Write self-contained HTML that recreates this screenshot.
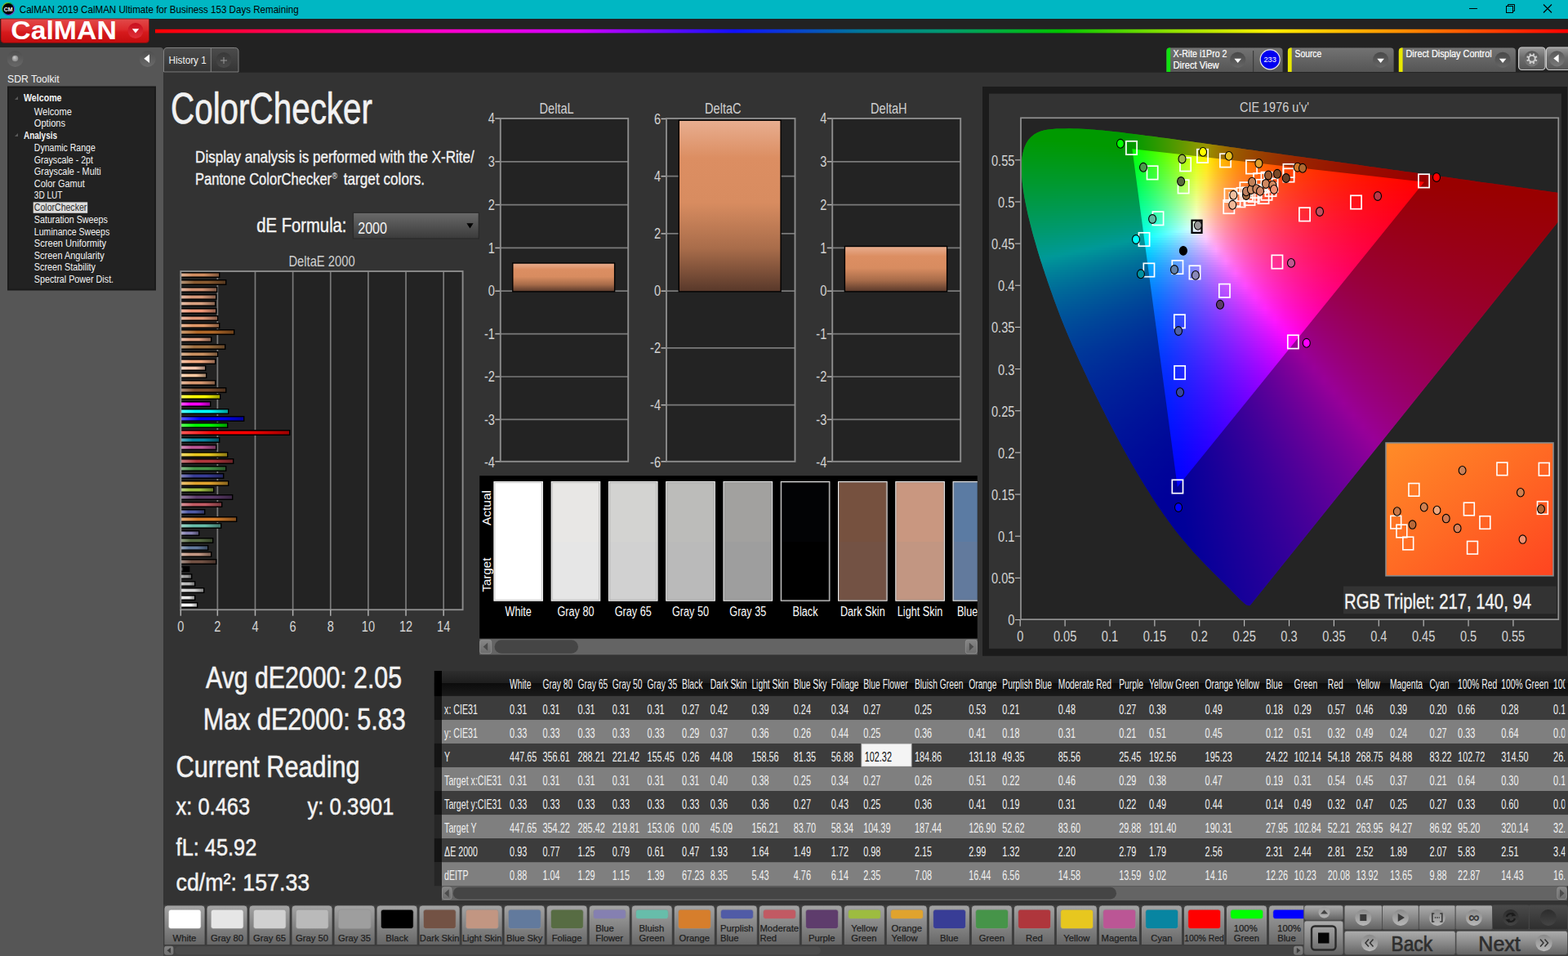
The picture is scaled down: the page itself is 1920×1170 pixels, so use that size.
<!DOCTYPE html>
<html><head><meta charset="utf-8"><title>CalMAN 2019 - ColorChecker</title>
<style>
html,body{margin:0;padding:0;background:#1f1f1f;width:1920px;height:1170px;overflow:hidden}
#cie i{position:absolute;left:0;width:660px;height:3px;display:block}
text{white-space:pre}
</style></head><body>
<svg width="1920" height="1170" viewBox="0 0 1920 1170" style="position:absolute;left:0;top:0;" font-family="Liberation Sans, sans-serif"><defs><linearGradient id="ring" x1="0" y1="0" x2="1" y2="1"><stop offset="0" stop-color="#f0c000"/><stop offset="0.35" stop-color="#00c040"/><stop offset="0.65" stop-color="#3050ff"/><stop offset="1" stop-color="#e020a0"/></linearGradient><linearGradient id="g1" x1="0" y1="0" x2="0" y2="1"><stop offset="0" stop-color="#e24a4a"/><stop offset="0.45" stop-color="#dc2a2c"/><stop offset="0.55" stop-color="#d61a1c"/><stop offset="1" stop-color="#c40c0e"/></linearGradient><linearGradient id="g2" x1="0" y1="0" x2="0" y2="1"><stop offset="0" stop-color="#c80f1e"/><stop offset="1" stop-color="#e03038"/></linearGradient><linearGradient id="g3" x1="0" y1="0" x2="1" y2="0"><stop offset="0" stop-color="#ff0000"/><stop offset="0.2" stop-color="#ff00c8"/><stop offset="0.3" stop-color="#d000ff"/><stop offset="0.41" stop-color="#1010ff"/><stop offset="0.5" stop-color="#007898"/><stop offset="0.56" stop-color="#009a70"/><stop offset="0.64" stop-color="#00c400"/><stop offset="0.72" stop-color="#90e000"/><stop offset="0.79" stop-color="#ffee00"/><stop offset="0.88" stop-color="#ff9000"/><stop offset="1" stop-color="#ff0000"/></linearGradient><linearGradient id="g4" x1="0" y1="0" x2="0" y2="1"><stop offset="0" stop-color="#4e4e4e"/><stop offset="1" stop-color="#686868"/></linearGradient><radialGradient id="g5" cx="0.5" cy="0.5" r="0.5" fx="0.35" fy="0.3"><stop offset="0" stop-color="#d0d0d0"/><stop offset="1" stop-color="#888888"/></radialGradient><linearGradient id="g6" x1="0" y1="0" x2="0" y2="1"><stop offset="0" stop-color="#4e4e4e"/><stop offset="1" stop-color="#6a6a6a"/></linearGradient><linearGradient id="g7" x1="0" y1="0" x2="0" y2="1"><stop offset="0" stop-color="#4c4c4c"/><stop offset="1" stop-color="#343434"/></linearGradient><linearGradient id="g8" x1="0" y1="0" x2="0" y2="1"><stop offset="0" stop-color="#383838"/><stop offset="1" stop-color="#4a4a4a"/></linearGradient><linearGradient id="g9" x1="0" y1="0" x2="0" y2="1"><stop offset="0" stop-color="#737373"/><stop offset="1" stop-color="#555555"/></linearGradient><linearGradient id="g10" x1="0" y1="0" x2="0" y2="1"><stop offset="0" stop-color="#484848"/><stop offset="1" stop-color="#666666"/></linearGradient><linearGradient id="g11" x1="0" y1="0" x2="0" y2="1"><stop offset="0" stop-color="#737373"/><stop offset="1" stop-color="#555555"/></linearGradient><linearGradient id="g12" x1="0" y1="0" x2="0" y2="1"><stop offset="0" stop-color="#484848"/><stop offset="1" stop-color="#666666"/></linearGradient><linearGradient id="g13" x1="0" y1="0" x2="0" y2="1"><stop offset="0" stop-color="#737373"/><stop offset="1" stop-color="#555555"/></linearGradient><linearGradient id="g14" x1="0" y1="0" x2="0" y2="1"><stop offset="0" stop-color="#484848"/><stop offset="1" stop-color="#666666"/></linearGradient><linearGradient id="g15" x1="0" y1="0" x2="0" y2="1"><stop offset="0" stop-color="#9a9a9a"/><stop offset="0.45" stop-color="#6c6c6c"/><stop offset="1" stop-color="#565656"/></linearGradient><linearGradient id="g16" x1="0" y1="0" x2="0" y2="1"><stop offset="0" stop-color="#585858"/><stop offset="1" stop-color="#7a7a7a"/></linearGradient><linearGradient id="g17" x1="0" y1="0" x2="0" y2="1"><stop offset="0" stop-color="#585858"/><stop offset="1" stop-color="#7a7a7a"/></linearGradient><linearGradient id="g18" x1="0" y1="0" x2="0" y2="1"><stop offset="0" stop-color="#6a6a6a"/><stop offset="1" stop-color="#3a3a3a"/></linearGradient><linearGradient id="g19" x1="0" y1="0" x2="1" y2="0"><stop offset="0" stop-color="#fff" stop-opacity="0.35"/><stop offset="0.3" stop-color="#fff" stop-opacity="0.0"/><stop offset="0.6" stop-color="#000" stop-opacity="0.0"/><stop offset="1" stop-color="#000" stop-opacity="0.38"/></linearGradient><linearGradient id="g20" x1="0" y1="0" x2="0" y2="1"><stop offset="0" stop-color="#000" stop-opacity="0.25"/><stop offset="0.25" stop-color="#000" stop-opacity="0"/><stop offset="0.75" stop-color="#000" stop-opacity="0"/><stop offset="1" stop-color="#000" stop-opacity="0.3"/></linearGradient><linearGradient id="g21" x1="0" y1="0" x2="0" y2="1"><stop offset="0" stop-color="#e8ae90"/><stop offset="0.22" stop-color="#dc8e62"/><stop offset="0.48" stop-color="#d88c60"/><stop offset="0.75" stop-color="#a86c4a"/><stop offset="1" stop-color="#58382a"/></linearGradient><linearGradient id="g22" x1="0" y1="0" x2="0" y2="1"><stop offset="0" stop-color="#868686"/><stop offset="1" stop-color="#6c6c6c"/></linearGradient><linearGradient id="g23" x1="0" y1="0" x2="0" y2="1"><stop offset="0" stop-color="#868686"/><stop offset="1" stop-color="#6c6c6c"/></linearGradient><linearGradient id="g24" x1="0" y1="0" x2="0" y2="1"><stop offset="0" stop-color="#2e2e2e"/><stop offset="0.47" stop-color="#1e1e1e"/><stop offset="0.5" stop-color="#0c0c0c"/><stop offset="1" stop-color="#1a1a1a"/></linearGradient><linearGradient id="g25" x1="0" y1="0" x2="0" y2="1"><stop offset="0" stop-color="#868686"/><stop offset="1" stop-color="#6c6c6c"/></linearGradient><linearGradient id="g26" x1="0" y1="0" x2="0" y2="1"><stop offset="0" stop-color="#868686"/><stop offset="1" stop-color="#6c6c6c"/></linearGradient><linearGradient id="g27" x1="0" y1="0" x2="0" y2="1"><stop offset="0" stop-color="#a4a4a4"/><stop offset="0.5" stop-color="#868686"/><stop offset="1" stop-color="#666666"/></linearGradient><linearGradient id="g28" x1="0" y1="0" x2="0" y2="1"><stop offset="0" stop-color="#868686"/><stop offset="1" stop-color="#6e6e6e"/></linearGradient><linearGradient id="g29" x1="0" y1="0" x2="0" y2="1"><stop offset="0" stop-color="#868686"/><stop offset="1" stop-color="#6e6e6e"/></linearGradient><linearGradient id="g30" x1="0" y1="0" x2="0" y2="1"><stop offset="0" stop-color="#adadad"/><stop offset="0.5" stop-color="#8a8a8a"/><stop offset="1" stop-color="#626262"/></linearGradient><linearGradient id="g31" x1="0" y1="0" x2="0" y2="1"><stop offset="0" stop-color="#4a4a4a"/><stop offset="1" stop-color="#2e2e2e"/></linearGradient><linearGradient id="g32" x1="0" y1="0" x2="0" y2="1"><stop offset="0" stop-color="#9c9c9c"/><stop offset="1" stop-color="#b4b4b4"/></linearGradient><linearGradient id="g33" x1="0" y1="0" x2="0" y2="1"><stop offset="0" stop-color="#8a8a8a"/><stop offset="1" stop-color="#b8b8b8"/></linearGradient><linearGradient id="g34" x1="0" y1="0" x2="0" y2="1"><stop offset="0" stop-color="#8a8a8a"/><stop offset="1" stop-color="#b8b8b8"/></linearGradient><linearGradient id="g35" x1="0" y1="0" x2="0" y2="1"><stop offset="0" stop-color="#8a8a8a"/><stop offset="1" stop-color="#b8b8b8"/></linearGradient><linearGradient id="g36" x1="0" y1="0" x2="0" y2="1"><stop offset="0" stop-color="#8a8a8a"/><stop offset="1" stop-color="#b8b8b8"/></linearGradient><linearGradient id="g37" x1="0" y1="0" x2="0" y2="1"><stop offset="0" stop-color="#2c2c2c"/><stop offset="1" stop-color="#444"/></linearGradient><linearGradient id="g38" x1="0" y1="0" x2="0" y2="1"><stop offset="0" stop-color="#2c2c2c"/><stop offset="1" stop-color="#444"/></linearGradient><linearGradient id="g39" x1="0" y1="0" x2="0" y2="1"><stop offset="0" stop-color="#8a8a8a"/><stop offset="1" stop-color="#b8b8b8"/></linearGradient><linearGradient id="g40" x1="0" y1="0" x2="0" y2="1"><stop offset="0" stop-color="#8a8a8a"/><stop offset="1" stop-color="#b8b8b8"/></linearGradient></defs>
<rect x="0.00" y="0.00" width="1920.00" height="1170.00" fill="#222222"/>
<rect x="0.00" y="0.00" width="1920.00" height="23.00" fill="#00b7c3"/>
<rect x="200.00" y="88.70" width="1720.00" height="1020.00" fill="#333333"/>
<path d="M0 58 H196 Q200 58 200 62 V1170 H0 Z" fill="#565656" />
<rect x="200.00" y="1107.30" width="1720.00" height="63.00" fill="#3c3c3c"/>
<circle cx="10.20" cy="10.90" r="7.70" fill="#000" />
<circle cx="10.2" cy="10.9" r="7.5" fill="none" stroke="url(#ring)" stroke-width="1.1"/>
<text x="10.20" y="13.80" font-size="8" fill="#fff" font-weight="bold" textLength="10.80" lengthAdjust="spacingAndGlyphs" text-anchor="middle" >CM</text>
<text x="23.80" y="15.80" font-size="12.2" fill="#000" textLength="341.80" lengthAdjust="spacingAndGlyphs" >CalMAN 2019 CalMAN Ultimate for Business 153 Days Remaining</text>
<line x1="1799.00" y1="10.50" x2="1809.00" y2="10.50" stroke="#000" stroke-width="1" />
<rect x="1844.50" y="7.50" width="8.00" height="8.00" fill="none" stroke="#000" stroke-width="1"/>
<path d="M1846.5 7.5 V5.5 H1854.5 V13.5 H1852.5" fill="none" stroke="#000" stroke-width="1" />
<path d="M1890 5.5 L1900 15.5 M1900 5.5 L1890 15.5" fill="none" stroke="#000" stroke-width="1.1" />
<path d="M1 23 H182.5 V48.5 Q182.5 52.5 178.5 52.5 H5 Q1 52.5 1 48.5 Z" fill="url(#g1)" stroke="#7a1010" stroke-width="0.8" />
<text x="13.30" y="47.80" font-size="31.6" fill="#fff" font-weight="bold" textLength="129.50" lengthAdjust="spacingAndGlyphs" >CalMAN</text>
<circle cx="166.00" cy="37.50" r="9.50" fill="url(#g2)" />
<path d="M161.8 35.3 H170.2 L166 40.6 Z" fill="#fff" />
<rect x="190.00" y="35.80" width="1730.00" height="4.60" fill="url(#g3)"/>
<circle cx="18.60" cy="72.00" r="10.00" fill="url(#g4)" />
<circle cx="18.50" cy="71.50" r="3.80" fill="url(#g5)" />
<circle cx="180.70" cy="72.00" r="10.00" fill="url(#g6)" />
<path d="M176.3 71.8 L183 66.5 V77.1 Z" fill="#fff" />
<text x="9.00" y="101.10" font-size="13.6" fill="#f2f2f2" textLength="63.70" lengthAdjust="spacingAndGlyphs" >SDR Toolkit</text>
<rect x="9.00" y="105.50" width="182.00" height="250.00" fill="#1a1a1a"/>
<rect x="11.00" y="107.50" width="178.00" height="246.00" fill="#222222"/>
<rect x="40.70" y="247.40" width="66.50" height="13.40" fill="#dcdcdc"/>
<text x="29.00" y="124.40" font-size="12" fill="#f4f4f4" font-weight="bold" textLength="46.50" lengthAdjust="spacingAndGlyphs" >Welcome</text>
<text x="41.80" y="140.50" font-size="12" fill="#f4f4f4" textLength="46.00" lengthAdjust="spacingAndGlyphs" >Welcome</text>
<text x="41.80" y="154.50" font-size="12" fill="#f4f4f4" textLength="38.30" lengthAdjust="spacingAndGlyphs" >Options</text>
<text x="29.00" y="169.50" font-size="12" fill="#f4f4f4" font-weight="bold" textLength="41.00" lengthAdjust="spacingAndGlyphs" >Analysis</text>
<text x="41.80" y="185.40" font-size="12" fill="#f4f4f4" textLength="75.00" lengthAdjust="spacingAndGlyphs" >Dynamic Range</text>
<text x="41.80" y="199.60" font-size="12" fill="#f4f4f4" textLength="72.20" lengthAdjust="spacingAndGlyphs" >Grayscale - 2pt</text>
<text x="41.80" y="214.40" font-size="12" fill="#f4f4f4" textLength="81.80" lengthAdjust="spacingAndGlyphs" >Grayscale - Multi</text>
<text x="41.80" y="229.40" font-size="12" fill="#f4f4f4" textLength="62.00" lengthAdjust="spacingAndGlyphs" >Color Gamut</text>
<text x="41.80" y="243.40" font-size="12" fill="#f4f4f4" textLength="34.70" lengthAdjust="spacingAndGlyphs" >3D LUT</text>
<text x="41.80" y="258.40" font-size="12" fill="#2a2a2a" textLength="64.50" lengthAdjust="spacingAndGlyphs" >ColorChecker</text>
<text x="41.80" y="273.40" font-size="12" fill="#f4f4f4" textLength="90.00" lengthAdjust="spacingAndGlyphs" >Saturation Sweeps</text>
<text x="41.80" y="287.70" font-size="12" fill="#f4f4f4" textLength="92.40" lengthAdjust="spacingAndGlyphs" >Luminance Sweeps</text>
<text x="41.80" y="302.40" font-size="12" fill="#f4f4f4" textLength="88.30" lengthAdjust="spacingAndGlyphs" >Screen Uniformity</text>
<text x="41.80" y="317.20" font-size="12" fill="#f4f4f4" textLength="85.90" lengthAdjust="spacingAndGlyphs" >Screen Angularity</text>
<text x="41.80" y="331.40" font-size="12" fill="#f4f4f4" textLength="75.20" lengthAdjust="spacingAndGlyphs" >Screen Stability</text>
<text x="41.80" y="346.40" font-size="12" fill="#f4f4f4" textLength="97.30" lengthAdjust="spacingAndGlyphs" >Spectral Power Dist.</text>
<path d="M22 118.0 V122.0 H18 Z" fill="#5a5a5a" />
<path d="M22 163.0 V167.0 H18 Z" fill="#5a5a5a" />
<path d="M200.5 88 V63 Q200.5 58.5 205 58.5 H287.5 Q292 58.5 292 63 V88 Z" fill="url(#g7)" stroke="#8a8a8a" stroke-width="0.9" />
<line x1="258.30" y1="59.00" x2="258.30" y2="88.00" stroke="#8a8a8a" stroke-width="0.9" />
<text x="206.40" y="78.20" font-size="12.4" fill="#f0f0f0" textLength="46.40" lengthAdjust="spacingAndGlyphs" >History 1</text>
<circle cx="274.00" cy="73.50" r="9.50" fill="url(#g8)" />
<path d="M274 70 V78 M270 74 H278" fill="none" stroke="#9a9a9a" stroke-width="1" />
<path d="M1428.4 88 V62.5 Q1428.4 58.5 1432.4 58.5 H1566.6 Q1570.6 58.5 1570.6 62.5 V88 Z" fill="url(#g9)" />
<path d="M1428.4 88 V62.5 Q1428.4 58.5 1432.4 58.5 H1433.2 V88 Z" fill="#10e010" />
<text x="1436.60" y="70.10" font-size="12" fill="#fff" textLength="65.80" lengthAdjust="spacingAndGlyphs"  stroke="#fff" stroke-width="0.2">X-Rite i1Pro 2</text>
<text x="1436.60" y="84.20" font-size="12" fill="#fff" textLength="56.00" lengthAdjust="spacingAndGlyphs"  stroke="#fff" stroke-width="0.2">Direct View</text>
<circle cx="1515.70" cy="73.30" r="9.60" fill="url(#g10)" />
<path d="M1511.4 71.7 H1520.0 L1515.7 76.89999999999999 Z" fill="#fff" />
<line x1="1534.60" y1="62.00" x2="1534.60" y2="88.00" stroke="#3c3c3c" stroke-width="1.2" />
<circle cx="1555.20" cy="72.80" r="12.00" fill="#0000f0" stroke="#e8e8e8" stroke-width="1.2" />
<text x="1555.20" y="76.30" font-size="9.8" fill="#fff" textLength="15.50" lengthAdjust="spacingAndGlyphs" text-anchor="middle" >233</text>
<path d="M1576.9 88 V62.5 Q1576.9 58.5 1580.9 58.5 H1702.6 Q1706.6 58.5 1706.6 62.5 V88 Z" fill="url(#g11)" />
<path d="M1576.9 88 V62.5 Q1576.9 58.5 1580.9 58.5 H1581.7 V88 Z" fill="#e8e800" />
<text x="1585.50" y="70.10" font-size="12" fill="#fff" textLength="32.80" lengthAdjust="spacingAndGlyphs"  stroke="#fff" stroke-width="0.2">Source</text>
<circle cx="1690.60" cy="73.30" r="9.60" fill="url(#g12)" />
<path d="M1686.3 71.7 H1694.8999999999999 L1690.6 76.89999999999999 Z" fill="#fff" />
<path d="M1712.8 88 V62.5 Q1712.8 58.5 1716.8 58.5 H1851.9 Q1855.9 58.5 1855.9 62.5 V88 Z" fill="url(#g13)" />
<path d="M1712.8 88 V62.5 Q1712.8 58.5 1716.8 58.5 H1717.6 V88 Z" fill="#e8e800" />
<text x="1721.50" y="70.10" font-size="12" fill="#fff" textLength="105.10" lengthAdjust="spacingAndGlyphs"  stroke="#fff" stroke-width="0.2">Direct Display Control</text>
<circle cx="1840.10" cy="73.30" r="9.60" fill="url(#g14)" />
<path d="M1835.8 71.7 H1844.3999999999999 L1840.1 76.89999999999999 Z" fill="#fff" />
<rect x="1859.60" y="58.00" width="32.50" height="27.50" fill="url(#g15)" rx="4" stroke="#cacaca" stroke-width="1.2"/>
<rect x="1893.40" y="58.00" width="32.00" height="27.50" fill="url(#g15)" rx="4" stroke="#cacaca" stroke-width="1.2"/>
<circle cx="1906.50" cy="71.80" r="9.60" fill="url(#g16)" />
<path d="M1902.3 71.6 L1908.6 66.6 V76.6 Z" fill="#fff" />
<circle cx="1875.80" cy="71.80" r="9.60" fill="url(#g17)" />
<path d="M1879.50 73.33 L1881.99 74.36 M1877.33 75.50 L1878.36 77.99 M1874.27 75.50 L1873.24 77.99 M1872.10 73.33 L1869.61 74.36 M1872.10 70.27 L1869.61 69.24 M1874.27 68.10 L1873.24 65.61 M1877.33 68.10 L1878.36 65.61 M1879.50 70.27 L1881.99 69.24 " fill="none" stroke="#cfcfcf" stroke-width="2.1" />
<circle cx="1875.80" cy="71.80" r="3.90" fill="none" stroke="#cfcfcf" stroke-width="1.9" />
<text x="209.00" y="150.50" font-size="54.5" fill="#f2f2f2" textLength="247.00" lengthAdjust="spacingAndGlyphs"  stroke="#f2f2f2" stroke-width="0.7">ColorChecker</text>
<text x="239.10" y="199.00" font-size="20.8" fill="#f2f2f2" textLength="341.70" lengthAdjust="spacingAndGlyphs"  stroke="#f2f2f2" stroke-width="0.35">Display analysis is performed with the X-Rite/</text>
<text x="239.10" y="226.10" font-size="20.8" fill="#f2f2f2" textLength="167.00" lengthAdjust="spacingAndGlyphs"  stroke="#f2f2f2" stroke-width="0.35">Pantone ColorChecker</text>
<text x="406.60" y="218.50" font-size="11.5" fill="#f2f2f2" textLength="6.60" lengthAdjust="spacingAndGlyphs" >®</text>
<text x="420.80" y="226.10" font-size="20.8" fill="#f2f2f2" textLength="99.20" lengthAdjust="spacingAndGlyphs"  stroke="#f2f2f2" stroke-width="0.35">target colors.</text>
<text x="314.30" y="284.40" font-size="24.2" fill="#f2f2f2" textLength="110.20" lengthAdjust="spacingAndGlyphs"  stroke="#f2f2f2" stroke-width="0.45">dE Formula:</text>
<rect x="432.50" y="260.30" width="153.80" height="31.70" fill="url(#g18)" stroke="#2a2a2a" stroke-width="1.2"/>
<text x="438.20" y="285.50" font-size="19.8" fill="#f2f2f2" textLength="35.80" lengthAdjust="spacingAndGlyphs" >2000</text>
<path d="M571.4 273.2 H579.6 L575.5 279.6 Z" fill="#000" />
<text x="353.40" y="325.70" font-size="18" fill="#d0d0d0" textLength="81.20" lengthAdjust="spacingAndGlyphs" >DeltaE 2000</text>
<rect x="221.30" y="332.00" width="345.30" height="414.20" fill="#232323"/>
<line x1="266.34" y1="332.00" x2="266.34" y2="746.20" stroke="#7a7a7a" stroke-width="1.7" />
<line x1="312.48" y1="332.00" x2="312.48" y2="746.20" stroke="#7a7a7a" stroke-width="1.7" />
<line x1="358.62" y1="332.00" x2="358.62" y2="746.20" stroke="#7a7a7a" stroke-width="1.7" />
<line x1="404.76" y1="332.00" x2="404.76" y2="746.20" stroke="#7a7a7a" stroke-width="1.7" />
<line x1="450.90" y1="332.00" x2="450.90" y2="746.20" stroke="#7a7a7a" stroke-width="1.7" />
<line x1="497.04" y1="332.00" x2="497.04" y2="746.20" stroke="#7a7a7a" stroke-width="1.7" />
<line x1="543.18" y1="332.00" x2="543.18" y2="746.20" stroke="#7a7a7a" stroke-width="1.7" />
<rect x="221.00" y="333.00" width="48.40" height="7.00" fill="#000"/>
<rect x="222.00" y="334.50" width="46.00" height="4.00" fill="#d08c60"/>
<rect x="222.00" y="334.50" width="46.00" height="4.00" fill="url(#g19)"/>
<rect x="222.00" y="334.50" width="46.00" height="4.00" fill="url(#g20)"/>
<rect x="221.00" y="342.00" width="56.40" height="7.00" fill="#000"/>
<rect x="222.00" y="343.50" width="54.00" height="4.00" fill="#8a5a30"/>
<rect x="222.00" y="343.50" width="54.00" height="4.00" fill="url(#g19)"/>
<rect x="222.00" y="343.50" width="54.00" height="4.00" fill="url(#g20)"/>
<rect x="221.00" y="351.00" width="45.40" height="7.00" fill="#000"/>
<rect x="222.00" y="352.50" width="43.00" height="4.00" fill="#d09070"/>
<rect x="222.00" y="352.50" width="43.00" height="4.00" fill="url(#g19)"/>
<rect x="222.00" y="352.50" width="43.00" height="4.00" fill="url(#g20)"/>
<rect x="221.00" y="360.00" width="44.40" height="7.00" fill="#000"/>
<rect x="222.00" y="361.50" width="42.00" height="4.00" fill="#d89878"/>
<rect x="222.00" y="361.50" width="42.00" height="4.00" fill="url(#g19)"/>
<rect x="222.00" y="361.50" width="42.00" height="4.00" fill="url(#g20)"/>
<rect x="221.00" y="368.00" width="43.40" height="7.00" fill="#000"/>
<rect x="222.00" y="369.50" width="41.00" height="4.00" fill="#d8a080"/>
<rect x="222.00" y="369.50" width="41.00" height="4.00" fill="url(#g19)"/>
<rect x="222.00" y="369.50" width="41.00" height="4.00" fill="url(#g20)"/>
<rect x="221.00" y="377.00" width="44.40" height="7.00" fill="#000"/>
<rect x="222.00" y="378.50" width="42.00" height="4.00" fill="#f09878"/>
<rect x="222.00" y="378.50" width="42.00" height="4.00" fill="url(#g19)"/>
<rect x="222.00" y="378.50" width="42.00" height="4.00" fill="url(#g20)"/>
<rect x="221.00" y="386.00" width="46.40" height="7.00" fill="#000"/>
<rect x="222.00" y="387.50" width="44.00" height="4.00" fill="#e09878"/>
<rect x="222.00" y="387.50" width="44.00" height="4.00" fill="url(#g19)"/>
<rect x="222.00" y="387.50" width="44.00" height="4.00" fill="url(#g20)"/>
<rect x="221.00" y="395.00" width="48.40" height="7.00" fill="#000"/>
<rect x="222.00" y="396.50" width="46.00" height="4.00" fill="#e09868"/>
<rect x="222.00" y="396.50" width="46.00" height="4.00" fill="url(#g19)"/>
<rect x="222.00" y="396.50" width="46.00" height="4.00" fill="url(#g20)"/>
<rect x="221.00" y="403.00" width="66.40" height="7.00" fill="#000"/>
<rect x="222.00" y="404.50" width="64.00" height="4.00" fill="#b06828"/>
<rect x="222.00" y="404.50" width="64.00" height="4.00" fill="url(#g19)"/>
<rect x="222.00" y="404.50" width="64.00" height="4.00" fill="url(#g20)"/>
<rect x="221.00" y="412.00" width="38.40" height="7.00" fill="#000"/>
<rect x="222.00" y="413.50" width="36.00" height="4.00" fill="#e0a080"/>
<rect x="222.00" y="413.50" width="36.00" height="4.00" fill="url(#g19)"/>
<rect x="222.00" y="413.50" width="36.00" height="4.00" fill="url(#g20)"/>
<rect x="221.00" y="421.00" width="55.40" height="7.00" fill="#000"/>
<rect x="222.00" y="422.50" width="53.00" height="4.00" fill="#a07040"/>
<rect x="222.00" y="422.50" width="53.00" height="4.00" fill="url(#g19)"/>
<rect x="222.00" y="422.50" width="53.00" height="4.00" fill="url(#g20)"/>
<rect x="221.00" y="430.00" width="46.40" height="7.00" fill="#000"/>
<rect x="222.00" y="431.50" width="44.00" height="4.00" fill="#c89060"/>
<rect x="222.00" y="431.50" width="44.00" height="4.00" fill="url(#g19)"/>
<rect x="222.00" y="431.50" width="44.00" height="4.00" fill="url(#g20)"/>
<rect x="221.00" y="439.00" width="43.40" height="7.00" fill="#000"/>
<rect x="222.00" y="440.50" width="41.00" height="4.00" fill="#f0a880"/>
<rect x="222.00" y="440.50" width="41.00" height="4.00" fill="url(#g19)"/>
<rect x="222.00" y="440.50" width="41.00" height="4.00" fill="url(#g20)"/>
<rect x="221.00" y="447.00" width="31.40" height="7.00" fill="#000"/>
<rect x="222.00" y="448.50" width="29.00" height="4.00" fill="#f8c8b0"/>
<rect x="222.00" y="448.50" width="29.00" height="4.00" fill="url(#g19)"/>
<rect x="222.00" y="448.50" width="29.00" height="4.00" fill="url(#g20)"/>
<rect x="221.00" y="456.00" width="32.40" height="7.00" fill="#000"/>
<rect x="222.00" y="457.50" width="30.00" height="4.00" fill="#f8c8a0"/>
<rect x="222.00" y="457.50" width="30.00" height="4.00" fill="url(#g19)"/>
<rect x="222.00" y="457.50" width="30.00" height="4.00" fill="url(#g20)"/>
<rect x="221.00" y="465.00" width="43.40" height="7.00" fill="#000"/>
<rect x="222.00" y="466.50" width="41.00" height="4.00" fill="#d89870"/>
<rect x="222.00" y="466.50" width="41.00" height="4.00" fill="url(#g19)"/>
<rect x="222.00" y="466.50" width="41.00" height="4.00" fill="url(#g20)"/>
<rect x="221.00" y="474.00" width="56.40" height="7.00" fill="#000"/>
<rect x="222.00" y="475.50" width="54.00" height="4.00" fill="#805030"/>
<rect x="222.00" y="475.50" width="54.00" height="4.00" fill="url(#g19)"/>
<rect x="222.00" y="475.50" width="54.00" height="4.00" fill="url(#g20)"/>
<rect x="221.00" y="482.00" width="49.40" height="7.00" fill="#000"/>
<rect x="222.00" y="483.50" width="47.00" height="4.00" fill="#ffff00"/>
<rect x="222.00" y="483.50" width="47.00" height="4.00" fill="url(#g19)"/>
<rect x="222.00" y="483.50" width="47.00" height="4.00" fill="url(#g20)"/>
<rect x="221.00" y="491.00" width="37.40" height="7.00" fill="#000"/>
<rect x="222.00" y="492.50" width="35.00" height="4.00" fill="#ff00ff"/>
<rect x="222.00" y="492.50" width="35.00" height="4.00" fill="url(#g19)"/>
<rect x="222.00" y="492.50" width="35.00" height="4.00" fill="url(#g20)"/>
<rect x="221.00" y="500.00" width="59.40" height="7.00" fill="#000"/>
<rect x="222.00" y="501.50" width="57.00" height="4.00" fill="#00ffff"/>
<rect x="222.00" y="501.50" width="57.00" height="4.00" fill="url(#g19)"/>
<rect x="222.00" y="501.50" width="57.00" height="4.00" fill="url(#g20)"/>
<rect x="221.00" y="509.00" width="78.40" height="7.00" fill="#000"/>
<rect x="222.00" y="510.50" width="76.00" height="4.00" fill="#0000ff"/>
<rect x="222.00" y="510.50" width="76.00" height="4.00" fill="url(#g19)"/>
<rect x="222.00" y="510.50" width="76.00" height="4.00" fill="url(#g20)"/>
<rect x="221.00" y="517.00" width="58.40" height="7.00" fill="#000"/>
<rect x="222.00" y="518.50" width="56.00" height="4.00" fill="#00ff00"/>
<rect x="222.00" y="518.50" width="56.00" height="4.00" fill="url(#g19)"/>
<rect x="222.00" y="518.50" width="56.00" height="4.00" fill="url(#g20)"/>
<rect x="221.00" y="526.00" width="134.40" height="7.00" fill="#000"/>
<rect x="222.00" y="527.50" width="132.00" height="4.00" fill="#ff0000"/>
<rect x="222.00" y="527.50" width="132.00" height="4.00" fill="url(#g19)"/>
<rect x="222.00" y="527.50" width="132.00" height="4.00" fill="url(#g20)"/>
<rect x="221.00" y="535.00" width="48.40" height="7.00" fill="#000"/>
<rect x="222.00" y="536.50" width="46.00" height="4.00" fill="#0885a1"/>
<rect x="222.00" y="536.50" width="46.00" height="4.00" fill="url(#g19)"/>
<rect x="222.00" y="536.50" width="46.00" height="4.00" fill="url(#g20)"/>
<rect x="221.00" y="544.00" width="44.40" height="7.00" fill="#000"/>
<rect x="222.00" y="545.50" width="42.00" height="4.00" fill="#bb5695"/>
<rect x="222.00" y="545.50" width="42.00" height="4.00" fill="url(#g19)"/>
<rect x="222.00" y="545.50" width="42.00" height="4.00" fill="url(#g20)"/>
<rect x="221.00" y="553.00" width="58.40" height="7.00" fill="#000"/>
<rect x="222.00" y="554.50" width="56.00" height="4.00" fill="#e7c71f"/>
<rect x="222.00" y="554.50" width="56.00" height="4.00" fill="url(#g19)"/>
<rect x="222.00" y="554.50" width="56.00" height="4.00" fill="url(#g20)"/>
<rect x="221.00" y="561.00" width="65.40" height="7.00" fill="#000"/>
<rect x="222.00" y="562.50" width="63.00" height="4.00" fill="#af363c"/>
<rect x="222.00" y="562.50" width="63.00" height="4.00" fill="url(#g19)"/>
<rect x="222.00" y="562.50" width="63.00" height="4.00" fill="url(#g20)"/>
<rect x="221.00" y="570.00" width="56.40" height="7.00" fill="#000"/>
<rect x="222.00" y="571.50" width="54.00" height="4.00" fill="#469449"/>
<rect x="222.00" y="571.50" width="54.00" height="4.00" fill="url(#g19)"/>
<rect x="222.00" y="571.50" width="54.00" height="4.00" fill="url(#g20)"/>
<rect x="221.00" y="579.00" width="53.40" height="7.00" fill="#000"/>
<rect x="222.00" y="580.50" width="51.00" height="4.00" fill="#383d96"/>
<rect x="222.00" y="580.50" width="51.00" height="4.00" fill="url(#g19)"/>
<rect x="222.00" y="580.50" width="51.00" height="4.00" fill="url(#g20)"/>
<rect x="221.00" y="588.00" width="59.40" height="7.00" fill="#000"/>
<rect x="222.00" y="589.50" width="57.00" height="4.00" fill="#e0a32e"/>
<rect x="222.00" y="589.50" width="57.00" height="4.00" fill="url(#g19)"/>
<rect x="222.00" y="589.50" width="57.00" height="4.00" fill="url(#g20)"/>
<rect x="221.00" y="596.00" width="41.40" height="7.00" fill="#000"/>
<rect x="222.00" y="597.50" width="39.00" height="4.00" fill="#9dbc40"/>
<rect x="222.00" y="597.50" width="39.00" height="4.00" fill="url(#g19)"/>
<rect x="222.00" y="597.50" width="39.00" height="4.00" fill="url(#g20)"/>
<rect x="221.00" y="605.00" width="64.40" height="7.00" fill="#000"/>
<rect x="222.00" y="606.50" width="62.00" height="4.00" fill="#5e3c6c"/>
<rect x="222.00" y="606.50" width="62.00" height="4.00" fill="url(#g19)"/>
<rect x="222.00" y="606.50" width="62.00" height="4.00" fill="url(#g20)"/>
<rect x="221.00" y="614.00" width="51.40" height="7.00" fill="#000"/>
<rect x="222.00" y="615.50" width="49.00" height="4.00" fill="#c15a63"/>
<rect x="222.00" y="615.50" width="49.00" height="4.00" fill="url(#g19)"/>
<rect x="222.00" y="615.50" width="49.00" height="4.00" fill="url(#g20)"/>
<rect x="221.00" y="623.00" width="30.40" height="7.00" fill="#000"/>
<rect x="222.00" y="624.50" width="28.00" height="4.00" fill="#505ba6"/>
<rect x="222.00" y="624.50" width="28.00" height="4.00" fill="url(#g19)"/>
<rect x="222.00" y="624.50" width="28.00" height="4.00" fill="url(#g20)"/>
<rect x="221.00" y="632.00" width="69.40" height="7.00" fill="#000"/>
<rect x="222.00" y="633.50" width="67.00" height="4.00" fill="#d67e2c"/>
<rect x="222.00" y="633.50" width="67.00" height="4.00" fill="url(#g19)"/>
<rect x="222.00" y="633.50" width="67.00" height="4.00" fill="url(#g20)"/>
<rect x="221.00" y="640.00" width="50.40" height="7.00" fill="#000"/>
<rect x="222.00" y="641.50" width="48.00" height="4.00" fill="#67bdaa"/>
<rect x="222.00" y="641.50" width="48.00" height="4.00" fill="url(#g19)"/>
<rect x="222.00" y="641.50" width="48.00" height="4.00" fill="url(#g20)"/>
<rect x="221.00" y="649.00" width="23.40" height="7.00" fill="#000"/>
<rect x="222.00" y="650.50" width="21.00" height="4.00" fill="#8580b1"/>
<rect x="222.00" y="650.50" width="21.00" height="4.00" fill="url(#g19)"/>
<rect x="222.00" y="650.50" width="21.00" height="4.00" fill="url(#g20)"/>
<rect x="221.00" y="658.00" width="40.40" height="7.00" fill="#000"/>
<rect x="222.00" y="659.50" width="38.00" height="4.00" fill="#576c43"/>
<rect x="222.00" y="659.50" width="38.00" height="4.00" fill="url(#g19)"/>
<rect x="222.00" y="659.50" width="38.00" height="4.00" fill="url(#g20)"/>
<rect x="221.00" y="667.00" width="34.40" height="7.00" fill="#000"/>
<rect x="222.00" y="668.50" width="32.00" height="4.00" fill="#627a9d"/>
<rect x="222.00" y="668.50" width="32.00" height="4.00" fill="url(#g19)"/>
<rect x="222.00" y="668.50" width="32.00" height="4.00" fill="url(#g20)"/>
<rect x="221.00" y="675.00" width="38.40" height="7.00" fill="#000"/>
<rect x="222.00" y="676.50" width="36.00" height="4.00" fill="#c29682"/>
<rect x="222.00" y="676.50" width="36.00" height="4.00" fill="url(#g19)"/>
<rect x="222.00" y="676.50" width="36.00" height="4.00" fill="url(#g20)"/>
<rect x="221.00" y="684.00" width="44.40" height="7.00" fill="#000"/>
<rect x="222.00" y="685.50" width="42.00" height="4.00" fill="#735244"/>
<rect x="222.00" y="685.50" width="42.00" height="4.00" fill="url(#g19)"/>
<rect x="222.00" y="685.50" width="42.00" height="4.00" fill="url(#g20)"/>
<rect x="221.00" y="693.00" width="11.40" height="7.00" fill="#000"/>
<rect x="222.00" y="694.50" width="9.00" height="4.00" fill="#000000"/>
<rect x="222.00" y="694.50" width="9.00" height="4.00" fill="url(#g19)"/>
<rect x="222.00" y="694.50" width="9.00" height="4.00" fill="url(#g20)"/>
<rect x="221.00" y="702.00" width="14.40" height="7.00" fill="#000"/>
<rect x="222.00" y="703.50" width="12.00" height="4.00" fill="#9e9e9e"/>
<rect x="222.00" y="703.50" width="12.00" height="4.00" fill="url(#g19)"/>
<rect x="222.00" y="703.50" width="12.00" height="4.00" fill="url(#g20)"/>
<rect x="221.00" y="711.00" width="18.40" height="7.00" fill="#000"/>
<rect x="222.00" y="712.50" width="16.00" height="4.00" fill="#bababa"/>
<rect x="222.00" y="712.50" width="16.00" height="4.00" fill="url(#g19)"/>
<rect x="222.00" y="712.50" width="16.00" height="4.00" fill="url(#g20)"/>
<rect x="221.00" y="719.00" width="29.40" height="7.00" fill="#000"/>
<rect x="222.00" y="720.50" width="27.00" height="4.00" fill="#d1d1d1"/>
<rect x="222.00" y="720.50" width="27.00" height="4.00" fill="url(#g19)"/>
<rect x="222.00" y="720.50" width="27.00" height="4.00" fill="url(#g20)"/>
<rect x="221.00" y="728.00" width="18.40" height="7.00" fill="#000"/>
<rect x="222.00" y="729.50" width="16.00" height="4.00" fill="#e6e6e6"/>
<rect x="222.00" y="729.50" width="16.00" height="4.00" fill="url(#g19)"/>
<rect x="222.00" y="729.50" width="16.00" height="4.00" fill="url(#g20)"/>
<rect x="221.00" y="737.00" width="21.40" height="7.00" fill="#000"/>
<rect x="222.00" y="738.50" width="19.00" height="4.00" fill="#ffffff"/>
<rect x="222.00" y="738.50" width="19.00" height="4.00" fill="url(#g19)"/>
<rect x="222.00" y="738.50" width="19.00" height="4.00" fill="url(#g20)"/>
<rect x="221.30" y="332.00" width="345.30" height="414.20" fill="none" stroke="#8c8c8c" stroke-width="1.9"/>
<line x1="221.30" y1="746.20" x2="221.30" y2="753.70" stroke="#b0b0b0" stroke-width="1.5" />
<text x="221.30" y="772.80" font-size="17.6" fill="#d4d4d4" textLength="8.12" lengthAdjust="spacingAndGlyphs" text-anchor="middle" >0</text>
<line x1="266.34" y1="746.20" x2="266.34" y2="753.70" stroke="#b0b0b0" stroke-width="1.5" />
<text x="266.34" y="772.80" font-size="17.6" fill="#d4d4d4" textLength="8.12" lengthAdjust="spacingAndGlyphs" text-anchor="middle" >2</text>
<line x1="312.48" y1="746.20" x2="312.48" y2="753.70" stroke="#b0b0b0" stroke-width="1.5" />
<text x="312.48" y="772.80" font-size="17.6" fill="#d4d4d4" textLength="8.12" lengthAdjust="spacingAndGlyphs" text-anchor="middle" >4</text>
<line x1="358.62" y1="746.20" x2="358.62" y2="753.70" stroke="#b0b0b0" stroke-width="1.5" />
<text x="358.62" y="772.80" font-size="17.6" fill="#d4d4d4" textLength="8.12" lengthAdjust="spacingAndGlyphs" text-anchor="middle" >6</text>
<line x1="404.76" y1="746.20" x2="404.76" y2="753.70" stroke="#b0b0b0" stroke-width="1.5" />
<text x="404.76" y="772.80" font-size="17.6" fill="#d4d4d4" textLength="8.12" lengthAdjust="spacingAndGlyphs" text-anchor="middle" >8</text>
<line x1="450.90" y1="746.20" x2="450.90" y2="753.70" stroke="#b0b0b0" stroke-width="1.5" />
<text x="450.90" y="772.80" font-size="17.6" fill="#d4d4d4" textLength="16.25" lengthAdjust="spacingAndGlyphs" text-anchor="middle" >10</text>
<line x1="497.04" y1="746.20" x2="497.04" y2="753.70" stroke="#b0b0b0" stroke-width="1.5" />
<text x="497.04" y="772.80" font-size="17.6" fill="#d4d4d4" textLength="16.25" lengthAdjust="spacingAndGlyphs" text-anchor="middle" >12</text>
<line x1="543.18" y1="746.20" x2="543.18" y2="753.70" stroke="#b0b0b0" stroke-width="1.5" />
<text x="543.18" y="772.80" font-size="17.6" fill="#d4d4d4" textLength="16.25" lengthAdjust="spacingAndGlyphs" text-anchor="middle" >14</text>
<rect x="612.80" y="145.00" width="156.40" height="419.80" fill="#232323"/>
<line x1="606.30" y1="145.00" x2="612.80" y2="145.00" stroke="#b8b8b8" stroke-width="1.5" />
<text x="605.90" y="151.20" font-size="17.6" fill="#d4d4d4" textLength="8.12" lengthAdjust="spacingAndGlyphs" text-anchor="end" >4</text>
<line x1="612.80" y1="197.80" x2="769.20" y2="197.80" stroke="#7a7a7a" stroke-width="1.7" />
<line x1="606.30" y1="197.80" x2="612.80" y2="197.80" stroke="#b8b8b8" stroke-width="1.5" />
<text x="605.90" y="204.00" font-size="17.6" fill="#d4d4d4" textLength="8.12" lengthAdjust="spacingAndGlyphs" text-anchor="end" >3</text>
<line x1="612.80" y1="250.60" x2="769.20" y2="250.60" stroke="#7a7a7a" stroke-width="1.7" />
<line x1="606.30" y1="250.60" x2="612.80" y2="250.60" stroke="#b8b8b8" stroke-width="1.5" />
<text x="605.90" y="256.80" font-size="17.6" fill="#d4d4d4" textLength="8.12" lengthAdjust="spacingAndGlyphs" text-anchor="end" >2</text>
<line x1="612.80" y1="303.40" x2="769.20" y2="303.40" stroke="#7a7a7a" stroke-width="1.7" />
<line x1="606.30" y1="303.40" x2="612.80" y2="303.40" stroke="#b8b8b8" stroke-width="1.5" />
<text x="605.90" y="309.60" font-size="17.6" fill="#d4d4d4" textLength="8.12" lengthAdjust="spacingAndGlyphs" text-anchor="end" >1</text>
<line x1="612.80" y1="356.20" x2="769.20" y2="356.20" stroke="#7a7a7a" stroke-width="1.7" />
<line x1="606.30" y1="356.20" x2="612.80" y2="356.20" stroke="#b8b8b8" stroke-width="1.5" />
<text x="605.90" y="362.40" font-size="17.6" fill="#d4d4d4" textLength="8.12" lengthAdjust="spacingAndGlyphs" text-anchor="end" >0</text>
<line x1="612.80" y1="408.60" x2="769.20" y2="408.60" stroke="#7a7a7a" stroke-width="1.7" />
<line x1="606.30" y1="408.60" x2="612.80" y2="408.60" stroke="#b8b8b8" stroke-width="1.5" />
<text x="605.90" y="414.80" font-size="17.6" fill="#d4d4d4" textLength="12.99" lengthAdjust="spacingAndGlyphs" text-anchor="end" >-1</text>
<line x1="612.80" y1="461.01" x2="769.20" y2="461.01" stroke="#7a7a7a" stroke-width="1.7" />
<line x1="606.30" y1="461.01" x2="612.80" y2="461.01" stroke="#b8b8b8" stroke-width="1.5" />
<text x="605.90" y="467.21" font-size="17.6" fill="#d4d4d4" textLength="12.99" lengthAdjust="spacingAndGlyphs" text-anchor="end" >-2</text>
<line x1="612.80" y1="513.41" x2="769.20" y2="513.41" stroke="#7a7a7a" stroke-width="1.7" />
<line x1="606.30" y1="513.41" x2="612.80" y2="513.41" stroke="#b8b8b8" stroke-width="1.5" />
<text x="605.90" y="519.61" font-size="17.6" fill="#d4d4d4" textLength="12.99" lengthAdjust="spacingAndGlyphs" text-anchor="end" >-3</text>
<line x1="606.30" y1="564.80" x2="612.80" y2="564.80" stroke="#b8b8b8" stroke-width="1.5" />
<text x="605.90" y="572.02" font-size="17.6" fill="#d4d4d4" textLength="12.99" lengthAdjust="spacingAndGlyphs" text-anchor="end" >-4</text>
<rect x="612.80" y="145.00" width="156.40" height="419.80" fill="none" stroke="#8c8c8c" stroke-width="1.9"/>
<rect x="627.80" y="322.00" width="124.80" height="34.90" fill="url(#g21)" stroke="#000" stroke-width="1.4"/>
<text x="681.60" y="139.00" font-size="18" fill="#d0d0d0" textLength="42.15" lengthAdjust="spacingAndGlyphs" text-anchor="middle" >DeltaL</text>
<rect x="816.00" y="145.00" width="157.50" height="419.80" fill="#232323"/>
<line x1="809.50" y1="145.42" x2="816.00" y2="145.42" stroke="#b8b8b8" stroke-width="1.5" />
<text x="809.10" y="151.62" font-size="17.6" fill="#d4d4d4" textLength="8.12" lengthAdjust="spacingAndGlyphs" text-anchor="end" >6</text>
<line x1="816.00" y1="215.68" x2="973.50" y2="215.68" stroke="#7a7a7a" stroke-width="1.7" />
<line x1="809.50" y1="215.68" x2="816.00" y2="215.68" stroke="#b8b8b8" stroke-width="1.5" />
<text x="809.10" y="221.88" font-size="17.6" fill="#d4d4d4" textLength="8.12" lengthAdjust="spacingAndGlyphs" text-anchor="end" >4</text>
<line x1="816.00" y1="285.94" x2="973.50" y2="285.94" stroke="#7a7a7a" stroke-width="1.7" />
<line x1="809.50" y1="285.94" x2="816.00" y2="285.94" stroke="#b8b8b8" stroke-width="1.5" />
<text x="809.10" y="292.14" font-size="17.6" fill="#d4d4d4" textLength="8.12" lengthAdjust="spacingAndGlyphs" text-anchor="end" >2</text>
<line x1="816.00" y1="356.20" x2="973.50" y2="356.20" stroke="#7a7a7a" stroke-width="1.7" />
<line x1="809.50" y1="356.20" x2="816.00" y2="356.20" stroke="#b8b8b8" stroke-width="1.5" />
<text x="809.10" y="362.40" font-size="17.6" fill="#d4d4d4" textLength="8.12" lengthAdjust="spacingAndGlyphs" text-anchor="end" >0</text>
<line x1="816.00" y1="425.93" x2="973.50" y2="425.93" stroke="#7a7a7a" stroke-width="1.7" />
<line x1="809.50" y1="425.93" x2="816.00" y2="425.93" stroke="#b8b8b8" stroke-width="1.5" />
<text x="809.10" y="432.13" font-size="17.6" fill="#d4d4d4" textLength="12.99" lengthAdjust="spacingAndGlyphs" text-anchor="end" >-2</text>
<line x1="816.00" y1="495.67" x2="973.50" y2="495.67" stroke="#7a7a7a" stroke-width="1.7" />
<line x1="809.50" y1="495.67" x2="816.00" y2="495.67" stroke="#b8b8b8" stroke-width="1.5" />
<text x="809.10" y="501.87" font-size="17.6" fill="#d4d4d4" textLength="12.99" lengthAdjust="spacingAndGlyphs" text-anchor="end" >-4</text>
<line x1="809.50" y1="564.80" x2="816.00" y2="564.80" stroke="#b8b8b8" stroke-width="1.5" />
<text x="809.10" y="571.60" font-size="17.6" fill="#d4d4d4" textLength="12.99" lengthAdjust="spacingAndGlyphs" text-anchor="end" >-6</text>
<rect x="816.00" y="145.00" width="157.50" height="419.80" fill="none" stroke="#8c8c8c" stroke-width="1.9"/>
<rect x="831.30" y="147.20" width="124.80" height="209.70" fill="url(#g21)" stroke="#000" stroke-width="1.4"/>
<text x="885.35" y="139.00" font-size="18" fill="#d0d0d0" textLength="44.57" lengthAdjust="spacingAndGlyphs" text-anchor="middle" >DeltaC</text>
<rect x="1019.20" y="145.00" width="157.00" height="419.80" fill="#232323"/>
<line x1="1012.70" y1="145.00" x2="1019.20" y2="145.00" stroke="#b8b8b8" stroke-width="1.5" />
<text x="1012.30" y="151.20" font-size="17.6" fill="#d4d4d4" textLength="8.12" lengthAdjust="spacingAndGlyphs" text-anchor="end" >4</text>
<line x1="1019.20" y1="197.80" x2="1176.20" y2="197.80" stroke="#7a7a7a" stroke-width="1.7" />
<line x1="1012.70" y1="197.80" x2="1019.20" y2="197.80" stroke="#b8b8b8" stroke-width="1.5" />
<text x="1012.30" y="204.00" font-size="17.6" fill="#d4d4d4" textLength="8.12" lengthAdjust="spacingAndGlyphs" text-anchor="end" >3</text>
<line x1="1019.20" y1="250.60" x2="1176.20" y2="250.60" stroke="#7a7a7a" stroke-width="1.7" />
<line x1="1012.70" y1="250.60" x2="1019.20" y2="250.60" stroke="#b8b8b8" stroke-width="1.5" />
<text x="1012.30" y="256.80" font-size="17.6" fill="#d4d4d4" textLength="8.12" lengthAdjust="spacingAndGlyphs" text-anchor="end" >2</text>
<line x1="1019.20" y1="303.40" x2="1176.20" y2="303.40" stroke="#7a7a7a" stroke-width="1.7" />
<line x1="1012.70" y1="303.40" x2="1019.20" y2="303.40" stroke="#b8b8b8" stroke-width="1.5" />
<text x="1012.30" y="309.60" font-size="17.6" fill="#d4d4d4" textLength="8.12" lengthAdjust="spacingAndGlyphs" text-anchor="end" >1</text>
<line x1="1019.20" y1="356.20" x2="1176.20" y2="356.20" stroke="#7a7a7a" stroke-width="1.7" />
<line x1="1012.70" y1="356.20" x2="1019.20" y2="356.20" stroke="#b8b8b8" stroke-width="1.5" />
<text x="1012.30" y="362.40" font-size="17.6" fill="#d4d4d4" textLength="8.12" lengthAdjust="spacingAndGlyphs" text-anchor="end" >0</text>
<line x1="1019.20" y1="408.60" x2="1176.20" y2="408.60" stroke="#7a7a7a" stroke-width="1.7" />
<line x1="1012.70" y1="408.60" x2="1019.20" y2="408.60" stroke="#b8b8b8" stroke-width="1.5" />
<text x="1012.30" y="414.80" font-size="17.6" fill="#d4d4d4" textLength="12.99" lengthAdjust="spacingAndGlyphs" text-anchor="end" >-1</text>
<line x1="1019.20" y1="461.01" x2="1176.20" y2="461.01" stroke="#7a7a7a" stroke-width="1.7" />
<line x1="1012.70" y1="461.01" x2="1019.20" y2="461.01" stroke="#b8b8b8" stroke-width="1.5" />
<text x="1012.30" y="467.21" font-size="17.6" fill="#d4d4d4" textLength="12.99" lengthAdjust="spacingAndGlyphs" text-anchor="end" >-2</text>
<line x1="1019.20" y1="513.41" x2="1176.20" y2="513.41" stroke="#7a7a7a" stroke-width="1.7" />
<line x1="1012.70" y1="513.41" x2="1019.20" y2="513.41" stroke="#b8b8b8" stroke-width="1.5" />
<text x="1012.30" y="519.61" font-size="17.6" fill="#d4d4d4" textLength="12.99" lengthAdjust="spacingAndGlyphs" text-anchor="end" >-3</text>
<line x1="1012.70" y1="564.80" x2="1019.20" y2="564.80" stroke="#b8b8b8" stroke-width="1.5" />
<text x="1012.30" y="572.02" font-size="17.6" fill="#d4d4d4" textLength="12.99" lengthAdjust="spacingAndGlyphs" text-anchor="end" >-4</text>
<rect x="1019.20" y="145.00" width="157.00" height="419.80" fill="none" stroke="#8c8c8c" stroke-width="1.9"/>
<rect x="1034.40" y="301.50" width="125.20" height="55.40" fill="url(#g21)" stroke="#000" stroke-width="1.4"/>
<text x="1088.30" y="139.00" font-size="18" fill="#d0d0d0" textLength="44.57" lengthAdjust="spacingAndGlyphs" text-anchor="middle" >DeltaH</text>
<rect x="587.20" y="582.20" width="609.60" height="199.50" fill="#000"/>
<clipPath id="swc"><rect x="587.2" y="582.2" width="609.6" height="199.5"/></clipPath><g clip-path="url(#swc)">
<rect x="604.90" y="589.60" width="59.60" height="73.40" fill="#ffffff"/>
<rect x="604.90" y="663.00" width="59.60" height="72.20" fill="#ffffff"/>
<rect x="605.90" y="590.60" width="57.60" height="143.60" fill="none" stroke="#808080" stroke-width="1" stroke-opacity="0.45"/>
<rect x="604.90" y="589.60" width="59.60" height="145.60" fill="none" stroke="#f6f6f6" stroke-width="1"/>
<text x="634.70" y="754.30" font-size="15.8" fill="#fff" textLength="32.31" lengthAdjust="spacingAndGlyphs" text-anchor="middle" >White</text>
<rect x="675.17" y="589.60" width="59.60" height="73.40" fill="#e8e7e5"/>
<rect x="675.17" y="663.00" width="59.60" height="72.20" fill="#e6e6e6"/>
<rect x="676.17" y="590.60" width="57.60" height="143.60" fill="none" stroke="#808080" stroke-width="1" stroke-opacity="0.45"/>
<rect x="675.17" y="589.60" width="59.60" height="145.60" fill="none" stroke="#f6f6f6" stroke-width="1"/>
<text x="704.97" y="754.30" font-size="15.8" fill="#fff" textLength="44.96" lengthAdjust="spacingAndGlyphs" text-anchor="middle" >Gray 80</text>
<rect x="745.44" y="589.60" width="59.60" height="73.40" fill="#d3d3d1"/>
<rect x="745.44" y="663.00" width="59.60" height="72.20" fill="#d1d1d1"/>
<rect x="746.44" y="590.60" width="57.60" height="143.60" fill="none" stroke="#808080" stroke-width="1" stroke-opacity="0.45"/>
<rect x="745.44" y="589.60" width="59.60" height="145.60" fill="none" stroke="#f6f6f6" stroke-width="1"/>
<text x="775.24" y="754.30" font-size="15.8" fill="#fff" textLength="44.96" lengthAdjust="spacingAndGlyphs" text-anchor="middle" >Gray 65</text>
<rect x="815.71" y="589.60" width="59.60" height="73.40" fill="#bcbcba"/>
<rect x="815.71" y="663.00" width="59.60" height="72.20" fill="#bababa"/>
<rect x="816.71" y="590.60" width="57.60" height="143.60" fill="none" stroke="#808080" stroke-width="1" stroke-opacity="0.45"/>
<rect x="815.71" y="589.60" width="59.60" height="145.60" fill="none" stroke="#f6f6f6" stroke-width="1"/>
<text x="845.51" y="754.30" font-size="15.8" fill="#fff" textLength="44.96" lengthAdjust="spacingAndGlyphs" text-anchor="middle" >Gray 50</text>
<rect x="885.98" y="589.60" width="59.60" height="73.40" fill="#a2a19f"/>
<rect x="885.98" y="663.00" width="59.60" height="72.20" fill="#9e9e9e"/>
<rect x="886.98" y="590.60" width="57.60" height="143.60" fill="none" stroke="#808080" stroke-width="1" stroke-opacity="0.45"/>
<rect x="885.98" y="589.60" width="59.60" height="145.60" fill="none" stroke="#f6f6f6" stroke-width="1"/>
<text x="915.78" y="754.30" font-size="15.8" fill="#fff" textLength="44.96" lengthAdjust="spacingAndGlyphs" text-anchor="middle" >Gray 35</text>
<rect x="956.25" y="589.60" width="59.60" height="73.40" fill="#020305"/>
<rect x="956.25" y="663.00" width="59.60" height="72.20" fill="#000000"/>
<rect x="957.25" y="590.60" width="57.60" height="143.60" fill="none" stroke="#808080" stroke-width="1" stroke-opacity="0.45"/>
<rect x="956.25" y="589.60" width="59.60" height="145.60" fill="none" stroke="#f6f6f6" stroke-width="1"/>
<text x="986.05" y="754.30" font-size="15.8" fill="#fff" textLength="30.91" lengthAdjust="spacingAndGlyphs" text-anchor="middle" >Black</text>
<rect x="1026.52" y="589.60" width="59.60" height="73.40" fill="#76513f"/>
<rect x="1026.52" y="663.00" width="59.60" height="72.20" fill="#735244"/>
<rect x="1027.52" y="590.60" width="57.60" height="143.60" fill="none" stroke="#808080" stroke-width="1" stroke-opacity="0.45"/>
<rect x="1026.52" y="589.60" width="59.60" height="145.60" fill="none" stroke="#f6f6f6" stroke-width="1"/>
<text x="1056.32" y="754.30" font-size="15.8" fill="#fff" textLength="54.79" lengthAdjust="spacingAndGlyphs" text-anchor="middle" >Dark Skin</text>
<rect x="1096.79" y="589.60" width="59.60" height="73.40" fill="#c99780"/>
<rect x="1096.79" y="663.00" width="59.60" height="72.20" fill="#c29682"/>
<rect x="1097.79" y="590.60" width="57.60" height="143.60" fill="none" stroke="#808080" stroke-width="1" stroke-opacity="0.45"/>
<rect x="1096.79" y="589.60" width="59.60" height="145.60" fill="none" stroke="#f6f6f6" stroke-width="1"/>
<text x="1126.59" y="754.30" font-size="15.8" fill="#fff" textLength="55.51" lengthAdjust="spacingAndGlyphs" text-anchor="middle" >Light Skin</text>
<rect x="1167.06" y="589.60" width="59.60" height="73.40" fill="#5b7ba3"/>
<rect x="1167.06" y="663.00" width="59.60" height="72.20" fill="#627a9d"/>
<rect x="1168.06" y="590.60" width="57.60" height="143.60" fill="none" stroke="#808080" stroke-width="1" stroke-opacity="0.45"/>
<rect x="1167.06" y="589.60" width="59.60" height="145.60" fill="none" stroke="#f6f6f6" stroke-width="1"/>
<text x="1196.86" y="754.30" font-size="15.8" fill="#fff" textLength="49.88" lengthAdjust="spacingAndGlyphs" text-anchor="middle" >Blue Sky</text>
</g>
<text x="601.20" y="643.00" font-size="14" fill="#fff" textLength="43.00" lengthAdjust="spacingAndGlyphs" transform="rotate(-90 601.20 643.00)" >Actual</text>
<text x="601.20" y="724.50" font-size="14" fill="#fff" textLength="42.00" lengthAdjust="spacingAndGlyphs" transform="rotate(-90 601.20 724.50)" >Target</text>
<rect x="587.20" y="781.70" width="609.60" height="19.60" fill="#646464"/>
<rect x="605.60" y="783.20" width="102.40" height="16.60" fill="#454545" rx="8.299999999999955"/>
<rect x="587.70" y="783.20" width="14.00" height="16.60" fill="url(#g22)" rx="2.5" stroke="#949494" stroke-width="0.8"/>
<path d="M591.7 791.5 L597.2 786.5 V796.5 Z" fill="#4c4c4c" />
<rect x="1182.30" y="783.20" width="14.00" height="16.60" fill="url(#g23)" rx="2.5" stroke="#949494" stroke-width="0.8"/>
<path d="M1192.3 791.5 L1186.8 786.5 V796.5 Z" fill="#4c4c4c" />
<text x="252.00" y="842.00" font-size="37" fill="#f2f2f2" textLength="240.00" lengthAdjust="spacingAndGlyphs"  stroke="#f2f2f2" stroke-width="0.6">Avg dE2000: 2.05</text>
<text x="248.70" y="892.60" font-size="37" fill="#f2f2f2" textLength="248.00" lengthAdjust="spacingAndGlyphs"  stroke="#f2f2f2" stroke-width="0.6">Max dE2000: 5.83</text>
<text x="215.60" y="951.40" font-size="37" fill="#f2f2f2" textLength="225.00" lengthAdjust="spacingAndGlyphs"  stroke="#f2f2f2" stroke-width="0.6">Current Reading</text>
<text x="215.60" y="996.50" font-size="30" fill="#f2f2f2" textLength="90.50" lengthAdjust="spacingAndGlyphs"  stroke="#f2f2f2" stroke-width="0.5">x: 0.463</text>
<text x="376.40" y="996.50" font-size="30" fill="#f2f2f2" textLength="106.00" lengthAdjust="spacingAndGlyphs"  stroke="#f2f2f2" stroke-width="0.5">y: 0.3901</text>
<text x="215.60" y="1047.10" font-size="30" fill="#f2f2f2" textLength="98.70" lengthAdjust="spacingAndGlyphs"  stroke="#f2f2f2" stroke-width="0.5">fL: 45.92</text>
<text x="215.60" y="1089.50" font-size="30" fill="#f2f2f2" textLength="163.60" lengthAdjust="spacingAndGlyphs"  stroke="#f2f2f2" stroke-width="0.5">cd/m²: 157.33</text>
<rect x="531.80" y="821.00" width="1388.20" height="30.90" fill="url(#g24)"/>
<rect x="541.00" y="851.90" width="1379.00" height="29.04" fill="#3c3c3c"/>
<rect x="531.80" y="851.90" width="9.20" height="29.04" fill="#141414"/>
<rect x="541.00" y="880.94" width="1379.00" height="29.04" fill="#7f7f7f"/>
<rect x="531.80" y="880.94" width="9.20" height="29.04" fill="#262626"/>
<rect x="541.00" y="909.98" width="1379.00" height="29.04" fill="#3c3c3c"/>
<rect x="531.80" y="909.98" width="9.20" height="29.04" fill="#141414"/>
<rect x="541.00" y="939.02" width="1379.00" height="29.04" fill="#7f7f7f"/>
<rect x="531.80" y="939.02" width="9.20" height="29.04" fill="#262626"/>
<rect x="541.00" y="968.06" width="1379.00" height="29.04" fill="#3c3c3c"/>
<rect x="531.80" y="968.06" width="9.20" height="29.04" fill="#141414"/>
<rect x="541.00" y="997.10" width="1379.00" height="29.04" fill="#7f7f7f"/>
<rect x="531.80" y="997.10" width="9.20" height="29.04" fill="#262626"/>
<rect x="541.00" y="1026.14" width="1379.00" height="29.04" fill="#3c3c3c"/>
<rect x="531.80" y="1026.14" width="9.20" height="29.04" fill="#141414"/>
<rect x="541.00" y="1055.18" width="1379.00" height="29.04" fill="#7f7f7f"/>
<rect x="531.80" y="1055.18" width="9.20" height="29.04" fill="#262626"/>
<rect x="531.80" y="821.00" width="9.20" height="30.90" fill="#000"/>
<rect x="1055.00" y="910.40" width="61.00" height="27.60" fill="#f4f4f4" stroke="#c8c8c8" stroke-width="1"/>
<clipPath id="tbc"><rect x="531" y="820" width="1385.5" height="265"/></clipPath><g clip-path="url(#tbc)">
<text x="624.10" y="843.20" font-size="15.8" fill="#f4f4f4" textLength="26.33" lengthAdjust="spacingAndGlyphs" >White</text>
<text x="664.50" y="843.20" font-size="15.8" fill="#f4f4f4" textLength="36.64" lengthAdjust="spacingAndGlyphs" >Gray 80</text>
<text x="707.50" y="843.20" font-size="15.8" fill="#f4f4f4" textLength="36.64" lengthAdjust="spacingAndGlyphs" >Gray 65</text>
<text x="749.80" y="843.20" font-size="15.8" fill="#f4f4f4" textLength="36.64" lengthAdjust="spacingAndGlyphs" >Gray 50</text>
<text x="792.50" y="843.20" font-size="15.8" fill="#f4f4f4" textLength="36.64" lengthAdjust="spacingAndGlyphs" >Gray 35</text>
<text x="835.10" y="843.20" font-size="15.8" fill="#f4f4f4" textLength="25.19" lengthAdjust="spacingAndGlyphs" >Black</text>
<text x="869.80" y="843.20" font-size="15.8" fill="#f4f4f4" textLength="44.65" lengthAdjust="spacingAndGlyphs" >Dark Skin</text>
<text x="920.40" y="843.20" font-size="15.8" fill="#f4f4f4" textLength="45.24" lengthAdjust="spacingAndGlyphs" >Light Skin</text>
<text x="971.80" y="843.20" font-size="15.8" fill="#f4f4f4" textLength="40.65" lengthAdjust="spacingAndGlyphs" >Blue Sky</text>
<text x="1017.80" y="843.20" font-size="15.8" fill="#f4f4f4" textLength="33.79" lengthAdjust="spacingAndGlyphs" >Foliage</text>
<text x="1057.20" y="843.20" font-size="15.8" fill="#f4f4f4" textLength="54.39" lengthAdjust="spacingAndGlyphs" >Blue Flower</text>
<text x="1119.90" y="843.20" font-size="15.8" fill="#f4f4f4" textLength="59.55" lengthAdjust="spacingAndGlyphs" >Bluish Green</text>
<text x="1186.20" y="843.20" font-size="15.8" fill="#f4f4f4" textLength="34.36" lengthAdjust="spacingAndGlyphs" >Orange</text>
<text x="1227.30" y="843.20" font-size="15.8" fill="#f4f4f4" textLength="60.70" lengthAdjust="spacingAndGlyphs" >Purplish Blue</text>
<text x="1295.80" y="843.20" font-size="15.8" fill="#f4f4f4" textLength="65.28" lengthAdjust="spacingAndGlyphs" >Moderate Red</text>
<text x="1370.20" y="843.20" font-size="15.8" fill="#f4f4f4" textLength="29.78" lengthAdjust="spacingAndGlyphs" >Purple</text>
<text x="1407.00" y="843.20" font-size="15.8" fill="#f4f4f4" textLength="60.90" lengthAdjust="spacingAndGlyphs" >Yellow Green</text>
<text x="1475.60" y="843.20" font-size="15.8" fill="#f4f4f4" textLength="66.44" lengthAdjust="spacingAndGlyphs" >Orange Yellow</text>
<text x="1549.90" y="843.20" font-size="15.8" fill="#f4f4f4" textLength="20.62" lengthAdjust="spacingAndGlyphs" >Blue</text>
<text x="1584.60" y="843.20" font-size="15.8" fill="#f4f4f4" textLength="28.63" lengthAdjust="spacingAndGlyphs" >Green</text>
<text x="1625.80" y="843.20" font-size="15.8" fill="#f4f4f4" textLength="18.90" lengthAdjust="spacingAndGlyphs" >Red</text>
<text x="1660.40" y="843.20" font-size="15.8" fill="#f4f4f4" textLength="29.40" lengthAdjust="spacingAndGlyphs" >Yellow</text>
<text x="1702.00" y="843.20" font-size="15.8" fill="#f4f4f4" textLength="40.09" lengthAdjust="spacingAndGlyphs" >Magenta</text>
<text x="1750.40" y="843.20" font-size="15.8" fill="#f4f4f4" textLength="24.05" lengthAdjust="spacingAndGlyphs" >Cyan</text>
<text x="1785.10" y="843.20" font-size="15.8" fill="#f4f4f4" textLength="48.11" lengthAdjust="spacingAndGlyphs" >100% Red</text>
<text x="1838.30" y="843.20" font-size="15.8" fill="#f4f4f4" textLength="57.84" lengthAdjust="spacingAndGlyphs" >100% Green</text>
<text x="1902.10" y="843.20" font-size="15.8" fill="#f4f4f4" textLength="49.83" lengthAdjust="spacingAndGlyphs" >100% Blue</text>
<text x="544.10" y="874.20" font-size="16.6" fill="#f0f0f0" textLength="40.74" lengthAdjust="spacingAndGlyphs" >x: CIE31</text>
<text x="624.10" y="874.20" font-size="16.6" fill="#f0f0f0" textLength="21.16" lengthAdjust="spacingAndGlyphs" >0.31</text>
<text x="664.50" y="874.20" font-size="16.6" fill="#f0f0f0" textLength="21.16" lengthAdjust="spacingAndGlyphs" >0.31</text>
<text x="707.50" y="874.20" font-size="16.6" fill="#f0f0f0" textLength="21.16" lengthAdjust="spacingAndGlyphs" >0.31</text>
<text x="749.80" y="874.20" font-size="16.6" fill="#f0f0f0" textLength="21.16" lengthAdjust="spacingAndGlyphs" >0.31</text>
<text x="792.50" y="874.20" font-size="16.6" fill="#f0f0f0" textLength="21.16" lengthAdjust="spacingAndGlyphs" >0.31</text>
<text x="835.10" y="874.20" font-size="16.6" fill="#f0f0f0" textLength="21.16" lengthAdjust="spacingAndGlyphs" >0.27</text>
<text x="869.80" y="874.20" font-size="16.6" fill="#f0f0f0" textLength="21.16" lengthAdjust="spacingAndGlyphs" >0.42</text>
<text x="920.40" y="874.20" font-size="16.6" fill="#f0f0f0" textLength="21.16" lengthAdjust="spacingAndGlyphs" >0.39</text>
<text x="971.80" y="874.20" font-size="16.6" fill="#f0f0f0" textLength="21.16" lengthAdjust="spacingAndGlyphs" >0.24</text>
<text x="1017.80" y="874.20" font-size="16.6" fill="#f0f0f0" textLength="21.16" lengthAdjust="spacingAndGlyphs" >0.34</text>
<text x="1057.20" y="874.20" font-size="16.6" fill="#f0f0f0" textLength="21.16" lengthAdjust="spacingAndGlyphs" >0.27</text>
<text x="1119.90" y="874.20" font-size="16.6" fill="#f0f0f0" textLength="21.16" lengthAdjust="spacingAndGlyphs" >0.25</text>
<text x="1186.20" y="874.20" font-size="16.6" fill="#f0f0f0" textLength="21.16" lengthAdjust="spacingAndGlyphs" >0.53</text>
<text x="1227.30" y="874.20" font-size="16.6" fill="#f0f0f0" textLength="21.16" lengthAdjust="spacingAndGlyphs" >0.21</text>
<text x="1295.80" y="874.20" font-size="16.6" fill="#f0f0f0" textLength="21.16" lengthAdjust="spacingAndGlyphs" >0.48</text>
<text x="1370.20" y="874.20" font-size="16.6" fill="#f0f0f0" textLength="21.16" lengthAdjust="spacingAndGlyphs" >0.27</text>
<text x="1407.00" y="874.20" font-size="16.6" fill="#f0f0f0" textLength="21.16" lengthAdjust="spacingAndGlyphs" >0.38</text>
<text x="1475.60" y="874.20" font-size="16.6" fill="#f0f0f0" textLength="21.16" lengthAdjust="spacingAndGlyphs" >0.49</text>
<text x="1549.90" y="874.20" font-size="16.6" fill="#f0f0f0" textLength="21.16" lengthAdjust="spacingAndGlyphs" >0.18</text>
<text x="1584.60" y="874.20" font-size="16.6" fill="#f0f0f0" textLength="21.16" lengthAdjust="spacingAndGlyphs" >0.29</text>
<text x="1625.80" y="874.20" font-size="16.6" fill="#f0f0f0" textLength="21.16" lengthAdjust="spacingAndGlyphs" >0.57</text>
<text x="1660.40" y="874.20" font-size="16.6" fill="#f0f0f0" textLength="21.16" lengthAdjust="spacingAndGlyphs" >0.46</text>
<text x="1702.00" y="874.20" font-size="16.6" fill="#f0f0f0" textLength="21.16" lengthAdjust="spacingAndGlyphs" >0.39</text>
<text x="1750.40" y="874.20" font-size="16.6" fill="#f0f0f0" textLength="21.16" lengthAdjust="spacingAndGlyphs" >0.20</text>
<text x="1785.10" y="874.20" font-size="16.6" fill="#f0f0f0" textLength="21.16" lengthAdjust="spacingAndGlyphs" >0.66</text>
<text x="1838.30" y="874.20" font-size="16.6" fill="#f0f0f0" textLength="21.16" lengthAdjust="spacingAndGlyphs" >0.28</text>
<text x="1902.10" y="874.20" font-size="16.6" fill="#f0f0f0" textLength="21.16" lengthAdjust="spacingAndGlyphs" >0.14</text>
<text x="544.10" y="903.22" font-size="16.6" fill="#f0f0f0" textLength="40.74" lengthAdjust="spacingAndGlyphs" >y: CIE31</text>
<text x="624.10" y="903.22" font-size="16.6" fill="#f0f0f0" textLength="21.16" lengthAdjust="spacingAndGlyphs" >0.33</text>
<text x="664.50" y="903.22" font-size="16.6" fill="#f0f0f0" textLength="21.16" lengthAdjust="spacingAndGlyphs" >0.33</text>
<text x="707.50" y="903.22" font-size="16.6" fill="#f0f0f0" textLength="21.16" lengthAdjust="spacingAndGlyphs" >0.33</text>
<text x="749.80" y="903.22" font-size="16.6" fill="#f0f0f0" textLength="21.16" lengthAdjust="spacingAndGlyphs" >0.33</text>
<text x="792.50" y="903.22" font-size="16.6" fill="#f0f0f0" textLength="21.16" lengthAdjust="spacingAndGlyphs" >0.33</text>
<text x="835.10" y="903.22" font-size="16.6" fill="#f0f0f0" textLength="21.16" lengthAdjust="spacingAndGlyphs" >0.29</text>
<text x="869.80" y="903.22" font-size="16.6" fill="#f0f0f0" textLength="21.16" lengthAdjust="spacingAndGlyphs" >0.37</text>
<text x="920.40" y="903.22" font-size="16.6" fill="#f0f0f0" textLength="21.16" lengthAdjust="spacingAndGlyphs" >0.36</text>
<text x="971.80" y="903.22" font-size="16.6" fill="#f0f0f0" textLength="21.16" lengthAdjust="spacingAndGlyphs" >0.26</text>
<text x="1017.80" y="903.22" font-size="16.6" fill="#f0f0f0" textLength="21.16" lengthAdjust="spacingAndGlyphs" >0.44</text>
<text x="1057.20" y="903.22" font-size="16.6" fill="#f0f0f0" textLength="21.16" lengthAdjust="spacingAndGlyphs" >0.25</text>
<text x="1119.90" y="903.22" font-size="16.6" fill="#f0f0f0" textLength="21.16" lengthAdjust="spacingAndGlyphs" >0.36</text>
<text x="1186.20" y="903.22" font-size="16.6" fill="#f0f0f0" textLength="21.16" lengthAdjust="spacingAndGlyphs" >0.41</text>
<text x="1227.30" y="903.22" font-size="16.6" fill="#f0f0f0" textLength="21.16" lengthAdjust="spacingAndGlyphs" >0.18</text>
<text x="1295.80" y="903.22" font-size="16.6" fill="#f0f0f0" textLength="21.16" lengthAdjust="spacingAndGlyphs" >0.31</text>
<text x="1370.20" y="903.22" font-size="16.6" fill="#f0f0f0" textLength="21.16" lengthAdjust="spacingAndGlyphs" >0.21</text>
<text x="1407.00" y="903.22" font-size="16.6" fill="#f0f0f0" textLength="21.16" lengthAdjust="spacingAndGlyphs" >0.51</text>
<text x="1475.60" y="903.22" font-size="16.6" fill="#f0f0f0" textLength="21.16" lengthAdjust="spacingAndGlyphs" >0.45</text>
<text x="1549.90" y="903.22" font-size="16.6" fill="#f0f0f0" textLength="21.16" lengthAdjust="spacingAndGlyphs" >0.12</text>
<text x="1584.60" y="903.22" font-size="16.6" fill="#f0f0f0" textLength="21.16" lengthAdjust="spacingAndGlyphs" >0.51</text>
<text x="1625.80" y="903.22" font-size="16.6" fill="#f0f0f0" textLength="21.16" lengthAdjust="spacingAndGlyphs" >0.32</text>
<text x="1660.40" y="903.22" font-size="16.6" fill="#f0f0f0" textLength="21.16" lengthAdjust="spacingAndGlyphs" >0.49</text>
<text x="1702.00" y="903.22" font-size="16.6" fill="#f0f0f0" textLength="21.16" lengthAdjust="spacingAndGlyphs" >0.24</text>
<text x="1750.40" y="903.22" font-size="16.6" fill="#f0f0f0" textLength="21.16" lengthAdjust="spacingAndGlyphs" >0.27</text>
<text x="1785.10" y="903.22" font-size="16.6" fill="#f0f0f0" textLength="21.16" lengthAdjust="spacingAndGlyphs" >0.33</text>
<text x="1838.30" y="903.22" font-size="16.6" fill="#f0f0f0" textLength="21.16" lengthAdjust="spacingAndGlyphs" >0.64</text>
<text x="1902.10" y="903.22" font-size="16.6" fill="#f0f0f0" textLength="21.16" lengthAdjust="spacingAndGlyphs" >0.05</text>
<text x="544.10" y="932.24" font-size="16.6" fill="#f0f0f0" textLength="7.09" lengthAdjust="spacingAndGlyphs" >Y</text>
<text x="624.10" y="932.24" font-size="16.6" fill="#f0f0f0" textLength="33.26" lengthAdjust="spacingAndGlyphs" >447.65</text>
<text x="664.50" y="932.24" font-size="16.6" fill="#f0f0f0" textLength="33.26" lengthAdjust="spacingAndGlyphs" >356.61</text>
<text x="707.50" y="932.24" font-size="16.6" fill="#f0f0f0" textLength="33.26" lengthAdjust="spacingAndGlyphs" >288.21</text>
<text x="749.80" y="932.24" font-size="16.6" fill="#f0f0f0" textLength="33.26" lengthAdjust="spacingAndGlyphs" >221.42</text>
<text x="792.50" y="932.24" font-size="16.6" fill="#f0f0f0" textLength="33.26" lengthAdjust="spacingAndGlyphs" >155.45</text>
<text x="835.10" y="932.24" font-size="16.6" fill="#f0f0f0" textLength="21.16" lengthAdjust="spacingAndGlyphs" >0.26</text>
<text x="869.80" y="932.24" font-size="16.6" fill="#f0f0f0" textLength="27.21" lengthAdjust="spacingAndGlyphs" >44.08</text>
<text x="920.40" y="932.24" font-size="16.6" fill="#f0f0f0" textLength="33.26" lengthAdjust="spacingAndGlyphs" >158.56</text>
<text x="971.80" y="932.24" font-size="16.6" fill="#f0f0f0" textLength="27.21" lengthAdjust="spacingAndGlyphs" >81.35</text>
<text x="1017.80" y="932.24" font-size="16.6" fill="#f0f0f0" textLength="27.21" lengthAdjust="spacingAndGlyphs" >56.88</text>
<text x="1058.70" y="932.24" font-size="16.6" fill="#111" textLength="33.26" lengthAdjust="spacingAndGlyphs" >102.32</text>
<text x="1119.90" y="932.24" font-size="16.6" fill="#f0f0f0" textLength="33.26" lengthAdjust="spacingAndGlyphs" >184.86</text>
<text x="1186.20" y="932.24" font-size="16.6" fill="#f0f0f0" textLength="33.26" lengthAdjust="spacingAndGlyphs" >131.18</text>
<text x="1227.30" y="932.24" font-size="16.6" fill="#f0f0f0" textLength="27.21" lengthAdjust="spacingAndGlyphs" >49.35</text>
<text x="1295.80" y="932.24" font-size="16.6" fill="#f0f0f0" textLength="27.21" lengthAdjust="spacingAndGlyphs" >85.56</text>
<text x="1370.20" y="932.24" font-size="16.6" fill="#f0f0f0" textLength="27.21" lengthAdjust="spacingAndGlyphs" >25.45</text>
<text x="1407.00" y="932.24" font-size="16.6" fill="#f0f0f0" textLength="33.26" lengthAdjust="spacingAndGlyphs" >192.56</text>
<text x="1475.60" y="932.24" font-size="16.6" fill="#f0f0f0" textLength="33.26" lengthAdjust="spacingAndGlyphs" >195.23</text>
<text x="1549.90" y="932.24" font-size="16.6" fill="#f0f0f0" textLength="27.21" lengthAdjust="spacingAndGlyphs" >24.22</text>
<text x="1584.60" y="932.24" font-size="16.6" fill="#f0f0f0" textLength="33.26" lengthAdjust="spacingAndGlyphs" >102.14</text>
<text x="1625.80" y="932.24" font-size="16.6" fill="#f0f0f0" textLength="27.21" lengthAdjust="spacingAndGlyphs" >54.18</text>
<text x="1660.40" y="932.24" font-size="16.6" fill="#f0f0f0" textLength="33.26" lengthAdjust="spacingAndGlyphs" >268.75</text>
<text x="1702.00" y="932.24" font-size="16.6" fill="#f0f0f0" textLength="27.21" lengthAdjust="spacingAndGlyphs" >84.88</text>
<text x="1750.40" y="932.24" font-size="16.6" fill="#f0f0f0" textLength="27.21" lengthAdjust="spacingAndGlyphs" >83.22</text>
<text x="1785.10" y="932.24" font-size="16.6" fill="#f0f0f0" textLength="33.26" lengthAdjust="spacingAndGlyphs" >102.72</text>
<text x="1838.30" y="932.24" font-size="16.6" fill="#f0f0f0" textLength="33.26" lengthAdjust="spacingAndGlyphs" >314.50</text>
<text x="1902.10" y="932.24" font-size="16.6" fill="#f0f0f0" textLength="27.21" lengthAdjust="spacingAndGlyphs" >26.41</text>
<text x="544.10" y="961.26" font-size="16.6" fill="#f0f0f0" textLength="70.27" lengthAdjust="spacingAndGlyphs" >Target x:CIE31</text>
<text x="624.10" y="961.26" font-size="16.6" fill="#f0f0f0" textLength="21.16" lengthAdjust="spacingAndGlyphs" >0.31</text>
<text x="664.50" y="961.26" font-size="16.6" fill="#f0f0f0" textLength="21.16" lengthAdjust="spacingAndGlyphs" >0.31</text>
<text x="707.50" y="961.26" font-size="16.6" fill="#f0f0f0" textLength="21.16" lengthAdjust="spacingAndGlyphs" >0.31</text>
<text x="749.80" y="961.26" font-size="16.6" fill="#f0f0f0" textLength="21.16" lengthAdjust="spacingAndGlyphs" >0.31</text>
<text x="792.50" y="961.26" font-size="16.6" fill="#f0f0f0" textLength="21.16" lengthAdjust="spacingAndGlyphs" >0.31</text>
<text x="835.10" y="961.26" font-size="16.6" fill="#f0f0f0" textLength="21.16" lengthAdjust="spacingAndGlyphs" >0.31</text>
<text x="869.80" y="961.26" font-size="16.6" fill="#f0f0f0" textLength="21.16" lengthAdjust="spacingAndGlyphs" >0.40</text>
<text x="920.40" y="961.26" font-size="16.6" fill="#f0f0f0" textLength="21.16" lengthAdjust="spacingAndGlyphs" >0.38</text>
<text x="971.80" y="961.26" font-size="16.6" fill="#f0f0f0" textLength="21.16" lengthAdjust="spacingAndGlyphs" >0.25</text>
<text x="1017.80" y="961.26" font-size="16.6" fill="#f0f0f0" textLength="21.16" lengthAdjust="spacingAndGlyphs" >0.34</text>
<text x="1057.20" y="961.26" font-size="16.6" fill="#f0f0f0" textLength="21.16" lengthAdjust="spacingAndGlyphs" >0.27</text>
<text x="1119.90" y="961.26" font-size="16.6" fill="#f0f0f0" textLength="21.16" lengthAdjust="spacingAndGlyphs" >0.26</text>
<text x="1186.20" y="961.26" font-size="16.6" fill="#f0f0f0" textLength="21.16" lengthAdjust="spacingAndGlyphs" >0.51</text>
<text x="1227.30" y="961.26" font-size="16.6" fill="#f0f0f0" textLength="21.16" lengthAdjust="spacingAndGlyphs" >0.22</text>
<text x="1295.80" y="961.26" font-size="16.6" fill="#f0f0f0" textLength="21.16" lengthAdjust="spacingAndGlyphs" >0.46</text>
<text x="1370.20" y="961.26" font-size="16.6" fill="#f0f0f0" textLength="21.16" lengthAdjust="spacingAndGlyphs" >0.29</text>
<text x="1407.00" y="961.26" font-size="16.6" fill="#f0f0f0" textLength="21.16" lengthAdjust="spacingAndGlyphs" >0.38</text>
<text x="1475.60" y="961.26" font-size="16.6" fill="#f0f0f0" textLength="21.16" lengthAdjust="spacingAndGlyphs" >0.47</text>
<text x="1549.90" y="961.26" font-size="16.6" fill="#f0f0f0" textLength="21.16" lengthAdjust="spacingAndGlyphs" >0.19</text>
<text x="1584.60" y="961.26" font-size="16.6" fill="#f0f0f0" textLength="21.16" lengthAdjust="spacingAndGlyphs" >0.31</text>
<text x="1625.80" y="961.26" font-size="16.6" fill="#f0f0f0" textLength="21.16" lengthAdjust="spacingAndGlyphs" >0.54</text>
<text x="1660.40" y="961.26" font-size="16.6" fill="#f0f0f0" textLength="21.16" lengthAdjust="spacingAndGlyphs" >0.45</text>
<text x="1702.00" y="961.26" font-size="16.6" fill="#f0f0f0" textLength="21.16" lengthAdjust="spacingAndGlyphs" >0.37</text>
<text x="1750.40" y="961.26" font-size="16.6" fill="#f0f0f0" textLength="21.16" lengthAdjust="spacingAndGlyphs" >0.21</text>
<text x="1785.10" y="961.26" font-size="16.6" fill="#f0f0f0" textLength="21.16" lengthAdjust="spacingAndGlyphs" >0.64</text>
<text x="1838.30" y="961.26" font-size="16.6" fill="#f0f0f0" textLength="21.16" lengthAdjust="spacingAndGlyphs" >0.30</text>
<text x="1902.10" y="961.26" font-size="16.6" fill="#f0f0f0" textLength="21.16" lengthAdjust="spacingAndGlyphs" >0.15</text>
<text x="544.10" y="990.28" font-size="16.6" fill="#f0f0f0" textLength="70.27" lengthAdjust="spacingAndGlyphs" >Target y:CIE31</text>
<text x="624.10" y="990.28" font-size="16.6" fill="#f0f0f0" textLength="21.16" lengthAdjust="spacingAndGlyphs" >0.33</text>
<text x="664.50" y="990.28" font-size="16.6" fill="#f0f0f0" textLength="21.16" lengthAdjust="spacingAndGlyphs" >0.33</text>
<text x="707.50" y="990.28" font-size="16.6" fill="#f0f0f0" textLength="21.16" lengthAdjust="spacingAndGlyphs" >0.33</text>
<text x="749.80" y="990.28" font-size="16.6" fill="#f0f0f0" textLength="21.16" lengthAdjust="spacingAndGlyphs" >0.33</text>
<text x="792.50" y="990.28" font-size="16.6" fill="#f0f0f0" textLength="21.16" lengthAdjust="spacingAndGlyphs" >0.33</text>
<text x="835.10" y="990.28" font-size="16.6" fill="#f0f0f0" textLength="21.16" lengthAdjust="spacingAndGlyphs" >0.33</text>
<text x="869.80" y="990.28" font-size="16.6" fill="#f0f0f0" textLength="21.16" lengthAdjust="spacingAndGlyphs" >0.36</text>
<text x="920.40" y="990.28" font-size="16.6" fill="#f0f0f0" textLength="21.16" lengthAdjust="spacingAndGlyphs" >0.36</text>
<text x="971.80" y="990.28" font-size="16.6" fill="#f0f0f0" textLength="21.16" lengthAdjust="spacingAndGlyphs" >0.27</text>
<text x="1017.80" y="990.28" font-size="16.6" fill="#f0f0f0" textLength="21.16" lengthAdjust="spacingAndGlyphs" >0.43</text>
<text x="1057.20" y="990.28" font-size="16.6" fill="#f0f0f0" textLength="21.16" lengthAdjust="spacingAndGlyphs" >0.25</text>
<text x="1119.90" y="990.28" font-size="16.6" fill="#f0f0f0" textLength="21.16" lengthAdjust="spacingAndGlyphs" >0.36</text>
<text x="1186.20" y="990.28" font-size="16.6" fill="#f0f0f0" textLength="21.16" lengthAdjust="spacingAndGlyphs" >0.41</text>
<text x="1227.30" y="990.28" font-size="16.6" fill="#f0f0f0" textLength="21.16" lengthAdjust="spacingAndGlyphs" >0.19</text>
<text x="1295.80" y="990.28" font-size="16.6" fill="#f0f0f0" textLength="21.16" lengthAdjust="spacingAndGlyphs" >0.31</text>
<text x="1370.20" y="990.28" font-size="16.6" fill="#f0f0f0" textLength="21.16" lengthAdjust="spacingAndGlyphs" >0.22</text>
<text x="1407.00" y="990.28" font-size="16.6" fill="#f0f0f0" textLength="21.16" lengthAdjust="spacingAndGlyphs" >0.49</text>
<text x="1475.60" y="990.28" font-size="16.6" fill="#f0f0f0" textLength="21.16" lengthAdjust="spacingAndGlyphs" >0.44</text>
<text x="1549.90" y="990.28" font-size="16.6" fill="#f0f0f0" textLength="21.16" lengthAdjust="spacingAndGlyphs" >0.14</text>
<text x="1584.60" y="990.28" font-size="16.6" fill="#f0f0f0" textLength="21.16" lengthAdjust="spacingAndGlyphs" >0.49</text>
<text x="1625.80" y="990.28" font-size="16.6" fill="#f0f0f0" textLength="21.16" lengthAdjust="spacingAndGlyphs" >0.32</text>
<text x="1660.40" y="990.28" font-size="16.6" fill="#f0f0f0" textLength="21.16" lengthAdjust="spacingAndGlyphs" >0.47</text>
<text x="1702.00" y="990.28" font-size="16.6" fill="#f0f0f0" textLength="21.16" lengthAdjust="spacingAndGlyphs" >0.25</text>
<text x="1750.40" y="990.28" font-size="16.6" fill="#f0f0f0" textLength="21.16" lengthAdjust="spacingAndGlyphs" >0.27</text>
<text x="1785.10" y="990.28" font-size="16.6" fill="#f0f0f0" textLength="21.16" lengthAdjust="spacingAndGlyphs" >0.33</text>
<text x="1838.30" y="990.28" font-size="16.6" fill="#f0f0f0" textLength="21.16" lengthAdjust="spacingAndGlyphs" >0.60</text>
<text x="1902.10" y="990.28" font-size="16.6" fill="#f0f0f0" textLength="21.16" lengthAdjust="spacingAndGlyphs" >0.06</text>
<text x="544.10" y="1019.30" font-size="16.6" fill="#f0f0f0" textLength="39.37" lengthAdjust="spacingAndGlyphs" >Target Y</text>
<text x="624.10" y="1019.30" font-size="16.6" fill="#f0f0f0" textLength="33.26" lengthAdjust="spacingAndGlyphs" >447.65</text>
<text x="664.50" y="1019.30" font-size="16.6" fill="#f0f0f0" textLength="33.26" lengthAdjust="spacingAndGlyphs" >354.22</text>
<text x="707.50" y="1019.30" font-size="16.6" fill="#f0f0f0" textLength="33.26" lengthAdjust="spacingAndGlyphs" >285.42</text>
<text x="749.80" y="1019.30" font-size="16.6" fill="#f0f0f0" textLength="33.26" lengthAdjust="spacingAndGlyphs" >219.81</text>
<text x="792.50" y="1019.30" font-size="16.6" fill="#f0f0f0" textLength="33.26" lengthAdjust="spacingAndGlyphs" >153.06</text>
<text x="835.10" y="1019.30" font-size="16.6" fill="#f0f0f0" textLength="21.16" lengthAdjust="spacingAndGlyphs" >0.00</text>
<text x="869.80" y="1019.30" font-size="16.6" fill="#f0f0f0" textLength="27.21" lengthAdjust="spacingAndGlyphs" >45.09</text>
<text x="920.40" y="1019.30" font-size="16.6" fill="#f0f0f0" textLength="33.26" lengthAdjust="spacingAndGlyphs" >156.21</text>
<text x="971.80" y="1019.30" font-size="16.6" fill="#f0f0f0" textLength="27.21" lengthAdjust="spacingAndGlyphs" >83.70</text>
<text x="1017.80" y="1019.30" font-size="16.6" fill="#f0f0f0" textLength="27.21" lengthAdjust="spacingAndGlyphs" >58.34</text>
<text x="1057.20" y="1019.30" font-size="16.6" fill="#f0f0f0" textLength="33.26" lengthAdjust="spacingAndGlyphs" >104.39</text>
<text x="1119.90" y="1019.30" font-size="16.6" fill="#f0f0f0" textLength="33.26" lengthAdjust="spacingAndGlyphs" >187.44</text>
<text x="1186.20" y="1019.30" font-size="16.6" fill="#f0f0f0" textLength="33.26" lengthAdjust="spacingAndGlyphs" >126.90</text>
<text x="1227.30" y="1019.30" font-size="16.6" fill="#f0f0f0" textLength="27.21" lengthAdjust="spacingAndGlyphs" >52.62</text>
<text x="1295.80" y="1019.30" font-size="16.6" fill="#f0f0f0" textLength="27.21" lengthAdjust="spacingAndGlyphs" >83.60</text>
<text x="1370.20" y="1019.30" font-size="16.6" fill="#f0f0f0" textLength="27.21" lengthAdjust="spacingAndGlyphs" >29.88</text>
<text x="1407.00" y="1019.30" font-size="16.6" fill="#f0f0f0" textLength="33.26" lengthAdjust="spacingAndGlyphs" >191.40</text>
<text x="1475.60" y="1019.30" font-size="16.6" fill="#f0f0f0" textLength="33.26" lengthAdjust="spacingAndGlyphs" >190.31</text>
<text x="1549.90" y="1019.30" font-size="16.6" fill="#f0f0f0" textLength="27.21" lengthAdjust="spacingAndGlyphs" >27.95</text>
<text x="1584.60" y="1019.30" font-size="16.6" fill="#f0f0f0" textLength="33.26" lengthAdjust="spacingAndGlyphs" >102.84</text>
<text x="1625.80" y="1019.30" font-size="16.6" fill="#f0f0f0" textLength="27.21" lengthAdjust="spacingAndGlyphs" >52.21</text>
<text x="1660.40" y="1019.30" font-size="16.6" fill="#f0f0f0" textLength="33.26" lengthAdjust="spacingAndGlyphs" >263.95</text>
<text x="1702.00" y="1019.30" font-size="16.6" fill="#f0f0f0" textLength="27.21" lengthAdjust="spacingAndGlyphs" >84.27</text>
<text x="1750.40" y="1019.30" font-size="16.6" fill="#f0f0f0" textLength="27.21" lengthAdjust="spacingAndGlyphs" >86.92</text>
<text x="1785.10" y="1019.30" font-size="16.6" fill="#f0f0f0" textLength="27.21" lengthAdjust="spacingAndGlyphs" >95.20</text>
<text x="1838.30" y="1019.30" font-size="16.6" fill="#f0f0f0" textLength="33.26" lengthAdjust="spacingAndGlyphs" >320.14</text>
<text x="1902.10" y="1019.30" font-size="16.6" fill="#f0f0f0" textLength="27.21" lengthAdjust="spacingAndGlyphs" >32.32</text>
<text x="544.10" y="1048.32" font-size="16.6" fill="#f0f0f0" textLength="40.77" lengthAdjust="spacingAndGlyphs" >ΔE 2000</text>
<text x="624.10" y="1048.32" font-size="16.6" fill="#f0f0f0" textLength="21.16" lengthAdjust="spacingAndGlyphs" >0.93</text>
<text x="664.50" y="1048.32" font-size="16.6" fill="#f0f0f0" textLength="21.16" lengthAdjust="spacingAndGlyphs" >0.77</text>
<text x="707.50" y="1048.32" font-size="16.6" fill="#f0f0f0" textLength="21.16" lengthAdjust="spacingAndGlyphs" >1.25</text>
<text x="749.80" y="1048.32" font-size="16.6" fill="#f0f0f0" textLength="21.16" lengthAdjust="spacingAndGlyphs" >0.79</text>
<text x="792.50" y="1048.32" font-size="16.6" fill="#f0f0f0" textLength="21.16" lengthAdjust="spacingAndGlyphs" >0.61</text>
<text x="835.10" y="1048.32" font-size="16.6" fill="#f0f0f0" textLength="21.16" lengthAdjust="spacingAndGlyphs" >0.47</text>
<text x="869.80" y="1048.32" font-size="16.6" fill="#f0f0f0" textLength="21.16" lengthAdjust="spacingAndGlyphs" >1.93</text>
<text x="920.40" y="1048.32" font-size="16.6" fill="#f0f0f0" textLength="21.16" lengthAdjust="spacingAndGlyphs" >1.64</text>
<text x="971.80" y="1048.32" font-size="16.6" fill="#f0f0f0" textLength="21.16" lengthAdjust="spacingAndGlyphs" >1.49</text>
<text x="1017.80" y="1048.32" font-size="16.6" fill="#f0f0f0" textLength="21.16" lengthAdjust="spacingAndGlyphs" >1.72</text>
<text x="1057.20" y="1048.32" font-size="16.6" fill="#f0f0f0" textLength="21.16" lengthAdjust="spacingAndGlyphs" >0.98</text>
<text x="1119.90" y="1048.32" font-size="16.6" fill="#f0f0f0" textLength="21.16" lengthAdjust="spacingAndGlyphs" >2.15</text>
<text x="1186.20" y="1048.32" font-size="16.6" fill="#f0f0f0" textLength="21.16" lengthAdjust="spacingAndGlyphs" >2.99</text>
<text x="1227.30" y="1048.32" font-size="16.6" fill="#f0f0f0" textLength="21.16" lengthAdjust="spacingAndGlyphs" >1.32</text>
<text x="1295.80" y="1048.32" font-size="16.6" fill="#f0f0f0" textLength="21.16" lengthAdjust="spacingAndGlyphs" >2.20</text>
<text x="1370.20" y="1048.32" font-size="16.6" fill="#f0f0f0" textLength="21.16" lengthAdjust="spacingAndGlyphs" >2.79</text>
<text x="1407.00" y="1048.32" font-size="16.6" fill="#f0f0f0" textLength="21.16" lengthAdjust="spacingAndGlyphs" >1.79</text>
<text x="1475.60" y="1048.32" font-size="16.6" fill="#f0f0f0" textLength="21.16" lengthAdjust="spacingAndGlyphs" >2.56</text>
<text x="1549.90" y="1048.32" font-size="16.6" fill="#f0f0f0" textLength="21.16" lengthAdjust="spacingAndGlyphs" >2.31</text>
<text x="1584.60" y="1048.32" font-size="16.6" fill="#f0f0f0" textLength="21.16" lengthAdjust="spacingAndGlyphs" >2.44</text>
<text x="1625.80" y="1048.32" font-size="16.6" fill="#f0f0f0" textLength="21.16" lengthAdjust="spacingAndGlyphs" >2.81</text>
<text x="1660.40" y="1048.32" font-size="16.6" fill="#f0f0f0" textLength="21.16" lengthAdjust="spacingAndGlyphs" >2.52</text>
<text x="1702.00" y="1048.32" font-size="16.6" fill="#f0f0f0" textLength="21.16" lengthAdjust="spacingAndGlyphs" >1.89</text>
<text x="1750.40" y="1048.32" font-size="16.6" fill="#f0f0f0" textLength="21.16" lengthAdjust="spacingAndGlyphs" >2.07</text>
<text x="1785.10" y="1048.32" font-size="16.6" fill="#f0f0f0" textLength="21.16" lengthAdjust="spacingAndGlyphs" >5.83</text>
<text x="1838.30" y="1048.32" font-size="16.6" fill="#f0f0f0" textLength="21.16" lengthAdjust="spacingAndGlyphs" >2.51</text>
<text x="1902.10" y="1048.32" font-size="16.6" fill="#f0f0f0" textLength="21.16" lengthAdjust="spacingAndGlyphs" >3.40</text>
<text x="544.10" y="1077.34" font-size="16.6" fill="#f0f0f0" textLength="29.52" lengthAdjust="spacingAndGlyphs" >dEITP</text>
<text x="624.10" y="1077.34" font-size="16.6" fill="#f0f0f0" textLength="21.16" lengthAdjust="spacingAndGlyphs" >0.88</text>
<text x="664.50" y="1077.34" font-size="16.6" fill="#f0f0f0" textLength="21.16" lengthAdjust="spacingAndGlyphs" >1.04</text>
<text x="707.50" y="1077.34" font-size="16.6" fill="#f0f0f0" textLength="21.16" lengthAdjust="spacingAndGlyphs" >1.29</text>
<text x="749.80" y="1077.34" font-size="16.6" fill="#f0f0f0" textLength="21.16" lengthAdjust="spacingAndGlyphs" >1.15</text>
<text x="792.50" y="1077.34" font-size="16.6" fill="#f0f0f0" textLength="21.16" lengthAdjust="spacingAndGlyphs" >1.39</text>
<text x="835.10" y="1077.34" font-size="16.6" fill="#f0f0f0" textLength="27.21" lengthAdjust="spacingAndGlyphs" >67.23</text>
<text x="869.80" y="1077.34" font-size="16.6" fill="#f0f0f0" textLength="21.16" lengthAdjust="spacingAndGlyphs" >8.35</text>
<text x="920.40" y="1077.34" font-size="16.6" fill="#f0f0f0" textLength="21.16" lengthAdjust="spacingAndGlyphs" >5.43</text>
<text x="971.80" y="1077.34" font-size="16.6" fill="#f0f0f0" textLength="21.16" lengthAdjust="spacingAndGlyphs" >4.76</text>
<text x="1017.80" y="1077.34" font-size="16.6" fill="#f0f0f0" textLength="21.16" lengthAdjust="spacingAndGlyphs" >6.14</text>
<text x="1057.20" y="1077.34" font-size="16.6" fill="#f0f0f0" textLength="21.16" lengthAdjust="spacingAndGlyphs" >2.35</text>
<text x="1119.90" y="1077.34" font-size="16.6" fill="#f0f0f0" textLength="21.16" lengthAdjust="spacingAndGlyphs" >7.08</text>
<text x="1186.20" y="1077.34" font-size="16.6" fill="#f0f0f0" textLength="27.21" lengthAdjust="spacingAndGlyphs" >16.44</text>
<text x="1227.30" y="1077.34" font-size="16.6" fill="#f0f0f0" textLength="21.16" lengthAdjust="spacingAndGlyphs" >6.56</text>
<text x="1295.80" y="1077.34" font-size="16.6" fill="#f0f0f0" textLength="27.21" lengthAdjust="spacingAndGlyphs" >14.58</text>
<text x="1370.20" y="1077.34" font-size="16.6" fill="#f0f0f0" textLength="27.21" lengthAdjust="spacingAndGlyphs" >13.59</text>
<text x="1407.00" y="1077.34" font-size="16.6" fill="#f0f0f0" textLength="21.16" lengthAdjust="spacingAndGlyphs" >9.02</text>
<text x="1475.60" y="1077.34" font-size="16.6" fill="#f0f0f0" textLength="27.21" lengthAdjust="spacingAndGlyphs" >14.16</text>
<text x="1549.90" y="1077.34" font-size="16.6" fill="#f0f0f0" textLength="27.21" lengthAdjust="spacingAndGlyphs" >12.26</text>
<text x="1584.60" y="1077.34" font-size="16.6" fill="#f0f0f0" textLength="27.21" lengthAdjust="spacingAndGlyphs" >10.23</text>
<text x="1625.80" y="1077.34" font-size="16.6" fill="#f0f0f0" textLength="27.21" lengthAdjust="spacingAndGlyphs" >20.08</text>
<text x="1660.40" y="1077.34" font-size="16.6" fill="#f0f0f0" textLength="27.21" lengthAdjust="spacingAndGlyphs" >13.92</text>
<text x="1702.00" y="1077.34" font-size="16.6" fill="#f0f0f0" textLength="27.21" lengthAdjust="spacingAndGlyphs" >13.65</text>
<text x="1750.40" y="1077.34" font-size="16.6" fill="#f0f0f0" textLength="21.16" lengthAdjust="spacingAndGlyphs" >9.88</text>
<text x="1785.10" y="1077.34" font-size="16.6" fill="#f0f0f0" textLength="27.21" lengthAdjust="spacingAndGlyphs" >22.87</text>
<text x="1838.30" y="1077.34" font-size="16.6" fill="#f0f0f0" textLength="27.21" lengthAdjust="spacingAndGlyphs" >14.43</text>
<text x="1902.10" y="1077.34" font-size="16.6" fill="#f0f0f0" textLength="27.21" lengthAdjust="spacingAndGlyphs" >16.52</text>
</g>
<rect x="541.00" y="1084.30" width="1377.80" height="17.70" fill="#646464"/>
<rect x="554.80" y="1085.80" width="812.20" height="14.70" fill="#454545" rx="7.350000000000023"/>
<rect x="541.50" y="1085.80" width="11.50" height="14.70" fill="url(#g25)" rx="2.5" stroke="#949494" stroke-width="0.8"/>
<path d="M544.25 1093.15 L549.75 1088.15 V1098.15 Z" fill="#4c4c4c" />
<rect x="1906.80" y="1085.80" width="11.50" height="14.70" fill="url(#g26)" rx="2.5" stroke="#949494" stroke-width="0.8"/>
<path d="M1915.55 1093.15 L1910.05 1088.15 V1098.15 Z" fill="#4c4c4c" />
<clipPath id="btc"><rect x="200" y="1106" width="1396.3" height="64"/></clipPath><g clip-path="url(#btc)">
<path d="M201.00 1156.5 V1112 Q201.00 1108 205.00 1108 H247.00 Q251.00 1108 251.00 1112 V1156.5 Z" fill="url(#g27)" stroke="#3a3a3a" stroke-width="0.8" />
<rect x="206.30" y="1113.20" width="39.80" height="23.40" fill="#ffffff" rx="3" stroke="#909090" stroke-width="0.6"/>
<text x="226.00" y="1151.80" font-size="11.6" fill="#1e1e1e" textLength="28.76" lengthAdjust="spacingAndGlyphs" text-anchor="middle"  stroke="#1e1e1e" stroke-width="0.25">White</text>
<path d="M253.02 1156.5 V1112 Q253.02 1108 257.02 1108 H299.02 Q303.02 1108 303.02 1112 V1156.5 Z" fill="url(#g27)" stroke="#3a3a3a" stroke-width="0.8" />
<rect x="258.32" y="1113.20" width="39.80" height="23.40" fill="#e6e6e6" rx="3" stroke="#909090" stroke-width="0.6"/>
<text x="278.02" y="1151.80" font-size="11.6" fill="#1e1e1e" textLength="40.03" lengthAdjust="spacingAndGlyphs" text-anchor="middle"  stroke="#1e1e1e" stroke-width="0.25">Gray 80</text>
<path d="M305.04 1156.5 V1112 Q305.04 1108 309.04 1108 H351.04 Q355.04 1108 355.04 1112 V1156.5 Z" fill="url(#g27)" stroke="#3a3a3a" stroke-width="0.8" />
<rect x="310.34" y="1113.20" width="39.80" height="23.40" fill="#d1d1d1" rx="3" stroke="#909090" stroke-width="0.6"/>
<text x="330.04" y="1151.80" font-size="11.6" fill="#1e1e1e" textLength="40.03" lengthAdjust="spacingAndGlyphs" text-anchor="middle"  stroke="#1e1e1e" stroke-width="0.25">Gray 65</text>
<path d="M357.06 1156.5 V1112 Q357.06 1108 361.06 1108 H403.06 Q407.06 1108 407.06 1112 V1156.5 Z" fill="url(#g27)" stroke="#3a3a3a" stroke-width="0.8" />
<rect x="362.36" y="1113.20" width="39.80" height="23.40" fill="#bababa" rx="3" stroke="#909090" stroke-width="0.6"/>
<text x="382.06" y="1151.80" font-size="11.6" fill="#1e1e1e" textLength="40.03" lengthAdjust="spacingAndGlyphs" text-anchor="middle"  stroke="#1e1e1e" stroke-width="0.25">Gray 50</text>
<path d="M409.08 1156.5 V1112 Q409.08 1108 413.08 1108 H455.08 Q459.08 1108 459.08 1112 V1156.5 Z" fill="url(#g27)" stroke="#3a3a3a" stroke-width="0.8" />
<rect x="414.38" y="1113.20" width="39.80" height="23.40" fill="#9e9e9e" rx="3" stroke="#909090" stroke-width="0.6"/>
<text x="434.08" y="1151.80" font-size="11.6" fill="#1e1e1e" textLength="40.03" lengthAdjust="spacingAndGlyphs" text-anchor="middle"  stroke="#1e1e1e" stroke-width="0.25">Gray 35</text>
<path d="M461.10 1156.5 V1112 Q461.10 1108 465.10 1108 H507.10 Q511.10 1108 511.10 1112 V1156.5 Z" fill="url(#g27)" stroke="#3a3a3a" stroke-width="0.8" />
<rect x="466.40" y="1113.20" width="39.80" height="23.40" fill="#000000" rx="3" stroke="#909090" stroke-width="0.6"/>
<text x="486.10" y="1151.80" font-size="11.6" fill="#1e1e1e" textLength="27.52" lengthAdjust="spacingAndGlyphs" text-anchor="middle"  stroke="#1e1e1e" stroke-width="0.25">Black</text>
<path d="M513.12 1156.5 V1112 Q513.12 1108 517.12 1108 H559.12 Q563.12 1108 563.12 1112 V1156.5 Z" fill="url(#g27)" stroke="#3a3a3a" stroke-width="0.8" />
<rect x="518.42" y="1113.20" width="39.80" height="23.40" fill="#735244" rx="3" stroke="#909090" stroke-width="0.6"/>
<text x="538.12" y="1151.80" font-size="11.6" fill="#1e1e1e" textLength="48.50" lengthAdjust="spacingAndGlyphs" text-anchor="middle"  stroke="#1e1e1e" stroke-width="0.25">Dark Skin</text>
<path d="M565.14 1156.5 V1112 Q565.14 1108 569.14 1108 H611.14 Q615.14 1108 615.14 1112 V1156.5 Z" fill="url(#g27)" stroke="#3a3a3a" stroke-width="0.8" />
<rect x="570.44" y="1113.20" width="39.80" height="23.40" fill="#c29682" rx="3" stroke="#909090" stroke-width="0.6"/>
<text x="590.14" y="1151.80" font-size="11.6" fill="#1e1e1e" textLength="48.50" lengthAdjust="spacingAndGlyphs" text-anchor="middle"  stroke="#1e1e1e" stroke-width="0.25">Light Skin</text>
<path d="M617.16 1156.5 V1112 Q617.16 1108 621.16 1108 H663.16 Q667.16 1108 667.16 1112 V1156.5 Z" fill="url(#g27)" stroke="#3a3a3a" stroke-width="0.8" />
<rect x="622.46" y="1113.20" width="39.80" height="23.40" fill="#627a9d" rx="3" stroke="#909090" stroke-width="0.6"/>
<text x="642.16" y="1151.80" font-size="11.6" fill="#1e1e1e" textLength="44.40" lengthAdjust="spacingAndGlyphs" text-anchor="middle"  stroke="#1e1e1e" stroke-width="0.25">Blue Sky</text>
<path d="M669.18 1156.5 V1112 Q669.18 1108 673.18 1108 H715.18 Q719.18 1108 719.18 1112 V1156.5 Z" fill="url(#g27)" stroke="#3a3a3a" stroke-width="0.8" />
<rect x="674.48" y="1113.20" width="39.80" height="23.40" fill="#576c43" rx="3" stroke="#909090" stroke-width="0.6"/>
<text x="694.18" y="1151.80" font-size="11.6" fill="#1e1e1e" textLength="36.91" lengthAdjust="spacingAndGlyphs" text-anchor="middle"  stroke="#1e1e1e" stroke-width="0.25">Foliage</text>
<path d="M721.20 1156.5 V1112 Q721.20 1108 725.20 1108 H767.20 Q771.20 1108 771.20 1112 V1156.5 Z" fill="url(#g27)" stroke="#3a3a3a" stroke-width="0.8" />
<rect x="726.50" y="1113.20" width="39.80" height="11.40" fill="#8580b1" rx="3" stroke="#909090" stroke-width="0.6"/>
<text x="729.32" y="1139.60" font-size="11.6" fill="#1e1e1e" textLength="22.52" lengthAdjust="spacingAndGlyphs"  stroke="#1e1e1e" stroke-width="0.25">Blue</text>
<text x="729.32" y="1151.80" font-size="11.6" fill="#1e1e1e" textLength="33.76" lengthAdjust="spacingAndGlyphs"  stroke="#1e1e1e" stroke-width="0.25">Flower</text>
<path d="M773.22 1156.5 V1112 Q773.22 1108 777.22 1108 H819.22 Q823.22 1108 823.22 1112 V1156.5 Z" fill="url(#g27)" stroke="#3a3a3a" stroke-width="0.8" />
<rect x="778.52" y="1113.20" width="39.80" height="11.40" fill="#67bdaa" rx="3" stroke="#909090" stroke-width="0.6"/>
<text x="782.58" y="1139.60" font-size="11.6" fill="#1e1e1e" textLength="30.65" lengthAdjust="spacingAndGlyphs"  stroke="#1e1e1e" stroke-width="0.25">Bluish</text>
<text x="782.58" y="1151.80" font-size="11.6" fill="#1e1e1e" textLength="31.27" lengthAdjust="spacingAndGlyphs"  stroke="#1e1e1e" stroke-width="0.25">Green</text>
<path d="M825.24 1156.5 V1112 Q825.24 1108 829.24 1108 H871.24 Q875.24 1108 875.24 1112 V1156.5 Z" fill="url(#g27)" stroke="#3a3a3a" stroke-width="0.8" />
<rect x="830.54" y="1113.20" width="39.80" height="23.40" fill="#d67e2c" rx="3" stroke="#909090" stroke-width="0.6"/>
<text x="850.24" y="1151.80" font-size="11.6" fill="#1e1e1e" textLength="37.53" lengthAdjust="spacingAndGlyphs" text-anchor="middle"  stroke="#1e1e1e" stroke-width="0.25">Orange</text>
<path d="M877.26 1156.5 V1112 Q877.26 1108 881.26 1108 H923.26 Q927.26 1108 927.26 1112 V1156.5 Z" fill="url(#g27)" stroke="#3a3a3a" stroke-width="0.8" />
<rect x="882.56" y="1113.20" width="39.80" height="11.40" fill="#505ba6" rx="3" stroke="#909090" stroke-width="0.6"/>
<text x="881.93" y="1139.60" font-size="11.6" fill="#1e1e1e" textLength="40.65" lengthAdjust="spacingAndGlyphs"  stroke="#1e1e1e" stroke-width="0.25">Purplish</text>
<text x="881.93" y="1151.80" font-size="11.6" fill="#1e1e1e" textLength="22.52" lengthAdjust="spacingAndGlyphs"  stroke="#1e1e1e" stroke-width="0.25">Blue</text>
<path d="M929.28 1156.5 V1112 Q929.28 1108 933.28 1108 H975.28 Q979.28 1108 979.28 1112 V1156.5 Z" fill="url(#g27)" stroke="#3a3a3a" stroke-width="0.8" />
<rect x="934.58" y="1113.20" width="39.80" height="11.40" fill="#c15a63" rx="3" stroke="#909090" stroke-width="0.6"/>
<text x="930.51" y="1139.60" font-size="11.6" fill="#1e1e1e" textLength="47.54" lengthAdjust="spacingAndGlyphs"  stroke="#1e1e1e" stroke-width="0.25">Moderate</text>
<text x="930.51" y="1151.80" font-size="11.6" fill="#1e1e1e" textLength="20.64" lengthAdjust="spacingAndGlyphs"  stroke="#1e1e1e" stroke-width="0.25">Red</text>
<path d="M981.30 1156.5 V1112 Q981.30 1108 985.30 1108 H1027.30 Q1031.30 1108 1031.30 1112 V1156.5 Z" fill="url(#g27)" stroke="#3a3a3a" stroke-width="0.8" />
<rect x="986.60" y="1113.20" width="39.80" height="23.40" fill="#5e3c6c" rx="3" stroke="#909090" stroke-width="0.6"/>
<text x="1006.30" y="1151.80" font-size="11.6" fill="#1e1e1e" textLength="32.53" lengthAdjust="spacingAndGlyphs" text-anchor="middle"  stroke="#1e1e1e" stroke-width="0.25">Purple</text>
<path d="M1033.32 1156.5 V1112 Q1033.32 1108 1037.32 1108 H1079.32 Q1083.32 1108 1083.32 1112 V1156.5 Z" fill="url(#g27)" stroke="#3a3a3a" stroke-width="0.8" />
<rect x="1038.62" y="1113.20" width="39.80" height="11.40" fill="#9dbc40" rx="3" stroke="#909090" stroke-width="0.6"/>
<text x="1042.26" y="1139.60" font-size="11.6" fill="#1e1e1e" textLength="32.11" lengthAdjust="spacingAndGlyphs"  stroke="#1e1e1e" stroke-width="0.25">Yellow</text>
<text x="1042.26" y="1151.80" font-size="11.6" fill="#1e1e1e" textLength="31.27" lengthAdjust="spacingAndGlyphs"  stroke="#1e1e1e" stroke-width="0.25">Green</text>
<path d="M1085.34 1156.5 V1112 Q1085.34 1108 1089.34 1108 H1131.34 Q1135.34 1108 1135.34 1112 V1156.5 Z" fill="url(#g27)" stroke="#3a3a3a" stroke-width="0.8" />
<rect x="1090.64" y="1113.20" width="39.80" height="11.40" fill="#e0a32e" rx="3" stroke="#909090" stroke-width="0.6"/>
<text x="1091.57" y="1139.60" font-size="11.6" fill="#1e1e1e" textLength="37.53" lengthAdjust="spacingAndGlyphs"  stroke="#1e1e1e" stroke-width="0.25">Orange</text>
<text x="1091.57" y="1151.80" font-size="11.6" fill="#1e1e1e" textLength="32.11" lengthAdjust="spacingAndGlyphs"  stroke="#1e1e1e" stroke-width="0.25">Yellow</text>
<path d="M1137.36 1156.5 V1112 Q1137.36 1108 1141.36 1108 H1183.36 Q1187.36 1108 1187.36 1112 V1156.5 Z" fill="url(#g27)" stroke="#3a3a3a" stroke-width="0.8" />
<rect x="1142.66" y="1113.20" width="39.80" height="23.40" fill="#383d96" rx="3" stroke="#909090" stroke-width="0.6"/>
<text x="1162.36" y="1151.80" font-size="11.6" fill="#1e1e1e" textLength="22.52" lengthAdjust="spacingAndGlyphs" text-anchor="middle"  stroke="#1e1e1e" stroke-width="0.25">Blue</text>
<path d="M1189.38 1156.5 V1112 Q1189.38 1108 1193.38 1108 H1235.38 Q1239.38 1108 1239.38 1112 V1156.5 Z" fill="url(#g27)" stroke="#3a3a3a" stroke-width="0.8" />
<rect x="1194.68" y="1113.20" width="39.80" height="23.40" fill="#469449" rx="3" stroke="#909090" stroke-width="0.6"/>
<text x="1214.38" y="1151.80" font-size="11.6" fill="#1e1e1e" textLength="31.27" lengthAdjust="spacingAndGlyphs" text-anchor="middle"  stroke="#1e1e1e" stroke-width="0.25">Green</text>
<path d="M1241.40 1156.5 V1112 Q1241.40 1108 1245.40 1108 H1287.40 Q1291.40 1108 1291.40 1112 V1156.5 Z" fill="url(#g27)" stroke="#3a3a3a" stroke-width="0.8" />
<rect x="1246.70" y="1113.20" width="39.80" height="23.40" fill="#af363c" rx="3" stroke="#909090" stroke-width="0.6"/>
<text x="1266.40" y="1151.80" font-size="11.6" fill="#1e1e1e" textLength="20.64" lengthAdjust="spacingAndGlyphs" text-anchor="middle"  stroke="#1e1e1e" stroke-width="0.25">Red</text>
<path d="M1293.42 1156.5 V1112 Q1293.42 1108 1297.42 1108 H1339.42 Q1343.42 1108 1343.42 1112 V1156.5 Z" fill="url(#g27)" stroke="#3a3a3a" stroke-width="0.8" />
<rect x="1298.72" y="1113.20" width="39.80" height="23.40" fill="#e7c71f" rx="3" stroke="#909090" stroke-width="0.6"/>
<text x="1318.42" y="1151.80" font-size="11.6" fill="#1e1e1e" textLength="32.11" lengthAdjust="spacingAndGlyphs" text-anchor="middle"  stroke="#1e1e1e" stroke-width="0.25">Yellow</text>
<path d="M1345.44 1156.5 V1112 Q1345.44 1108 1349.44 1108 H1391.44 Q1395.44 1108 1395.44 1112 V1156.5 Z" fill="url(#g27)" stroke="#3a3a3a" stroke-width="0.8" />
<rect x="1350.74" y="1113.20" width="39.80" height="23.40" fill="#bb5695" rx="3" stroke="#909090" stroke-width="0.6"/>
<text x="1370.44" y="1151.80" font-size="11.6" fill="#1e1e1e" textLength="43.79" lengthAdjust="spacingAndGlyphs" text-anchor="middle"  stroke="#1e1e1e" stroke-width="0.25">Magenta</text>
<path d="M1397.46 1156.5 V1112 Q1397.46 1108 1401.46 1108 H1443.46 Q1447.46 1108 1447.46 1112 V1156.5 Z" fill="url(#g27)" stroke="#3a3a3a" stroke-width="0.8" />
<rect x="1402.76" y="1113.20" width="39.80" height="23.40" fill="#0885a1" rx="3" stroke="#909090" stroke-width="0.6"/>
<text x="1422.46" y="1151.80" font-size="11.6" fill="#1e1e1e" textLength="26.27" lengthAdjust="spacingAndGlyphs" text-anchor="middle"  stroke="#1e1e1e" stroke-width="0.25">Cyan</text>
<path d="M1449.48 1156.5 V1112 Q1449.48 1108 1453.48 1108 H1495.48 Q1499.48 1108 1499.48 1112 V1156.5 Z" fill="url(#g27)" stroke="#3a3a3a" stroke-width="0.8" />
<rect x="1454.78" y="1113.20" width="39.80" height="23.40" fill="#ff0000" rx="3" stroke="#909090" stroke-width="0.6"/>
<text x="1474.48" y="1151.80" font-size="11.6" fill="#1e1e1e" textLength="48.50" lengthAdjust="spacingAndGlyphs" text-anchor="middle"  stroke="#1e1e1e" stroke-width="0.25">100% Red</text>
<path d="M1501.50 1156.5 V1112 Q1501.50 1108 1505.50 1108 H1547.50 Q1551.50 1108 1551.50 1112 V1156.5 Z" fill="url(#g27)" stroke="#3a3a3a" stroke-width="0.8" />
<rect x="1506.80" y="1113.20" width="39.80" height="11.40" fill="#00ff00" rx="3" stroke="#909090" stroke-width="0.6"/>
<text x="1510.86" y="1139.60" font-size="11.6" fill="#1e1e1e" textLength="28.78" lengthAdjust="spacingAndGlyphs"  stroke="#1e1e1e" stroke-width="0.25">100%</text>
<text x="1510.86" y="1151.80" font-size="11.6" fill="#1e1e1e" textLength="31.27" lengthAdjust="spacingAndGlyphs"  stroke="#1e1e1e" stroke-width="0.25">Green</text>
<path d="M1553.52 1156.5 V1112 Q1553.52 1108 1557.52 1108 H1599.52 Q1603.52 1108 1603.52 1112 V1156.5 Z" fill="url(#g27)" stroke="#3a3a3a" stroke-width="0.8" />
<rect x="1558.82" y="1113.20" width="39.80" height="11.40" fill="#0000ff" rx="3" stroke="#909090" stroke-width="0.6"/>
<text x="1564.13" y="1139.60" font-size="11.6" fill="#1e1e1e" textLength="28.78" lengthAdjust="spacingAndGlyphs"  stroke="#1e1e1e" stroke-width="0.25">100%</text>
<text x="1564.13" y="1151.80" font-size="11.6" fill="#1e1e1e" textLength="22.52" lengthAdjust="spacingAndGlyphs"  stroke="#1e1e1e" stroke-width="0.25">Blue</text>
</g>
<rect x="200.00" y="1157.20" width="1396.50" height="12.80" fill="#434343"/>
<rect x="214.00" y="1158.20" width="791.00" height="10.00" fill="#4b4b4b" rx="5"/>
<rect x="201.50" y="1158.20" width="10.50" height="10.00" fill="url(#g28)" rx="2" stroke="#8a8a8a" stroke-width="0.6"/>
<path d="M204.5 1163.2 L209 1159.7 V1166.7 Z" fill="#3a3a3a" />
<rect x="1584.50" y="1158.20" width="10.50" height="10.00" fill="url(#g29)" rx="2" stroke="#8a8a8a" stroke-width="0.6"/>
<path d="M1592.3 1163.2 L1587.8 1159.7 V1166.7 Z" fill="#3a3a3a" />
<rect x="1596.80" y="1108.00" width="48.00" height="18.00" fill="url(#g30)" rx="3" stroke="#555" stroke-width="0.8"/>
<circle cx="1621.50" cy="1116.50" r="7.00" fill="url(#g32)" />
<path d="M1617 1118.6 L1621.5 1113.4 L1626 1118.6 Z" fill="#444" />
<rect x="1596.80" y="1127.00" width="48.00" height="41.50" fill="url(#g30)" rx="3" stroke="#555" stroke-width="0.8"/>
<rect x="1606.00" y="1133.50" width="29.50" height="29.00" fill="none" rx="4" stroke="#2a2a2a" stroke-width="2.4"/>
<rect x="1614.00" y="1141.50" width="13.50" height="13.00" fill="#050505"/>
<rect x="1646.10" y="1108.00" width="46.40" height="29.80" fill="url(#g30)" rx="2" stroke="#4a4a4a" stroke-width="0.8"/>
<circle cx="1669.30" cy="1123.00" r="10.00" fill="url(#g33)" />
<rect x="1665.30" y="1119.00" width="8.00" height="8.00" fill="#3a3a3a"/>
<rect x="1692.50" y="1108.00" width="44.90" height="29.80" fill="url(#g30)" rx="2" stroke="#4a4a4a" stroke-width="0.8"/>
<circle cx="1714.95" cy="1123.00" r="10.00" fill="url(#g34)" />
<path d="M1711.75 1118 L1719.95 1123 L1711.75 1128 Z" fill="#3a3a3a" />
<rect x="1737.40" y="1108.00" width="44.80" height="29.80" fill="url(#g30)" rx="2" stroke="#4a4a4a" stroke-width="0.8"/>
<circle cx="1759.80" cy="1123.00" r="10.00" fill="url(#g35)" />
<path d="M1756.3000000000002 1118 H1753.8000000000002 V1128 H1756.3000000000002 M1763.3000000000002 1118 H1765.8000000000002 V1128 H1763.3000000000002" fill="none" stroke="#3a3a3a" stroke-width="1.6" />
<path d="M1756.8000000000002 1123 H1762.8000000000002" fill="none" stroke="#3a3a3a" stroke-width="1.6" stroke-dasharray="1.5 1"/>
<rect x="1782.20" y="1108.00" width="45.30" height="29.80" fill="url(#g30)" rx="2" stroke="#4a4a4a" stroke-width="0.8"/>
<circle cx="1804.85" cy="1123.00" r="10.00" fill="url(#g36)" />
<text x="1804.85" y="1128.50" font-size="19" fill="#3a3a3a" font-weight="bold" text-anchor="middle" >∞</text>
<rect x="1827.50" y="1108.00" width="44.80" height="29.80" fill="url(#g31)" rx="2" stroke="#4a4a4a" stroke-width="0.8"/>
<circle cx="1849.90" cy="1123.00" r="10.00" fill="url(#g37)" />
<path d="M1844.9 1122 A5.2 5.2 0 0 1 1853.9 1120 M1854.9 1124 A5.2 5.2 0 0 1 1845.9 1126" fill="none" stroke="#1c1c1c" stroke-width="2.2" />
<path d="M1851.9 1116.5 L1856.4 1120.5 L1850.9 1121.5 Z M1847.9 1129.5 L1843.4 1125.5 L1848.9 1124.5 Z" fill="#1c1c1c" />
<rect x="1872.30" y="1108.00" width="47.20" height="29.80" fill="url(#g31)" rx="2" stroke="#4a4a4a" stroke-width="0.8"/>
<circle cx="1895.90" cy="1123.00" r="10.00" fill="url(#g38)" />
<rect x="1646.10" y="1139.30" width="136.20" height="29.30" fill="url(#g30)" rx="3" stroke="#4a4a4a" stroke-width="0.8"/>
<rect x="1783.00" y="1139.30" width="136.50" height="29.30" fill="url(#g30)" rx="3" stroke="#4a4a4a" stroke-width="0.8"/>
<circle cx="1677.00" cy="1154.00" r="10.20" fill="url(#g39)" />
<circle cx="1890.50" cy="1154.00" r="10.20" fill="url(#g40)" />
<path d="M1676 1149.5 L1672 1154 L1676 1158.5 M1681.5 1149.5 L1677.5 1154 L1681.5 1158.5" fill="none" stroke="#333" stroke-width="1.5" />
<path d="M1886 1149.5 L1890 1154 L1886 1158.5 M1891.5 1149.5 L1895.5 1154 L1891.5 1158.5" fill="none" stroke="#333" stroke-width="1.5" />
<text x="1703.50" y="1163.60" font-size="26" fill="#2e2e2e" textLength="50.50" lengthAdjust="spacingAndGlyphs"  stroke="#2e2e2e" stroke-width="0.7">Back</text>
<text x="1810.30" y="1163.60" font-size="26" fill="#2e2e2e" textLength="51.50" lengthAdjust="spacingAndGlyphs"  stroke="#2e2e2e" stroke-width="0.7">Next</text>
<rect x="1203.00" y="106.00" width="716.20" height="696.70" fill="#1b1b1b"/>
<rect x="1211.00" y="114.60" width="700.90" height="679.20" fill="#333333"/>
<rect x="1250.00" y="144.30" width="658.30" height="613.80" fill="#242424"/>
<text x="1560.50" y="137.20" font-size="17.2" fill="#d0d0d0" textLength="85.03" lengthAdjust="spacingAndGlyphs" text-anchor="middle" >CIE 1976 u'v'</text>
<line x1="1249.20" y1="758.10" x2="1249.20" y2="766.40" stroke="#c4c4c4" stroke-width="1.1" />
<text x="1249.20" y="784.80" font-size="17.6" fill="#d4d4d4" textLength="8.12" lengthAdjust="spacingAndGlyphs" text-anchor="middle" >0</text>
<line x1="1304.09" y1="758.10" x2="1304.09" y2="766.40" stroke="#c4c4c4" stroke-width="1.1" />
<text x="1304.09" y="784.80" font-size="17.6" fill="#d4d4d4" textLength="28.43" lengthAdjust="spacingAndGlyphs" text-anchor="middle" >0.05</text>
<line x1="1358.97" y1="758.10" x2="1358.97" y2="766.40" stroke="#c4c4c4" stroke-width="1.1" />
<text x="1358.97" y="784.80" font-size="17.6" fill="#d4d4d4" textLength="20.31" lengthAdjust="spacingAndGlyphs" text-anchor="middle" >0.1</text>
<line x1="1413.86" y1="758.10" x2="1413.86" y2="766.40" stroke="#c4c4c4" stroke-width="1.1" />
<text x="1413.86" y="784.80" font-size="17.6" fill="#d4d4d4" textLength="28.43" lengthAdjust="spacingAndGlyphs" text-anchor="middle" >0.15</text>
<line x1="1468.74" y1="758.10" x2="1468.74" y2="766.40" stroke="#c4c4c4" stroke-width="1.1" />
<text x="1468.74" y="784.80" font-size="17.6" fill="#d4d4d4" textLength="20.31" lengthAdjust="spacingAndGlyphs" text-anchor="middle" >0.2</text>
<line x1="1523.62" y1="758.10" x2="1523.62" y2="766.40" stroke="#c4c4c4" stroke-width="1.1" />
<text x="1523.62" y="784.80" font-size="17.6" fill="#d4d4d4" textLength="28.43" lengthAdjust="spacingAndGlyphs" text-anchor="middle" >0.25</text>
<line x1="1578.51" y1="758.10" x2="1578.51" y2="766.40" stroke="#c4c4c4" stroke-width="1.1" />
<text x="1578.51" y="784.80" font-size="17.6" fill="#d4d4d4" textLength="20.31" lengthAdjust="spacingAndGlyphs" text-anchor="middle" >0.3</text>
<line x1="1633.39" y1="758.10" x2="1633.39" y2="766.40" stroke="#c4c4c4" stroke-width="1.1" />
<text x="1633.39" y="784.80" font-size="17.6" fill="#d4d4d4" textLength="28.43" lengthAdjust="spacingAndGlyphs" text-anchor="middle" >0.35</text>
<line x1="1688.28" y1="758.10" x2="1688.28" y2="766.40" stroke="#c4c4c4" stroke-width="1.1" />
<text x="1688.28" y="784.80" font-size="17.6" fill="#d4d4d4" textLength="20.31" lengthAdjust="spacingAndGlyphs" text-anchor="middle" >0.4</text>
<line x1="1743.16" y1="758.10" x2="1743.16" y2="766.40" stroke="#c4c4c4" stroke-width="1.1" />
<text x="1743.16" y="784.80" font-size="17.6" fill="#d4d4d4" textLength="28.43" lengthAdjust="spacingAndGlyphs" text-anchor="middle" >0.45</text>
<line x1="1798.05" y1="758.10" x2="1798.05" y2="766.40" stroke="#c4c4c4" stroke-width="1.1" />
<text x="1798.05" y="784.80" font-size="17.6" fill="#d4d4d4" textLength="20.31" lengthAdjust="spacingAndGlyphs" text-anchor="middle" >0.5</text>
<line x1="1852.93" y1="758.10" x2="1852.93" y2="766.40" stroke="#c4c4c4" stroke-width="1.1" />
<text x="1852.93" y="784.80" font-size="17.6" fill="#d4d4d4" textLength="28.43" lengthAdjust="spacingAndGlyphs" text-anchor="middle" >0.55</text>
<line x1="1243.00" y1="758.50" x2="1250.00" y2="758.50" stroke="#c4c4c4" stroke-width="1.1" />
<text x="1242.40" y="765.40" font-size="17.6" fill="#d4d4d4" textLength="8.12" lengthAdjust="spacingAndGlyphs" text-anchor="end" >0</text>
<line x1="1243.00" y1="707.35" x2="1250.00" y2="707.35" stroke="#c4c4c4" stroke-width="1.1" />
<text x="1242.40" y="714.25" font-size="17.6" fill="#d4d4d4" textLength="28.43" lengthAdjust="spacingAndGlyphs" text-anchor="end" >0.05</text>
<line x1="1243.00" y1="656.20" x2="1250.00" y2="656.20" stroke="#c4c4c4" stroke-width="1.1" />
<text x="1242.40" y="663.10" font-size="17.6" fill="#d4d4d4" textLength="20.31" lengthAdjust="spacingAndGlyphs" text-anchor="end" >0.1</text>
<line x1="1243.00" y1="605.05" x2="1250.00" y2="605.05" stroke="#c4c4c4" stroke-width="1.1" />
<text x="1242.40" y="611.95" font-size="17.6" fill="#d4d4d4" textLength="28.43" lengthAdjust="spacingAndGlyphs" text-anchor="end" >0.15</text>
<line x1="1243.00" y1="553.90" x2="1250.00" y2="553.90" stroke="#c4c4c4" stroke-width="1.1" />
<text x="1242.40" y="560.80" font-size="17.6" fill="#d4d4d4" textLength="20.31" lengthAdjust="spacingAndGlyphs" text-anchor="end" >0.2</text>
<line x1="1243.00" y1="502.75" x2="1250.00" y2="502.75" stroke="#c4c4c4" stroke-width="1.1" />
<text x="1242.40" y="509.65" font-size="17.6" fill="#d4d4d4" textLength="28.43" lengthAdjust="spacingAndGlyphs" text-anchor="end" >0.25</text>
<line x1="1243.00" y1="451.60" x2="1250.00" y2="451.60" stroke="#c4c4c4" stroke-width="1.1" />
<text x="1242.40" y="458.50" font-size="17.6" fill="#d4d4d4" textLength="20.31" lengthAdjust="spacingAndGlyphs" text-anchor="end" >0.3</text>
<line x1="1243.00" y1="400.45" x2="1250.00" y2="400.45" stroke="#c4c4c4" stroke-width="1.1" />
<text x="1242.40" y="407.35" font-size="17.6" fill="#d4d4d4" textLength="28.43" lengthAdjust="spacingAndGlyphs" text-anchor="end" >0.35</text>
<line x1="1243.00" y1="349.30" x2="1250.00" y2="349.30" stroke="#c4c4c4" stroke-width="1.1" />
<text x="1242.40" y="356.20" font-size="17.6" fill="#d4d4d4" textLength="20.31" lengthAdjust="spacingAndGlyphs" text-anchor="end" >0.4</text>
<line x1="1243.00" y1="298.15" x2="1250.00" y2="298.15" stroke="#c4c4c4" stroke-width="1.1" />
<text x="1242.40" y="305.05" font-size="17.6" fill="#d4d4d4" textLength="28.43" lengthAdjust="spacingAndGlyphs" text-anchor="end" >0.45</text>
<line x1="1243.00" y1="247.00" x2="1250.00" y2="247.00" stroke="#c4c4c4" stroke-width="1.1" />
<text x="1242.40" y="253.90" font-size="17.6" fill="#d4d4d4" textLength="20.31" lengthAdjust="spacingAndGlyphs" text-anchor="end" >0.5</text>
<line x1="1243.00" y1="195.85" x2="1250.00" y2="195.85" stroke="#c4c4c4" stroke-width="1.1" />
<text x="1242.40" y="202.75" font-size="17.6" fill="#d4d4d4" textLength="28.43" lengthAdjust="spacingAndGlyphs" text-anchor="end" >0.55</text></svg>
<div id="cie"><div style="position:absolute;left:1249px;top:150px;width:659px;height:594px;overflow:hidden;clip-path:polygon(282.1px 590.6px,280.9px 591.3px,277.0px 590.3px,274.3px 588.1px,270.4px 584.5px,267.8px 581.9px,265.0px 579.0px,261.6px 575.7px,257.8px 571.8px,254.8px 568.8px,251.3px 565.3px,247.7px 561.7px,244.0px 558.0px,240.5px 554.5px,237.4px 551.4px,233.5px 547.5px,230.2px 544.2px,227.0px 541.0px,223.4px 537.2px,220.8px 534.5px,218.1px 531.6px,215.2px 528.6px,212.3px 525.4px,209.4px 522.0px,206.3px 518.5px,203.6px 515.3px,200.8px 512.1px,198.0px 508.8px,195.1px 505.3px,192.1px 501.6px,189.0px 497.5px,185.7px 493.1px,183.5px 490.0px,181.2px 486.9px,178.8px 483.6px,176.4px 480.2px,174.0px 476.7px,171.5px 473.1px,168.9px 469.4px,166.3px 465.5px,163.7px 461.5px,161.0px 457.4px,158.4px 453.1px,156.4px 450.0px,154.3px 446.7px,152.3px 443.4px,150.2px 440.0px,148.1px 436.5px,145.9px 433.0px,143.8px 429.4px,141.6px 425.8px,139.4px 422.0px,137.2px 418.3px,135.0px 414.4px,132.8px 410.5px,130.6px 406.6px,128.3px 402.6px,126.1px 398.5px,124.2px 395.1px,122.3px 391.6px,120.4px 388.0px,118.5px 384.4px,116.5px 380.8px,114.6px 377.1px,112.6px 373.3px,110.7px 369.5px,108.7px 365.7px,106.7px 361.9px,104.7px 358.0px,102.8px 354.1px,100.8px 350.2px,98.8px 346.3px,96.9px 342.3px,95.0px 338.4px,93.0px 334.5px,91.1px 330.5px,89.3px 326.8px,87.5px 323.0px,85.6px 319.2px,83.8px 315.4px,82.0px 311.5px,80.1px 307.6px,78.3px 303.7px,76.5px 299.8px,74.6px 295.9px,72.8px 292.0px,71.0px 288.1px,69.2px 284.1px,67.5px 280.2px,65.7px 276.3px,64.0px 272.4px,62.3px 268.5px,60.7px 264.7px,59.0px 260.8px,57.4px 257.0px,55.8px 253.0px,54.1px 249.0px,52.5px 245.0px,50.9px 240.9px,49.3px 236.9px,47.8px 232.9px,46.3px 228.9px,44.8px 224.9px,43.3px 220.9px,41.8px 216.9px,40.4px 213.0px,39.0px 209.0px,37.6px 205.2px,36.2px 201.3px,34.9px 197.5px,33.6px 193.8px,32.4px 190.1px,31.1px 186.5px,29.7px 182.1px,28.2px 177.8px,26.9px 173.6px,25.5px 169.4px,24.2px 165.2px,22.9px 161.1px,21.7px 157.1px,20.5px 153.1px,19.4px 149.1px,18.3px 145.2px,17.2px 141.4px,16.1px 137.7px,15.1px 134.0px,14.2px 130.5px,13.3px 127.0px,12.1px 122.3px,11.0px 117.8px,9.9px 113.4px,9.0px 109.2px,8.1px 105.1px,7.3px 101.1px,6.5px 97.2px,5.8px 93.4px,5.1px 89.7px,4.6px 86.2px,4.0px 82.7px,3.3px 77.5px,2.7px 72.7px,2.3px 68.1px,2.0px 63.8px,1.8px 59.6px,1.7px 55.7px,1.8px 51.9px,2.0px 47.0px,2.5px 42.4px,3.3px 38.2px,4.2px 34.4px,5.3px 30.8px,7.6px 25.5px,10.4px 21.1px,13.7px 17.4px,17.3px 14.4px,21.3px 12.2px,25.6px 10.5px,30.1px 9.3px,34.8px 8.5px,39.7px 8.0px,44.8px 7.6px,49.9px 7.4px,55.1px 7.4px,60.3px 7.3px,65.5px 7.4px,70.8px 7.6px,76.2px 7.8px,81.6px 8.1px,87.2px 8.5px,91.4px 8.8px,95.8px 9.2px,100.2px 9.6px,104.8px 10.1px,109.4px 10.5px,114.1px 11.0px,119.0px 11.6px,123.9px 12.1px,129.0px 12.7px,134.2px 13.4px,139.5px 14.0px,144.9px 14.7px,149.4px 15.3px,154.0px 15.9px,158.6px 16.5px,163.4px 17.1px,168.3px 17.7px,173.2px 18.4px,178.3px 19.1px,183.4px 19.8px,188.7px 20.5px,194.0px 21.2px,198.6px 21.9px,203.2px 22.5px,208.0px 23.1px,212.8px 23.8px,217.6px 24.5px,222.6px 25.1px,226.9px 25.7px,231.3px 26.3px,235.7px 27.0px,240.2px 27.6px,244.7px 28.2px,249.3px 28.8px,254.0px 29.5px,258.7px 30.2px,263.4px 30.8px,268.3px 31.5px,273.2px 32.2px,278.1px 32.9px,283.1px 33.6px,288.2px 34.3px,292.6px 34.9px,297.2px 35.5px,301.7px 36.2px,306.3px 36.8px,311.0px 37.4px,315.6px 38.1px,320.3px 38.8px,325.1px 39.4px,329.8px 40.1px,334.7px 40.7px,339.5px 41.4px,344.4px 42.1px,349.3px 42.8px,354.2px 43.5px,359.2px 44.1px,364.1px 44.8px,368.5px 45.4px,373.0px 46.1px,377.5px 46.7px,381.9px 47.3px,386.4px 48.0px,390.9px 48.6px,395.4px 49.2px,399.8px 49.8px,404.2px 50.4px,409.1px 51.1px,414.0px 51.8px,418.9px 52.5px,423.8px 53.2px,428.6px 53.9px,433.5px 54.5px,438.3px 55.2px,443.1px 55.9px,447.9px 56.5px,452.7px 57.2px,457.5px 57.9px,462.3px 58.5px,467.0px 59.2px,471.7px 59.9px,476.4px 60.5px,480.9px 61.1px,486.0px 61.8px,491.1px 62.5px,496.1px 63.2px,501.0px 63.9px,505.8px 64.6px,510.6px 65.2px,515.2px 65.9px,520.5px 66.6px,525.8px 67.3px,530.9px 68.0px,535.9px 68.7px,540.8px 69.4px,545.5px 70.1px,550.7px 70.8px,555.5px 71.5px,560.2px 72.2px,565.3px 72.9px,571.3px 73.7px,575.2px 74.2px,579.4px 74.8px,583.9px 75.5px,588.6px 76.1px,593.4px 76.8px,598.1px 77.4px,602.7px 78.1px,607.0px 78.7px,611.1px 79.2px,616.7px 80.0px,621.9px 80.8px,626.9px 81.4px,631.6px 82.1px,636.0px 82.7px,640.2px 83.3px,645.6px 84.0px,650.0px 84.7px,654.4px 85.3px,659.4px 85.9px,664.4px 86.6px,670.2px 87.5px,676.0px 88.3px,681.0px 89.0px,684.5px 89.5px)">
<i style="top:0px;background:linear-gradient(90deg,#00ff00,#00ff00,#00ff00,#00ff00,#00ff00,#00ff00,#00ff00,#00ff00,#00ff00,#00ff00,#00ff00,#00ff00,#17ff00,#33ff00,#50ff00,#6fff00,#90ff00,#b3ff00,#d9ff00,#fffc00,#ffd800,#ffba00,#ffa200,#ff8f00,#ff7e00,#ff7000,#ff6300,#ff5800,#ff4f00,#ff4600,#ff3f00,#ff3800,#ff3100,#ff2c00,#ff2700,#ff2200,#ff1e00,#ff1a00,#ff1600,#ff1300,#ff0f00,#ff0c00,#ff0a00,#ff0700,#ff0500,#ff0200,#ff0000,#ff0000,#ff0000,#ff0000,#ff0000,#ff0000,#ff0000,#ff0000,#ff0000,#ff0000)"></i>
<i style="top:3px;background:linear-gradient(90deg,#00ff00,#00ff00,#00ff00,#00ff00,#00ff00,#00ff00,#00ff00,#00ff00,#00ff00,#00ff00,#00ff00,#00ff00,#16ff00,#32ff00,#4fff00,#6fff00,#90ff00,#b3ff00,#daff00,#fffb00,#ffd700,#ffb900,#ffa200,#ff8e00,#ff7d00,#ff6f00,#ff6200,#ff5700,#ff4e00,#ff4500,#ff3e00,#ff3700,#ff3100,#ff2b00,#ff2600,#ff2100,#ff1d00,#ff1900,#ff1600,#ff1200,#ff0f00,#ff0c00,#ff0900,#ff0700,#ff0400,#ff0200,#ff0000,#ff0000,#ff0000,#ff0000,#ff0000,#ff0000,#ff0000,#ff0000,#ff0000,#ff0000)"></i>
<i style="top:6px;background:linear-gradient(90deg,#00ff00,#00ff00,#00ff00,#00ff00,#00ff00,#00ff00,#00ff00,#00ff00,#00ff00,#00ff00,#00ff00,#00ff00,#16ff00,#31ff00,#4fff00,#6eff00,#90ff00,#b4ff00,#daff00,#fffb00,#ffd600,#ffb900,#ffa100,#ff8d00,#ff7c00,#ff6e00,#ff6200,#ff5700,#ff4d00,#ff4500,#ff3d00,#ff3600,#ff3000,#ff2b00,#ff2600,#ff2100,#ff1d00,#ff1900,#ff1500,#ff1200,#ff0e00,#ff0b00,#ff0900,#ff0600,#ff0400,#ff0100,#ff0000,#ff0000,#ff0000,#ff0000,#ff0000,#ff0000,#ff0000,#ff0000,#ff0000,#ff0000)"></i>
<i style="top:9px;background:linear-gradient(90deg,#00ff00,#00ff00,#00ff00,#00ff00,#00ff00,#00ff00,#00ff00,#00ff00,#00ff00,#00ff00,#00ff00,#00ff00,#15ff00,#31ff00,#4eff00,#6eff00,#90ff00,#b4ff00,#dbff00,#fffa00,#ffd500,#ffb800,#ffa000,#ff8c00,#ff7b00,#ff6d00,#ff6100,#ff5600,#ff4c00,#ff4400,#ff3c00,#ff3600,#ff3000,#ff2a00,#ff2500,#ff2000,#ff1c00,#ff1800,#ff1400,#ff1100,#ff0e00,#ff0b00,#ff0800,#ff0600,#ff0300,#ff0100,#ff0000,#ff0000,#ff0000,#ff0000,#ff0000,#ff0000,#ff0000,#ff0000,#ff0000,#ff0000)"></i>
<i style="top:12px;background:linear-gradient(90deg,#00ff00,#00ff00,#00ff00,#00ff00,#00ff00,#00ff00,#00ff00,#00ff00,#00ff00,#00ff00,#00ff00,#00ff00,#14ff00,#30ff00,#4eff00,#6eff00,#90ff00,#b4ff00,#dbff00,#fff900,#ffd400,#ffb700,#ff9f00,#ff8b00,#ff7b00,#ff6c00,#ff6000,#ff5500,#ff4c00,#ff4300,#ff3c00,#ff3500,#ff2f00,#ff2900,#ff2400,#ff2000,#ff1b00,#ff1800,#ff1400,#ff1100,#ff0d00,#ff0b00,#ff0800,#ff0500,#ff0300,#ff0100,#ff0000,#ff0000,#ff0000,#ff0000,#ff0000,#ff0000,#ff0000,#ff0000,#ff0000,#ff0000)"></i>
<i style="top:15px;background:linear-gradient(90deg,#00ff00,#00ff00,#00ff00,#00ff00,#00ff00,#00ff00,#00ff00,#00ff00,#00ff00,#00ff00,#00ff00,#00ff00,#13ff00,#30ff00,#4eff00,#6eff00,#90ff00,#b4ff00,#dcff00,#fff800,#ffd300,#ffb600,#ff9e00,#ff8a00,#ff7a00,#ff6b00,#ff5f00,#ff5400,#ff4b00,#ff4300,#ff3b00,#ff3400,#ff2e00,#ff2900,#ff2400,#ff1f00,#ff1b00,#ff1700,#ff1300,#ff1000,#ff0d00,#ff0a00,#ff0700,#ff0500,#ff0200,#ff0000,#ff0000,#ff0000,#ff0000,#ff0000,#ff0000,#ff0000,#ff0000,#ff0000,#ff0000,#ff0000)"></i>
<i style="top:18px;background:linear-gradient(90deg,#00ff04,#00ff02,#00ff00,#00ff00,#00ff00,#00ff00,#00ff00,#00ff00,#00ff00,#00ff00,#00ff00,#00ff00,#13ff00,#2fff00,#4dff00,#6dff00,#90ff00,#b5ff00,#dcff00,#fff700,#ffd200,#ffb500,#ff9d00,#ff8900,#ff7900,#ff6b00,#ff5e00,#ff5400,#ff4a00,#ff4200,#ff3a00,#ff3400,#ff2e00,#ff2800,#ff2300,#ff1f00,#ff1a00,#ff1600,#ff1300,#ff1000,#ff0c00,#ff0a00,#ff0700,#ff0400,#ff0200,#ff0000,#ff0000,#ff0000,#ff0000,#ff0000,#ff0000,#ff0000,#ff0000,#ff0000,#ff0000,#ff0000)"></i>
<i style="top:21px;background:linear-gradient(90deg,#00ff07,#00ff06,#00ff04,#00ff02,#00ff01,#00ff00,#00ff00,#00ff00,#00ff00,#00ff00,#00ff00,#00ff00,#12ff00,#2eff00,#4dff00,#6dff00,#90ff00,#b5ff00,#ddff00,#fff600,#ffd100,#ffb400,#ff9c00,#ff8900,#ff7800,#ff6a00,#ff5e00,#ff5300,#ff4900,#ff4100,#ff3a00,#ff3300,#ff2d00,#ff2800,#ff2300,#ff1e00,#ff1a00,#ff1600,#ff1200,#ff0f00,#ff0c00,#ff0900,#ff0600,#ff0400,#ff0100,#ff0000,#ff0000,#ff0000,#ff0000,#ff0000,#ff0000,#ff0000,#ff0000,#ff0000,#ff0000,#ff0000)"></i>
<i style="top:24px;background:linear-gradient(90deg,#00ff0b,#00ff0a,#00ff08,#00ff07,#00ff05,#00ff03,#00ff01,#00ff00,#00ff00,#00ff00,#00ff00,#00ff00,#11ff00,#2eff00,#4cff00,#6dff00,#90ff00,#b5ff00,#ddff00,#fff500,#ffd000,#ffb300,#ff9b00,#ff8800,#ff7700,#ff6900,#ff5d00,#ff5200,#ff4900,#ff4000,#ff3900,#ff3200,#ff2c00,#ff2700,#ff2200,#ff1d00,#ff1900,#ff1500,#ff1200,#ff0e00,#ff0b00,#ff0900,#ff0600,#ff0300,#ff0100,#ff0000,#ff0000,#ff0000,#ff0000,#ff0000,#ff0000,#ff0000,#ff0000,#ff0000,#ff0000,#ff0000)"></i>
<i style="top:27px;background:linear-gradient(90deg,#00ff0f,#00ff0e,#00ff0c,#00ff0b,#00ff09,#00ff07,#00ff06,#00ff04,#00ff02,#00ff00,#00ff00,#00ff00,#10ff00,#2dff00,#4cff00,#6dff00,#90ff00,#b5ff00,#deff00,#fff500,#ffd000,#ffb200,#ff9a00,#ff8700,#ff7600,#ff6800,#ff5c00,#ff5100,#ff4800,#ff4000,#ff3800,#ff3200,#ff2c00,#ff2600,#ff2100,#ff1d00,#ff1900,#ff1500,#ff1100,#ff0e00,#ff0b00,#ff0800,#ff0500,#ff0300,#ff0100,#ff0000,#ff0000,#ff0000,#ff0000,#ff0000,#ff0000,#ff0000,#ff0000,#ff0000,#ff0000,#ff0000)"></i>
<i style="top:30px;background:linear-gradient(90deg,#00ff13,#00ff12,#00ff10,#00ff0f,#00ff0d,#00ff0c,#00ff0a,#00ff08,#00ff06,#00ff04,#00ff02,#00ff00,#0fff00,#2cff00,#4bff00,#6cff00,#90ff00,#b6ff00,#dfff00,#fff400,#ffcf00,#ffb100,#ff9a00,#ff8600,#ff7500,#ff6700,#ff5b00,#ff5100,#ff4700,#ff3f00,#ff3800,#ff3100,#ff2b00,#ff2600,#ff2100,#ff1c00,#ff1800,#ff1400,#ff1100,#ff0d00,#ff0a00,#ff0800,#ff0500,#ff0200,#ff0000,#ff0000,#ff0000,#ff0000,#ff0000,#ff0000,#ff0000,#ff0000,#ff0000,#ff0000,#ff0000,#ff0000)"></i>
<i style="top:33px;background:linear-gradient(90deg,#00ff17,#00ff16,#00ff15,#00ff13,#00ff12,#00ff10,#00ff0f,#00ff0d,#00ff0b,#00ff09,#00ff07,#00ff05,#0fff03,#2cff00,#4bff00,#6cff00,#90ff00,#b6ff00,#dfff00,#fff300,#ffce00,#ffb000,#ff9900,#ff8500,#ff7400,#ff6600,#ff5a00,#ff5000,#ff4600,#ff3e00,#ff3700,#ff3000,#ff2a00,#ff2500,#ff2000,#ff1c00,#ff1700,#ff1400,#ff1000,#ff0d00,#ff0a00,#ff0700,#ff0400,#ff0200,#ff0000,#ff0000,#ff0000,#ff0000,#ff0000,#ff0000,#ff0000,#ff0000,#ff0000,#ff0000,#ff0000,#ff0000)"></i>
<i style="top:36px;background:linear-gradient(90deg,#00ff1b,#00ff1a,#00ff19,#00ff17,#00ff16,#00ff15,#00ff13,#00ff12,#00ff10,#00ff0e,#00ff0c,#00ff0a,#0eff08,#2bff06,#4aff04,#6cff01,#90ff00,#b6ff00,#e0ff00,#fff200,#ffcd00,#ffaf00,#ff9800,#ff8400,#ff7400,#ff6600,#ff5900,#ff4f00,#ff4600,#ff3e00,#ff3600,#ff3000,#ff2a00,#ff2400,#ff1f00,#ff1b00,#ff1700,#ff1300,#ff1000,#ff0c00,#ff0900,#ff0700,#ff0400,#ff0100,#ff0000,#ff0000,#ff0000,#ff0000,#ff0000,#ff0000,#ff0000,#ff0000,#ff0000,#ff0000,#ff0000,#ff0000)"></i>
<i style="top:39px;background:linear-gradient(90deg,#00ff1f,#00ff1e,#00ff1d,#00ff1c,#00ff1b,#00ff19,#00ff18,#00ff16,#00ff15,#00ff13,#00ff11,#00ff10,#0dff0e,#2aff0c,#4aff09,#6bff07,#90ff04,#b7ff02,#e0ff00,#fff100,#ffcc00,#ffae00,#ff9700,#ff8300,#ff7300,#ff6500,#ff5900,#ff4e00,#ff4500,#ff3d00,#ff3600,#ff2f00,#ff2900,#ff2400,#ff1f00,#ff1a00,#ff1600,#ff1300,#ff0f00,#ff0c00,#ff0900,#ff0600,#ff0300,#ff0100,#ff0000,#ff0000,#ff0000,#ff0000,#ff0000,#ff0000,#ff0000,#ff0000,#ff0000,#ff0000,#ff0000,#ff0000)"></i>
<i style="top:42px;background:linear-gradient(90deg,#00ff23,#00ff22,#00ff21,#00ff20,#00ff1f,#00ff1e,#00ff1d,#00ff1b,#00ff1a,#00ff18,#00ff17,#00ff15,#0cff13,#2aff11,#49ff0f,#6bff0d,#90ff0b,#b7ff08,#e1ff05,#fff002,#ffcb00,#ffad00,#ff9600,#ff8200,#ff7200,#ff6400,#ff5800,#ff4d00,#ff4400,#ff3c00,#ff3500,#ff2e00,#ff2800,#ff2300,#ff1e00,#ff1a00,#ff1600,#ff1200,#ff0f00,#ff0b00,#ff0800,#ff0600,#ff0300,#ff0100,#ff0000,#ff0000,#ff0000,#ff0000,#ff0000,#ff0000,#ff0000,#ff0000,#ff0000,#ff0000,#ff0000,#ff0000)"></i>
<i style="top:45px;background:linear-gradient(90deg,#00ff27,#00ff26,#00ff26,#00ff25,#00ff23,#00ff22,#00ff21,#00ff20,#00ff1f,#00ff1d,#00ff1c,#00ff1a,#0bff19,#29ff17,#49ff15,#6bff13,#90ff11,#b7ff0f,#e2ff0c,#ffef09,#ffca05,#ffad02,#ff9500,#ff8100,#ff7100,#ff6300,#ff5700,#ff4d00,#ff4300,#ff3b00,#ff3400,#ff2e00,#ff2800,#ff2200,#ff1e00,#ff1900,#ff1500,#ff1100,#ff0e00,#ff0b00,#ff0800,#ff0500,#ff0200,#ff0000,#ff0000,#ff0000,#ff0000,#ff0000,#ff0000,#ff0000,#ff0000,#ff0000,#ff0000,#ff0000,#ff0000,#ff0000)"></i>
<i style="top:48px;background:linear-gradient(90deg,#00ff2c,#00ff2b,#00ff2a,#00ff29,#00ff28,#00ff27,#00ff26,#00ff25,#00ff24,#00ff23,#00ff21,#00ff20,#0aff1e,#28ff1d,#48ff1b,#6bff19,#90ff18,#b7ff15,#e2ff13,#ffee10,#ffc90b,#ffac08,#ff9405,#ff8002,#ff7000,#ff6200,#ff5600,#ff4c00,#ff4300,#ff3b00,#ff3300,#ff2d00,#ff2700,#ff2200,#ff1d00,#ff1900,#ff1500,#ff1100,#ff0d00,#ff0a00,#ff0700,#ff0500,#ff0200,#ff0000,#ff0000,#ff0000,#ff0000,#ff0000,#ff0000,#ff0000,#ff0000,#ff0000,#ff0000,#ff0000,#ff0000,#ff0000)"></i>
<i style="top:51px;background:linear-gradient(90deg,#00ff30,#00ff2f,#00ff2e,#00ff2d,#00ff2d,#00ff2c,#00ff2b,#00ff2a,#00ff29,#00ff28,#00ff27,#00ff26,#09ff24,#27ff23,#48ff21,#6aff20,#90ff1e,#b8ff1c,#e3ff1a,#ffed16,#ffc811,#ffab0d,#ff9309,#ff7f07,#ff6f04,#ff6102,#ff5501,#ff4b00,#ff4200,#ff3a00,#ff3300,#ff2c00,#ff2600,#ff2100,#ff1c00,#ff1800,#ff1400,#ff1000,#ff0d00,#ff0a00,#ff0700,#ff0400,#ff0100,#ff0000,#ff0000,#ff0000,#ff0000,#ff0000,#ff0000,#ff0000,#ff0000,#ff0000,#ff0000,#ff0000,#ff0000,#ff0000)"></i>
<i style="top:54px;background:linear-gradient(90deg,#00ff34,#00ff33,#00ff33,#00ff32,#00ff31,#00ff31,#00ff30,#00ff2f,#00ff2e,#00ff2d,#00ff2c,#00ff2b,#08ff2a,#27ff29,#47ff28,#6aff26,#90ff25,#b8ff23,#e4ff21,#ffec1d,#ffc717,#ffaa12,#ff920e,#ff7f0b,#ff6e08,#ff6006,#ff5504,#ff4a02,#ff4101,#ff3900,#ff3200,#ff2c00,#ff2600,#ff2100,#ff1c00,#ff1700,#ff1300,#ff1000,#ff0c00,#ff0900,#ff0600,#ff0400,#ff0100,#ff0000,#ff0000,#ff0000,#ff0000,#ff0000,#ff0000,#ff0000,#ff0000,#ff0000,#ff0000,#ff0000,#ff0000,#ff0000)"></i>
<i style="top:57px;background:linear-gradient(90deg,#00ff38,#00ff38,#00ff37,#00ff37,#00ff36,#00ff35,#00ff35,#00ff34,#00ff33,#00ff33,#00ff32,#00ff31,#07ff30,#26ff2f,#47ff2e,#6aff2d,#90ff2c,#b8ff2a,#e4ff29,#ffeb24,#ffc61d,#ffa918,#ff9113,#ff7e0f,#ff6d0c,#ff600a,#ff5408,#ff4906,#ff4004,#ff3802,#ff3101,#ff2b00,#ff2500,#ff2000,#ff1b00,#ff1700,#ff1300,#ff0f00,#ff0c00,#ff0900,#ff0600,#ff0300,#ff0100,#ff0000,#ff0000,#ff0000,#ff0000,#ff0000,#ff0000,#ff0000,#ff0000,#ff0000,#ff0000,#ff0000,#ff0000,#ff0000)"></i>
<i style="top:60px;background:linear-gradient(90deg,#00ff3d,#00ff3c,#00ff3c,#00ff3b,#00ff3b,#00ff3a,#00ff3a,#00ff39,#00ff39,#00ff38,#00ff37,#00ff37,#07ff36,#25ff35,#46ff34,#69ff33,#8fff32,#b9ff31,#e5ff30,#ffea2b,#ffc523,#ffa81d,#ff9018,#ff7d14,#ff6c10,#ff5f0d,#ff530b,#ff4909,#ff4007,#ff3805,#ff3004,#ff2a02,#ff2401,#ff1f00,#ff1b00,#ff1600,#ff1200,#ff0f00,#ff0b00,#ff0800,#ff0500,#ff0300,#ff0000,#ff0000,#ff0000,#ff0000,#ff0000,#ff0000,#ff0000,#ff0000,#ff0000,#ff0000,#ff0000,#ff0000,#ff0000,#ff0000)"></i>
<i style="top:63px;background:linear-gradient(90deg,#00ff41,#00ff41,#00ff40,#00ff40,#00ff40,#00ff3f,#00ff3f,#00ff3e,#00ff3e,#00ff3e,#00ff3d,#00ff3d,#06ff3c,#24ff3b,#46ff3b,#69ff3a,#8fff39,#b9ff39,#e6ff38,#ffe932,#ffc429,#ffa722,#ff8f1d,#ff7c18,#ff6b14,#ff5e11,#ff520e,#ff480c,#ff3f0a,#ff3708,#ff3006,#ff2905,#ff2404,#ff1f02,#ff1a01,#ff1600,#ff1200,#ff0e00,#ff0b00,#ff0800,#ff0500,#ff0200,#ff0000,#ff0000,#ff0000,#ff0000,#ff0000,#ff0000,#ff0000,#ff0000,#ff0000,#ff0000,#ff0000,#ff0000,#ff0000,#ff0000)"></i>
<i style="top:66px;background:linear-gradient(90deg,#00ff45,#00ff45,#00ff45,#00ff45,#00ff44,#00ff44,#00ff44,#00ff44,#00ff43,#00ff43,#00ff43,#00ff42,#05ff42,#24ff42,#45ff41,#69ff41,#8fff40,#b9ff40,#e6ff3f,#ffe839,#ffc32f,#ffa628,#ff8e22,#ff7b1d,#ff6b19,#ff5d15,#ff5112,#ff470f,#ff3e0d,#ff360b,#ff2f09,#ff2907,#ff2306,#ff1e05,#ff1903,#ff1502,#ff1101,#ff0d00,#ff0a00,#ff0700,#ff0400,#ff0200,#ff0000,#ff0000,#ff0000,#ff0000,#ff0000,#ff0000,#ff0000,#ff0000,#ff0000,#ff0000,#ff0000,#ff0000,#ff0000,#ff0000)"></i>
<i style="top:69px;background:linear-gradient(90deg,#00ff4a,#00ff4a,#00ff4a,#00ff49,#00ff49,#00ff49,#00ff49,#00ff49,#00ff49,#00ff49,#00ff49,#00ff49,#04ff48,#23ff48,#44ff48,#69ff48,#8fff48,#baff47,#e7ff47,#ffe740,#ffc236,#ffa52d,#ff8d27,#ff7a21,#ff6a1d,#ff5c19,#ff5015,#ff4613,#ff3d10,#ff350e,#ff2e0c,#ff280a,#ff2208,#ff1d07,#ff1906,#ff1404,#ff1003,#ff0d02,#ff0a01,#ff0701,#ff0400,#ff0100,#ff0000,#ff0000,#ff0000,#ff0000,#ff0000,#ff0000,#ff0000,#ff0000,#ff0000,#ff0000,#ff0000,#ff0000,#ff0000,#ff0000)"></i>
<i style="top:72px;background:linear-gradient(90deg,#00ff4e,#00ff4e,#00ff4e,#00ff4e,#00ff4e,#00ff4e,#00ff4e,#00ff4e,#00ff4e,#00ff4f,#00ff4f,#00ff4f,#03ff4f,#22ff4f,#44ff4f,#68ff4f,#8fff4f,#baff4f,#e8ff4f,#ffe648,#ffc13c,#ffa433,#ff8c2c,#ff7926,#ff6921,#ff5b1d,#ff4f19,#ff4516,#ff3c13,#ff3511,#ff2e0f,#ff270d,#ff220b,#ff1d09,#ff1808,#ff1407,#ff1005,#ff0c04,#ff0903,#ff0602,#ff0301,#ff0101,#ff0000,#ff0000,#ff0000,#ff0000,#ff0000,#ff0000,#ff0000,#ff0000,#ff0000,#ff0000,#ff0000,#ff0000,#ff0000,#ff0000)"></i>
<i style="top:75px;background:linear-gradient(90deg,#00ff53,#00ff53,#00ff53,#00ff53,#00ff53,#00ff54,#00ff54,#00ff54,#00ff54,#00ff54,#00ff55,#00ff55,#02ff55,#21ff55,#43ff56,#68ff56,#8fff56,#baff57,#e9ff57,#ffe54f,#ffc042,#ffa239,#ff8b31,#ff782a,#ff6825,#ff5a20,#ff4e1d,#ff4419,#ff3c16,#ff3414,#ff2d11,#ff270f,#ff210d,#ff1c0c,#ff170a,#ff1309,#ff0f07,#ff0c06,#ff0805,#ff0504,#ff0303,#ff0002,#ff0002,#ff0001,#ff0000,#ff0000,#ff0000,#ff0000,#ff0000,#ff0000,#ff0000,#ff0000,#ff0000,#ff0000,#ff0000,#ff0000)"></i>
<i style="top:78px;background:linear-gradient(90deg,#00ff57,#00ff58,#00ff58,#00ff58,#00ff58,#00ff59,#00ff59,#00ff59,#00ff5a,#00ff5a,#00ff5b,#00ff5b,#01ff5c,#20ff5c,#43ff5d,#68ff5d,#8fff5e,#bbff5f,#e9ff5f,#ffe456,#ffbf49,#ffa13e,#ff8a36,#ff772f,#ff6729,#ff5924,#ff4e20,#ff441c,#ff3b19,#ff3317,#ff2c14,#ff2612,#ff2010,#ff1b0e,#ff170c,#ff130b,#ff0f09,#ff0b08,#ff0807,#ff0506,#ff0205,#ff0004,#ff0003,#ff0002,#ff0002,#ff0001,#ff0000,#ff0000,#ff0000,#ff0000,#ff0000,#ff0000,#ff0000,#ff0000,#ff0000,#ff0000)"></i>
<i style="top:81px;background:linear-gradient(90deg,#00ff5c,#00ff5c,#00ff5d,#00ff5d,#00ff5e,#00ff5e,#00ff5e,#00ff5f,#00ff60,#00ff60,#00ff61,#00ff61,#00ff62,#20ff63,#42ff64,#67ff65,#8fff66,#bbff67,#eaff68,#ffe35e,#ffbe4f,#ffa044,#ff893b,#ff7633,#ff662d,#ff5828,#ff4d24,#ff4320,#ff3a1c,#ff3219,#ff2b17,#ff2514,#ff2012,#ff1b10,#ff160f,#ff120d,#ff0e0c,#ff0b0a,#ff0709,#ff0408,#ff0207,#ff0006,#ff0005,#ff0004,#ff0003,#ff0002,#ff0002,#ff0001,#ff0000,#ff0000,#ff0000,#ff0000,#ff0000,#ff0000,#ff0000,#ff0000)"></i>
<i style="top:84px;background:linear-gradient(90deg,#00ff61,#00ff61,#00ff62,#00ff62,#00ff63,#00ff63,#00ff64,#00ff65,#00ff65,#00ff66,#00ff67,#00ff68,#00ff69,#1fff6a,#41ff6b,#67ff6c,#8fff6d,#bbff6f,#ebff70,#ffe265,#ffbd56,#ff9f4a,#ff8840,#ff7538,#ff6532,#ff572c,#ff4c27,#ff4223,#ff3920,#ff311c,#ff2b1a,#ff2417,#ff1f15,#ff1a13,#ff1511,#ff110f,#ff0d0e,#ff0a0c,#ff070b,#ff040a,#ff0108,#ff0007,#ff0006,#ff0006,#ff0005,#ff0004,#ff0003,#ff0002,#ff0002,#ff0001,#ff0000,#ff0000,#ff0000,#ff0000,#ff0000,#ff0000)"></i>
<i style="top:87px;background:linear-gradient(90deg,#00ff65,#00ff66,#00ff67,#00ff67,#00ff68,#00ff69,#00ff6a,#00ff6a,#00ff6b,#00ff6c,#00ff6d,#00ff6e,#00ff70,#1eff71,#41ff72,#67ff74,#8fff75,#bcff77,#ecff79,#ffe16d,#ffbb5c,#ff9e4f,#ff8745,#ff743d,#ff6436,#ff5630,#ff4b2b,#ff4127,#ff3823,#ff311f,#ff2a1c,#ff241a,#ff1e17,#ff1915,#ff1513,#ff1111,#ff0d10,#ff090e,#ff060d,#ff030b,#ff000a,#ff0009,#ff0008,#ff0007,#ff0006,#ff0005,#ff0005,#ff0004,#ff0003,#ff0002,#ff0002,#ff0001,#ff0000,#ff0000,#ff0000,#ff0000)"></i>
<i style="top:90px;background:linear-gradient(90deg,#00ff6a,#00ff6b,#00ff6c,#00ff6c,#00ff6d,#00ff6e,#00ff6f,#00ff70,#00ff71,#00ff72,#00ff74,#00ff75,#00ff77,#1dff78,#40ff7a,#66ff7b,#8fff7d,#bcff80,#edff82,#ffe074,#ffba63,#ff9d55,#ff864a,#ff7341,#ff633a,#ff5634,#ff4a2f,#ff402a,#ff3726,#ff3022,#ff291f,#ff231c,#ff1e1a,#ff1917,#ff1415,#ff1013,#ff0c12,#ff0910,#ff060f,#ff030d,#ff000c,#ff000b,#ff000a,#ff0009,#ff0008,#ff0007,#ff0006,#ff0005,#ff0004,#ff0004,#ff0003,#ff0002,#ff0002,#ff0001,#ff0001,#ff0000)"></i>
<i style="top:93px;background:linear-gradient(90deg,#00ff6f,#00ff70,#00ff71,#00ff72,#00ff73,#00ff74,#00ff75,#00ff76,#00ff77,#00ff79,#00ff7a,#00ff7c,#00ff7d,#1cff7f,#40ff81,#66ff83,#8fff86,#bcff88,#eeff8b,#ffdf7c,#ffb969,#ff9c5b,#ff8550,#ff7246,#ff623e,#ff5538,#ff4932,#ff3f2d,#ff3729,#ff2f25,#ff2822,#ff221f,#ff1d1c,#ff181a,#ff1318,#ff0f16,#ff0c14,#ff0812,#ff0511,#ff020f,#ff000e,#ff000d,#ff000b,#ff000a,#ff0009,#ff0008,#ff0007,#ff0007,#ff0006,#ff0005,#ff0004,#ff0004,#ff0003,#ff0002,#ff0002,#ff0001)"></i>
<i style="top:96px;background:linear-gradient(90deg,#00ff74,#00ff75,#00ff76,#00ff77,#00ff78,#00ff79,#00ff7b,#00ff7c,#00ff7e,#00ff7f,#00ff81,#00ff83,#00ff85,#1bff87,#3fff89,#65ff8b,#8fff8e,#bdff91,#eeff94,#ffde84,#ffb870,#ff9b61,#ff8455,#ff714b,#ff6143,#ff543c,#ff4836,#ff3e31,#ff362c,#ff2e28,#ff2825,#ff2222,#ff1c1f,#ff171c,#ff131a,#ff0f18,#ff0b16,#ff0814,#ff0512,#ff0211,#ff0010,#ff000e,#ff000d,#ff000c,#ff000b,#ff000a,#ff0009,#ff0008,#ff0007,#ff0006,#ff0006,#ff0005,#ff0004,#ff0004,#ff0003,#ff0002)"></i>
<i style="top:99px;background:linear-gradient(90deg,#00ff79,#00ff7a,#00ff7b,#00ff7c,#00ff7e,#00ff7f,#00ff80,#00ff82,#00ff84,#00ff86,#00ff87,#00ff8a,#00ff8c,#1aff8e,#3eff91,#65ff93,#8fff96,#bdff9a,#efff9d,#ffdd8c,#ffb777,#ff9a67,#ff835a,#ff7050,#ff6047,#ff5340,#ff473a,#ff3e34,#ff352f,#ff2d2b,#ff2728,#ff2124,#ff1b21,#ff171f,#ff121c,#ff0e1a,#ff0a18,#ff0716,#ff0414,#ff0113,#ff0011,#ff0010,#ff000f,#ff000d,#ff000c,#ff000b,#ff000a,#ff0009,#ff0009,#ff0008,#ff0007,#ff0006,#ff0005,#ff0005,#ff0004,#ff0003)"></i>
<i style="top:102px;background:linear-gradient(90deg,#00ff7e,#00ff7f,#00ff80,#00ff82,#00ff83,#00ff85,#00ff86,#00ff88,#00ff8a,#00ff8c,#00ff8e,#00ff91,#00ff93,#19ff96,#3eff99,#65ff9c,#8fff9f,#bdffa3,#f0ffa7,#ffdc94,#ffb67e,#ff996d,#ff825f,#ff6f54,#ff5f4b,#ff5244,#ff463d,#ff3d38,#ff3433,#ff2d2e,#ff262a,#ff2027,#ff1b24,#ff1621,#ff121f,#ff0e1c,#ff0a1a,#ff0618,#ff0316,#ff0015,#ff0013,#ff0012,#ff0010,#ff000f,#ff000e,#ff000d,#ff000c,#ff000b,#ff000a,#ff0009,#ff0008,#ff0007,#ff0007,#ff0006,#ff0005,#ff0005)"></i>
<i style="top:105px;background:linear-gradient(90deg,#00ff83,#00ff84,#00ff85,#00ff87,#00ff89,#00ff8a,#00ff8c,#00ff8e,#00ff90,#00ff93,#00ff95,#00ff98,#00ff9a,#19ff9d,#3dffa1,#64ffa4,#8fffa8,#beffac,#f1ffb1,#ffdb9c,#ffb585,#ff9873,#ff8065,#ff6e59,#ff5e50,#ff5148,#ff4641,#ff3c3b,#ff3336,#ff2c31,#ff252d,#ff1f2a,#ff1a26,#ff1523,#ff1121,#ff0d1e,#ff091c,#ff061a,#ff0318,#ff0017,#ff0015,#ff0013,#ff0012,#ff0011,#ff000f,#ff000e,#ff000d,#ff000c,#ff000b,#ff000a,#ff0009,#ff0009,#ff0008,#ff0007,#ff0006,#ff0006)"></i>
<i style="top:108px;background:linear-gradient(90deg,#00ff88,#00ff89,#00ff8b,#00ff8d,#00ff8e,#00ff90,#00ff92,#00ff95,#00ff97,#00ff99,#00ff9c,#00ff9f,#00ffa2,#18ffa5,#3cffa9,#64ffad,#8fffb1,#beffb5,#f2ffba,#ffdaa4,#ffb48c,#ff9679,#ff7f6a,#ff6d5e,#ff5d54,#ff504c,#ff4545,#ff3b3e,#ff3339,#ff2b34,#ff2430,#ff1f2c,#ff1929,#ff1526,#ff1023,#ff0c21,#ff091e,#ff051c,#ff021a,#ff0018,#ff0017,#ff0015,#ff0014,#ff0012,#ff0011,#ff0010,#ff000f,#ff000e,#ff000d,#ff000c,#ff000b,#ff000a,#ff0009,#ff0008,#ff0008,#ff0007)"></i>
<i style="top:111px;background:linear-gradient(90deg,#00ff8d,#00ff8e,#00ff90,#00ff92,#00ff94,#00ff96,#00ff99,#00ff9b,#00ff9d,#00ffa0,#00ffa3,#00ffa6,#00ffaa,#17ffad,#3bffb1,#64ffb5,#8fffba,#bfffbf,#f3ffc5,#ffd8ac,#ffb293,#ff957f,#ff7e70,#ff6c63,#ff5c59,#ff4f50,#ff4448,#ff3a42,#ff323c,#ff2a37,#ff2433,#ff1e2f,#ff192c,#ff1428,#ff1025,#ff0c23,#ff0820,#ff051e,#ff021c,#ff001a,#ff0019,#ff0017,#ff0015,#ff0014,#ff0013,#ff0011,#ff0010,#ff000f,#ff000e,#ff000d,#ff000c,#ff000b,#ff000a,#ff000a,#ff0009,#ff0008)"></i>
<i style="top:114px;background:linear-gradient(90deg,#00ff92,#00ff94,#00ff96,#00ff98,#00ff9a,#00ff9c,#00ff9f,#00ffa1,#00ffa4,#00ffa7,#00ffaa,#00ffae,#00ffb1,#16ffb5,#3bffba,#63ffbe,#8fffc3,#bfffc9,#f4ffcf,#ffd7b4,#ffb19a,#ff9485,#ff7d75,#ff6a68,#ff5b5d,#ff4e54,#ff434c,#ff3945,#ff3140,#ff293a,#ff2336,#ff1d32,#ff182e,#ff132b,#ff0f28,#ff0b25,#ff0723,#ff0420,#ff011e,#ff001c,#ff001a,#ff0019,#ff0017,#ff0016,#ff0014,#ff0013,#ff0012,#ff0011,#ff000f,#ff000e,#ff000d,#ff000c,#ff000c,#ff000b,#ff000a,#ff0009)"></i>
<i style="top:117px;background:linear-gradient(90deg,#00ff97,#00ff99,#00ff9b,#00ff9d,#00ffa0,#00ffa2,#00ffa5,#00ffa8,#00ffab,#00ffae,#00ffb1,#00ffb5,#00ffb9,#15ffbd,#3affc2,#63ffc7,#8fffcd,#c0ffd3,#f5ffd9,#ffd6bd,#ffb0a1,#ff938b,#ff7c7b,#ff696d,#ff5a62,#ff4d58,#ff4250,#ff3849,#ff3043,#ff293e,#ff2239,#ff1c34,#ff1731,#ff122d,#ff0e2a,#ff0a27,#ff0725,#ff0322,#ff0020,#ff001e,#ff001c,#ff001a,#ff0019,#ff0017,#ff0016,#ff0014,#ff0013,#ff0012,#ff0011,#ff0010,#ff000f,#ff000e,#ff000d,#ff000c,#ff000b,#ff000a)"></i>
<i style="top:120px;background:linear-gradient(90deg,#00ff9c,#00ff9f,#00ffa1,#00ffa3,#00ffa6,#00ffa8,#00ffab,#00ffae,#00ffb2,#00ffb5,#00ffb9,#00ffbd,#00ffc1,#14ffc6,#39ffcb,#62ffd0,#8fffd6,#c0ffdd,#f6ffe4,#ffd5c5,#ffafa8,#ff9292,#ff7b80,#ff6872,#ff5966,#ff4c5c,#ff4154,#ff374d,#ff2f46,#ff2841,#ff213c,#ff1c37,#ff1633,#ff1230,#ff0e2c,#ff0a29,#ff0627,#ff0324,#ff0022,#ff0020,#ff001e,#ff001c,#ff001a,#ff0019,#ff0017,#ff0016,#ff0015,#ff0013,#ff0012,#ff0011,#ff0010,#ff000f,#ff000e,#ff000d,#ff000c,#ff000c)"></i>
<i style="top:123px;background:linear-gradient(90deg,#00ffa2,#00ffa4,#00ffa7,#00ffa9,#00ffac,#00ffaf,#00ffb2,#00ffb5,#00ffb9,#00ffbc,#00ffc0,#00ffc5,#00ffc9,#13ffce,#39ffd4,#62ffda,#8fffe0,#c0ffe7,#f7ffef,#ffd4ce,#ffaeaf,#ff9198,#ff7a86,#ff6777,#ff586b,#ff4b60,#ff4058,#ff3750,#ff2e49,#ff2744,#ff213f,#ff1b3a,#ff1636,#ff1132,#ff0d2f,#ff092c,#ff0629,#ff0226,#ff0024,#ff0022,#ff0020,#ff001e,#ff001c,#ff001a,#ff0019,#ff0017,#ff0016,#ff0015,#ff0014,#ff0012,#ff0011,#ff0010,#ff000f,#ff000e,#ff000e,#ff000d)"></i>
<i style="top:126px;background:linear-gradient(90deg,#00ffa7,#00ffaa,#00ffac,#00ffaf,#00ffb2,#00ffb5,#00ffb8,#00ffbc,#00ffc0,#00ffc4,#00ffc8,#00ffcd,#00ffd1,#11ffd7,#38ffdd,#61ffe3,#8fffea,#c1fff2,#f8fffa,#ffd2d6,#ffadb7,#ff909e,#ff798b,#ff667c,#ff576f,#ff4a65,#ff3f5b,#ff3654,#ff2d4d,#ff2647,#ff2041,#ff1a3d,#ff1538,#ff1035,#ff0c31,#ff082e,#ff052b,#ff0228,#ff0026,#ff0024,#ff0022,#ff0020,#ff001e,#ff001c,#ff001a,#ff0019,#ff0018,#ff0016,#ff0015,#ff0014,#ff0013,#ff0012,#ff0011,#ff0010,#ff000f,#ff000e)"></i>
<i style="top:129px;background:linear-gradient(90deg,#00ffad,#00ffaf,#00ffb2,#00ffb5,#00ffb8,#00ffbb,#00ffbf,#00ffc3,#00ffc7,#00ffcb,#00ffd0,#00ffd5,#00ffda,#10ffe0,#37ffe6,#61ffed,#8ffff4,#c1fffc,#f3f9ff,#ffd1df,#ffabbe,#ff8ea5,#ff7791,#ff6581,#ff5674,#ff4969,#ff3e5f,#ff3557,#ff2d50,#ff254a,#ff1f44,#ff193f,#ff143b,#ff1037,#ff0c34,#ff0830,#ff042d,#ff012a,#ff0028,#ff0026,#ff0023,#ff0021,#ff001f,#ff001e,#ff001c,#ff001b,#ff0019,#ff0018,#ff0016,#ff0015,#ff0014,#ff0013,#ff0012,#ff0011,#ff0010,#ff000f)"></i>
<i style="top:132px;background:linear-gradient(90deg,#00ffb2,#00ffb5,#00ffb8,#00ffbb,#00ffbe,#00ffc2,#00ffc6,#00ffca,#00ffce,#00ffd2,#00ffd7,#00ffdd,#00ffe2,#0fffe9,#36ffef,#61fff7,#8fffff,#bcf7ff,#e9eeff,#ffd0e8,#ffaac5,#ff8dab,#ff7697,#ff6486,#ff5579,#ff486d,#ff3d63,#ff345b,#ff2c53,#ff254d,#ff1e47,#ff1942,#ff143e,#ff0f3a,#ff0b36,#ff0732,#ff042f,#ff002d,#ff002a,#ff0027,#ff0025,#ff0023,#ff0021,#ff001f,#ff001e,#ff001c,#ff001b,#ff0019,#ff0018,#ff0017,#ff0015,#ff0014,#ff0013,#ff0012,#ff0011,#ff0010)"></i>
<i style="top:135px;background:linear-gradient(90deg,#00ffb8,#00ffbb,#00ffbe,#00ffc1,#00ffc5,#00ffc8,#00ffcc,#00ffd1,#00ffd5,#00ffda,#00ffdf,#00ffe5,#00ffeb,#0efff2,#35fff9,#5ffdff,#89f5ff,#b4edff,#e1e4ff,#ffcff1,#ffa9cd,#ff8cb2,#ff759d,#ff638b,#ff547d,#ff4771,#ff3c67,#ff335e,#ff2b57,#ff2450,#ff1d4a,#ff1845,#ff1340,#ff0e3c,#ff0a38,#ff0635,#ff0332,#ff002f,#ff002c,#ff0029,#ff0027,#ff0025,#ff0023,#ff0021,#ff001f,#ff001e,#ff001c,#ff001b,#ff0019,#ff0018,#ff0017,#ff0016,#ff0014,#ff0013,#ff0012,#ff0011)"></i>
<i style="top:138px;background:linear-gradient(90deg,#00ffbd,#00ffc0,#00ffc4,#00ffc7,#00ffcb,#00ffcf,#00ffd3,#00ffd8,#00ffdd,#00ffe2,#00ffe7,#00ffed,#00fff4,#0dfffb,#34fcff,#5bf4ff,#84ecff,#aee3ff,#d9dbff,#ffcefa,#ffa8d5,#ff8bb8,#ff74a2,#ff6291,#ff5382,#ff4676,#ff3b6b,#ff3262,#ff2a5a,#ff2353,#ff1d4d,#ff1748,#ff1243,#ff0e3f,#ff093b,#ff0637,#ff0234,#ff0031,#ff002e,#ff002b,#ff0029,#ff0027,#ff0025,#ff0023,#ff0021,#ff001f,#ff001e,#ff001c,#ff001b,#ff0019,#ff0018,#ff0017,#ff0016,#ff0015,#ff0014,#ff0013)"></i>
<i style="top:141px;background:linear-gradient(90deg,#00ffc3,#00ffc6,#00ffca,#00ffce,#00ffd2,#00ffd6,#00ffda,#00ffdf,#00ffe4,#00ffea,#00ffef,#00fff6,#00fffd,#0cfaff,#31f2ff,#58ebff,#7fe3ff,#a7daff,#d1d2ff,#fbc9ff,#ffa6dc,#ff89bf,#ff73a8,#ff6196,#ff5287,#ff457a,#ff3a6f,#ff3166,#ff295e,#ff2257,#ff1c50,#ff164b,#ff1146,#ff0d41,#ff093d,#ff0539,#ff0236,#ff0033,#ff0030,#ff002d,#ff002b,#ff0028,#ff0026,#ff0024,#ff0022,#ff0021,#ff001f,#ff001d,#ff001c,#ff001b,#ff0019,#ff0018,#ff0017,#ff0016,#ff0015,#ff0014)"></i>
<i style="top:144px;background:linear-gradient(90deg,#00ffc9,#00ffcc,#00ffd0,#00ffd4,#00ffd8,#00ffdd,#00ffe1,#00ffe6,#00ffec,#00fff2,#00fff8,#00ffff,#00f8ff,#0af1ff,#2feaff,#54e2ff,#7adaff,#a1d2ff,#cacaff,#f3c1ff,#ffa5e4,#ff88c6,#ff72ae,#ff5f9b,#ff508b,#ff447e,#ff3973,#ff3069,#ff2861,#ff215a,#ff1b53,#ff154d,#ff1148,#ff0c44,#ff083f,#ff043c,#ff0138,#ff0035,#ff0032,#ff002f,#ff002d,#ff002a,#ff0028,#ff0026,#ff0024,#ff0022,#ff0021,#ff001f,#ff001d,#ff001c,#ff001b,#ff0019,#ff0018,#ff0017,#ff0016,#ff0015)"></i>
<i style="top:147px;background:linear-gradient(90deg,#00ffcf,#00ffd2,#00ffd6,#00ffda,#00ffdf,#00ffe3,#00ffe8,#00ffee,#00fff3,#00fffa,#00feff,#00f7ff,#00f0ff,#09e9ff,#2ce1ff,#50daff,#76d2ff,#9ccaff,#c3c2ff,#ebbaff,#ffa4ec,#ff87cd,#ff70b4,#ff5ea0,#ff4f90,#ff4382,#ff3877,#ff2f6d,#ff2764,#ff205d,#ff1a56,#ff1550,#ff104b,#ff0b46,#ff0742,#ff043e,#ff003a,#ff0037,#ff0034,#ff0031,#ff002e,#ff002c,#ff002a,#ff0028,#ff0026,#ff0024,#ff0022,#ff0020,#ff001f,#ff001d,#ff001c,#ff001b,#ff0019,#ff0018,#ff0017,#ff0016)"></i>
<i style="top:150px;background:linear-gradient(90deg,#00ffd4,#00ffd8,#00ffdc,#00ffe1,#00ffe5,#00ffea,#00fff0,#00fff5,#00fffb,#00fcff,#00f6ff,#00efff,#00e8ff,#07e1ff,#2ad9ff,#4dd2ff,#71caff,#96c3ff,#bcbbff,#e3b2ff,#ffa2f4,#ff86d3,#ff6fba,#ff5da6,#ff4e95,#ff4287,#ff377b,#ff2e71,#ff2668,#ff1f60,#ff1959,#ff1453,#ff0f4e,#ff0b49,#ff0744,#ff0340,#ff003c,#ff0039,#ff0036,#ff0033,#ff0030,#ff002e,#ff002b,#ff0029,#ff0027,#ff0025,#ff0024,#ff0022,#ff0020,#ff001f,#ff001d,#ff001c,#ff001b,#ff001a,#ff0018,#ff0017)"></i>
<i style="top:153px;background:linear-gradient(90deg,#00ffda,#00ffdf,#00ffe3,#00ffe7,#00ffec,#00fff1,#00fff7,#00fffd,#00fbff,#00f4ff,#00eeff,#00e7ff,#00e0ff,#06d9ff,#28d2ff,#4acbff,#6dc3ff,#91bbff,#b6b4ff,#dcacff,#ffa1fc,#ff84da,#ff6ec0,#ff5cab,#ff4d9a,#ff418b,#ff367f,#ff2d74,#ff256b,#ff1f63,#ff195c,#ff1356,#ff0e50,#ff0a4b,#ff0647,#ff0242,#ff003f,#ff003b,#ff0038,#ff0035,#ff0032,#ff0030,#ff002d,#ff002b,#ff0029,#ff0027,#ff0025,#ff0023,#ff0022,#ff0020,#ff001f,#ff001d,#ff001c,#ff001b,#ff001a,#ff0018)"></i>
<i style="top:156px;background:linear-gradient(90deg,#00ffe0,#00ffe5,#00ffe9,#00ffee,#00fff3,#00fff9,#00fffe,#00f9ff,#00f3ff,#00edff,#00e6ff,#00e0ff,#00d9ff,#05d2ff,#26cbff,#47c4ff,#69bcff,#8cb5ff,#b0adff,#d5a5ff,#fa9dff,#ff83e1,#ff6dc6,#ff5bb0,#ff4c9f,#ff4090,#ff3583,#ff2c78,#ff256f,#ff1e67,#ff185f,#ff1259,#ff0e53,#ff094e,#ff0549,#ff0245,#ff0041,#ff003d,#ff003a,#ff0037,#ff0034,#ff0031,#ff002f,#ff002d,#ff002a,#ff0028,#ff0027,#ff0025,#ff0023,#ff0022,#ff0020,#ff001f,#ff001d,#ff001c,#ff001b,#ff001a)"></i>
<i style="top:159px;background:linear-gradient(90deg,#00ffe7,#00ffeb,#00fff0,#00fff5,#00fffa,#00feff,#00f8ff,#00f2ff,#00ecff,#00e6ff,#00dfff,#00d9ff,#00d2ff,#04cbff,#24c4ff,#44bdff,#66b6ff,#88aeff,#aba7ff,#ce9fff,#f397ff,#ff82e8,#ff6ccc,#ff5ab6,#ff4ba3,#ff3f94,#ff3487,#ff2b7c,#ff2472,#ff1d6a,#ff1762,#ff125c,#ff0d56,#ff0950,#ff054c,#ff0147,#ff0043,#ff003f,#ff003c,#ff0039,#ff0036,#ff0033,#ff0031,#ff002e,#ff002c,#ff002a,#ff0028,#ff0026,#ff0025,#ff0023,#ff0021,#ff0020,#ff001f,#ff001d,#ff001c,#ff001b)"></i>
<i style="top:162px;background:linear-gradient(90deg,#00ffed,#00fff1,#00fff6,#00fffc,#00fdff,#00f7ff,#00f1ff,#00ebff,#00e5ff,#00dfff,#00d9ff,#00d2ff,#00cbff,#03c5ff,#22beff,#42b7ff,#62b0ff,#83a8ff,#a5a1ff,#c899ff,#ec91ff,#ff81ef,#ff6ad2,#ff58bb,#ff4aa8,#ff3e99,#ff338b,#ff2a80,#ff2376,#ff1c6d,#ff1665,#ff115f,#ff0c58,#ff0853,#ff044e,#ff0049,#ff0045,#ff0041,#ff003e,#ff003b,#ff0038,#ff0035,#ff0032,#ff0030,#ff002e,#ff002c,#ff002a,#ff0028,#ff0026,#ff0024,#ff0023,#ff0021,#ff0020,#ff001e,#ff001d,#ff001c)"></i>
<i style="top:165px;background:linear-gradient(90deg,#00fff3,#00fff8,#00fffd,#00fbff,#00f6ff,#00f0ff,#00eaff,#00e5ff,#00deff,#00d8ff,#00d2ff,#00ccff,#00c5ff,#02beff,#20b8ff,#3fb1ff,#5faaff,#7fa2ff,#a09bff,#c293ff,#e58cff,#ff7ff6,#ff69d8,#ff57c1,#ff49ad,#ff3d9d,#ff328f,#ff2984,#ff2279,#ff1b70,#ff1568,#ff1061,#ff0b5b,#ff0756,#ff0350,#ff004c,#ff0048,#ff0044,#ff0040,#ff003d,#ff003a,#ff0037,#ff0034,#ff0032,#ff002f,#ff002d,#ff002b,#ff0029,#ff0027,#ff0026,#ff0024,#ff0023,#ff0021,#ff0020,#ff001e,#ff001d)"></i>
<i style="top:168px;background:linear-gradient(90deg,#00fff9,#00fffe,#00faff,#00f5ff,#00efff,#00eaff,#00e4ff,#00deff,#00d8ff,#00d2ff,#00ccff,#00c6ff,#00bfff,#01b9ff,#1eb2ff,#3dabff,#5ca4ff,#7b9dff,#9c96ff,#bd8eff,#de87ff,#ff7efd,#ff68df,#ff56c6,#ff48b2,#ff3ca2,#ff3193,#ff2987,#ff217d,#ff1a74,#ff146c,#ff0f64,#ff0b5e,#ff0658,#ff0353,#ff004e,#ff004a,#ff0046,#ff0042,#ff003f,#ff003c,#ff0039,#ff0036,#ff0033,#ff0031,#ff002f,#ff002d,#ff002b,#ff0029,#ff0027,#ff0025,#ff0024,#ff0022,#ff0021,#ff0020,#ff001e)"></i>
<i style="top:171px;background:linear-gradient(90deg,#00feff,#00f9ff,#00f4ff,#00eeff,#00e9ff,#00e3ff,#00deff,#00d8ff,#00d2ff,#00ccff,#00c6ff,#00c0ff,#00b9ff,#00b3ff,#1dacff,#3aa5ff,#599fff,#7798ff,#9790ff,#b789ff,#d882ff,#fa7aff,#ff67e5,#ff55cc,#ff46b7,#ff3aa6,#ff3098,#ff288b,#ff2080,#ff1977,#ff146f,#ff0e67,#ff0a61,#ff065b,#ff0255,#ff0050,#ff004c,#ff0048,#ff0044,#ff0041,#ff003d,#ff003a,#ff0038,#ff0035,#ff0033,#ff0030,#ff002e,#ff002c,#ff002a,#ff0029,#ff0027,#ff0025,#ff0024,#ff0022,#ff0021,#ff0020)"></i>
<i style="top:174px;background:linear-gradient(90deg,#00f8ff,#00f3ff,#00eeff,#00e8ff,#00e3ff,#00ddff,#00d8ff,#00d2ff,#00ccff,#00c6ff,#00c0ff,#00baff,#00b4ff,#00adff,#1ba7ff,#38a0ff,#5699ff,#7493ff,#938bff,#b284ff,#d27dff,#f375ff,#ff65eb,#ff54d1,#ff45bc,#ff39ab,#ff2f9c,#ff278f,#ff1f84,#ff197a,#ff1372,#ff0e6a,#ff0963,#ff055d,#ff0158,#ff0053,#ff004e,#ff004a,#ff0046,#ff0043,#ff003f,#ff003c,#ff0039,#ff0037,#ff0034,#ff0032,#ff0030,#ff002e,#ff002c,#ff002a,#ff0028,#ff0027,#ff0025,#ff0023,#ff0022,#ff0021)"></i>
<i style="top:177px;background:linear-gradient(90deg,#00f2ff,#00edff,#00e8ff,#00e2ff,#00ddff,#00d8ff,#00d2ff,#00ccff,#00c7ff,#00c1ff,#00bbff,#00b5ff,#00afff,#00a8ff,#1aa2ff,#369bff,#5394ff,#708eff,#8e87ff,#ad80ff,#cc78ff,#ec71ff,#ff64f2,#ff52d7,#ff44c1,#ff38af,#ff2ea0,#ff2693,#ff1e88,#ff187e,#ff1275,#ff0d6d,#ff0866,#ff0460,#ff005a,#ff0055,#ff0050,#ff004c,#ff0048,#ff0045,#ff0041,#ff003e,#ff003b,#ff0038,#ff0036,#ff0034,#ff0031,#ff002f,#ff002d,#ff002b,#ff002a,#ff0028,#ff0026,#ff0025,#ff0023,#ff0022)"></i>
<i style="top:180px;background:linear-gradient(90deg,#00ecff,#00e7ff,#00e2ff,#00ddff,#00d7ff,#00d2ff,#00cdff,#00c7ff,#00c1ff,#00bbff,#00b6ff,#00b0ff,#00a9ff,#00a3ff,#189dff,#3496ff,#5090ff,#6d89ff,#8a82ff,#a87bff,#c774ff,#e66dff,#ff63f8,#ff51dd,#ff43c6,#ff37b4,#ff2da4,#ff2597,#ff1d8b,#ff1781,#ff1178,#ff0c70,#ff0769,#ff0363,#ff005d,#ff0058,#ff0053,#ff004e,#ff004a,#ff0047,#ff0043,#ff0040,#ff003d,#ff003a,#ff0038,#ff0035,#ff0033,#ff0031,#ff002f,#ff002d,#ff002b,#ff0029,#ff0028,#ff0026,#ff0025,#ff0023)"></i>
<i style="top:183px;background:linear-gradient(90deg,#00e7ff,#00e2ff,#00ddff,#00d7ff,#00d2ff,#00cdff,#00c7ff,#00c2ff,#00bcff,#00b6ff,#00b1ff,#00abff,#00a5ff,#009eff,#1798ff,#3292ff,#4e8bff,#6a85ff,#877eff,#a477ff,#c270ff,#e069ff,#ff61ff,#ff50e2,#ff42cc,#ff36b9,#ff2ca8,#ff249b,#ff1c8f,#ff1684,#ff107b,#ff0b73,#ff076c,#ff0365,#ff005f,#ff005a,#ff0055,#ff0051,#ff004c,#ff0049,#ff0045,#ff0042,#ff003f,#ff003c,#ff0039,#ff0037,#ff0034,#ff0032,#ff0030,#ff002e,#ff002c,#ff002b,#ff0029,#ff0027,#ff0026,#ff0024)"></i>
<i style="top:186px;background:linear-gradient(90deg,#00e1ff,#00dcff,#00d7ff,#00d2ff,#00cdff,#00c8ff,#00c2ff,#00bdff,#00b7ff,#00b1ff,#00acff,#00a6ff,#00a0ff,#009aff,#1594ff,#308dff,#4b87ff,#6780ff,#837aff,#a073ff,#bd6cff,#db65ff,#f95eff,#ff4fe8,#ff41d1,#ff35bd,#ff2bad,#ff239f,#ff1b92,#ff1588,#ff0f7e,#ff0a76,#ff066f,#ff0268,#ff0062,#ff005c,#ff0057,#ff0053,#ff004e,#ff004b,#ff0047,#ff0044,#ff0040,#ff003e,#ff003b,#ff0038,#ff0036,#ff0034,#ff0032,#ff0030,#ff002e,#ff002c,#ff002a,#ff0029,#ff0027,#ff0026)"></i>
<i style="top:189px;background:linear-gradient(90deg,#00dcff,#00d7ff,#00d2ff,#00cdff,#00c8ff,#00c3ff,#00bdff,#00b8ff,#00b2ff,#00adff,#00a7ff,#00a1ff,#009bff,#0095ff,#148fff,#2e89ff,#4983ff,#647cff,#7f76ff,#9c6fff,#b868ff,#d561ff,#f35aff,#ff4dee,#ff3fd6,#ff34c2,#ff2ab1,#ff22a3,#ff1a96,#ff148b,#ff0e82,#ff0a79,#ff0571,#ff016a,#ff0064,#ff005f,#ff005a,#ff0055,#ff0051,#ff004d,#ff0049,#ff0045,#ff0042,#ff003f,#ff003d,#ff003a,#ff0037,#ff0035,#ff0033,#ff0031,#ff002f,#ff002d,#ff002b,#ff002a,#ff0028,#ff0027)"></i>
<i style="top:192px;background:linear-gradient(90deg,#00d7ff,#00d2ff,#00cdff,#00c8ff,#00c3ff,#00beff,#00b9ff,#00b3ff,#00aeff,#00a8ff,#00a3ff,#009dff,#0097ff,#0091ff,#138bff,#2d85ff,#477fff,#6178ff,#7c72ff,#986bff,#b465ff,#d05eff,#ed57ff,#ff4cf4,#ff3edb,#ff33c7,#ff29b5,#ff21a6,#ff199a,#ff138f,#ff0e85,#ff097c,#ff0474,#ff006d,#ff0067,#ff0061,#ff005c,#ff0057,#ff0053,#ff004f,#ff004b,#ff0047,#ff0044,#ff0041,#ff003e,#ff003c,#ff0039,#ff0037,#ff0034,#ff0032,#ff0030,#ff002f,#ff002d,#ff002b,#ff0029,#ff0028)"></i>
<i style="top:195px;background:linear-gradient(90deg,#00d2ff,#00cdff,#00c8ff,#00c3ff,#00beff,#00b9ff,#00b4ff,#00afff,#00a9ff,#00a4ff,#009eff,#0099ff,#0093ff,#008dff,#1287ff,#2b81ff,#447bff,#5e75ff,#796eff,#9468ff,#af61ff,#cb5aff,#e753ff,#ff4bfa,#ff3de0,#ff32cb,#ff28ba,#ff20aa,#ff199d,#ff1292,#ff0d88,#ff087f,#ff0477,#ff0070,#ff0069,#ff0063,#ff005e,#ff0059,#ff0055,#ff0051,#ff004d,#ff0049,#ff0046,#ff0043,#ff0040,#ff003d,#ff003b,#ff0038,#ff0036,#ff0034,#ff0032,#ff0030,#ff002e,#ff002c,#ff002b,#ff0029)"></i>
<i style="top:198px;background:linear-gradient(90deg,#00cdff,#00c9ff,#00c4ff,#00bfff,#00baff,#00b5ff,#00b0ff,#00aaff,#00a5ff,#00a0ff,#009aff,#0094ff,#008fff,#0089ff,#1183ff,#297dff,#4277ff,#5c71ff,#766bff,#9064ff,#ab5eff,#c657ff,#e250ff,#fe49ff,#ff3ce6,#ff30d0,#ff27be,#ff1fae,#ff18a1,#ff1195,#ff0c8b,#ff0782,#ff037a,#ff0073,#ff006c,#ff0066,#ff0060,#ff005b,#ff0057,#ff0053,#ff004f,#ff004b,#ff0048,#ff0044,#ff0041,#ff003f,#ff003c,#ff003a,#ff0037,#ff0035,#ff0033,#ff0031,#ff002f,#ff002e,#ff002c,#ff002a)"></i>
<i style="top:201px;background:linear-gradient(90deg,#00c9ff,#00c4ff,#00bfff,#00baff,#00b5ff,#00b0ff,#00abff,#00a6ff,#00a1ff,#009bff,#0096ff,#0090ff,#008bff,#0085ff,#107fff,#2879ff,#4073ff,#596dff,#7367ff,#8d61ff,#a75aff,#c254ff,#dd4dff,#f947ff,#ff3beb,#ff2fd5,#ff26c2,#ff1eb2,#ff17a5,#ff1099,#ff0b8e,#ff0685,#ff027d,#ff0075,#ff006e,#ff0068,#ff0063,#ff005e,#ff0059,#ff0055,#ff0051,#ff004d,#ff0049,#ff0046,#ff0043,#ff0040,#ff003e,#ff003b,#ff0039,#ff0037,#ff0035,#ff0033,#ff0031,#ff002f,#ff002d,#ff002c)"></i>
<i style="top:204px;background:linear-gradient(90deg,#00c4ff,#00c0ff,#00bbff,#00b6ff,#00b1ff,#00acff,#00a7ff,#00a2ff,#009dff,#0097ff,#0092ff,#008dff,#0087ff,#0081ff,#0e7cff,#2676ff,#3e70ff,#576aff,#7064ff,#895eff,#a357ff,#bd51ff,#d84aff,#f344ff,#ff39f0,#ff2eda,#ff25c7,#ff1db7,#ff16a8,#ff109c,#ff0a92,#ff0588,#ff0180,#ff0078,#ff0071,#ff006b,#ff0065,#ff0060,#ff005b,#ff0057,#ff0053,#ff004f,#ff004b,#ff0048,#ff0045,#ff0042,#ff003f,#ff003d,#ff003a,#ff0038,#ff0036,#ff0034,#ff0032,#ff0030,#ff002e,#ff002d)"></i>
<i style="top:207px;background:linear-gradient(90deg,#00c0ff,#00bbff,#00b7ff,#00b2ff,#00adff,#00a8ff,#00a3ff,#009eff,#0099ff,#0094ff,#008eff,#0089ff,#0083ff,#007eff,#0d78ff,#2572ff,#3c6dff,#5567ff,#6d61ff,#865bff,#9f54ff,#b94eff,#d348ff,#ee41ff,#ff38f6,#ff2ddf,#ff24cb,#ff1cbb,#ff15ac,#ff0fa0,#ff0995,#ff058b,#ff0082,#ff007b,#ff0074,#ff006d,#ff0067,#ff0062,#ff005d,#ff0059,#ff0054,#ff0051,#ff004d,#ff004a,#ff0047,#ff0044,#ff0041,#ff003e,#ff003c,#ff0039,#ff0037,#ff0035,#ff0033,#ff0031,#ff0030,#ff002e)"></i>
<i style="top:210px;background:linear-gradient(90deg,#00bcff,#00b7ff,#00b3ff,#00aeff,#00a9ff,#00a4ff,#009fff,#009aff,#0095ff,#0090ff,#008bff,#0085ff,#0080ff,#007aff,#0c75ff,#236fff,#3b69ff,#5264ff,#6a5eff,#8358ff,#9c51ff,#b54bff,#ce45ff,#e83eff,#ff37fb,#ff2ce3,#ff23d0,#ff1bbf,#ff14b0,#ff0ea3,#ff0898,#ff048e,#ff0085,#ff007d,#ff0076,#ff0070,#ff006a,#ff0064,#ff005f,#ff005b,#ff0056,#ff0052,#ff004f,#ff004b,#ff0048,#ff0045,#ff0042,#ff0040,#ff003d,#ff003b,#ff0039,#ff0037,#ff0035,#ff0033,#ff0031,#ff002f)"></i>
<i style="top:213px;background:linear-gradient(90deg,#00b8ff,#00b3ff,#00afff,#00aaff,#00a5ff,#00a0ff,#009cff,#0097ff,#0091ff,#008cff,#0087ff,#0082ff,#007dff,#0077ff,#0b72ff,#226cff,#3966ff,#5061ff,#685bff,#8055ff,#984fff,#b148ff,#ca42ff,#e33cff,#fd35ff,#ff2be8,#ff21d4,#ff1ac3,#ff13b4,#ff0da7,#ff089b,#ff0391,#ff0088,#ff0080,#ff0079,#ff0072,#ff006c,#ff0066,#ff0061,#ff005d,#ff0058,#ff0054,#ff0051,#ff004d,#ff004a,#ff0047,#ff0044,#ff0041,#ff003f,#ff003c,#ff003a,#ff0038,#ff0036,#ff0034,#ff0032,#ff0030)"></i>
<i style="top:216px;background:linear-gradient(90deg,#00b4ff,#00b0ff,#00abff,#00a6ff,#00a2ff,#009dff,#0098ff,#0093ff,#008eff,#0089ff,#0084ff,#007fff,#0079ff,#0074ff,#0b6eff,#2169ff,#3763ff,#4e5eff,#6558ff,#7d52ff,#954cff,#ad46ff,#c640ff,#df39ff,#f833ff,#ff2aed,#ff20d9,#ff18c7,#ff12b8,#ff0caa,#ff079f,#ff0294,#ff008b,#ff0083,#ff007b,#ff0075,#ff006e,#ff0069,#ff0064,#ff005f,#ff005a,#ff0056,#ff0052,#ff004f,#ff004c,#ff0048,#ff0046,#ff0043,#ff0040,#ff003e,#ff003b,#ff0039,#ff0037,#ff0035,#ff0033,#ff0032)"></i>
<i style="top:219px;background:linear-gradient(90deg,#00b0ff,#00acff,#00a7ff,#00a3ff,#009eff,#0099ff,#0094ff,#0090ff,#008bff,#0086ff,#0080ff,#007bff,#0076ff,#0071ff,#0a6bff,#1f66ff,#3660ff,#4c5bff,#6355ff,#7a4fff,#9149ff,#a943ff,#c13dff,#da37ff,#f331ff,#ff28f2,#ff1fdd,#ff17cb,#ff11bb,#ff0bae,#ff06a2,#ff0197,#ff008e,#ff0086,#ff007e,#ff0077,#ff0071,#ff006b,#ff0066,#ff0061,#ff005c,#ff0058,#ff0054,#ff0051,#ff004d,#ff004a,#ff0047,#ff0044,#ff0042,#ff003f,#ff003d,#ff003b,#ff0039,#ff0037,#ff0035,#ff0033)"></i>
<i style="top:222px;background:linear-gradient(90deg,#00adff,#00a8ff,#00a4ff,#009fff,#009aff,#0096ff,#0091ff,#008cff,#0087ff,#0082ff,#007dff,#0078ff,#0073ff,#006eff,#0968ff,#1e63ff,#345eff,#4a58ff,#6052ff,#774dff,#8e47ff,#a641ff,#bd3bff,#d535ff,#ee2fff,#ff27f7,#ff1ee2,#ff16cf,#ff10bf,#ff0ab1,#ff05a5,#ff009a,#ff0091,#ff0088,#ff0081,#ff0079,#ff0073,#ff006d,#ff0068,#ff0063,#ff005e,#ff005a,#ff0056,#ff0052,#ff004f,#ff004c,#ff0049,#ff0046,#ff0043,#ff0041,#ff003e,#ff003c,#ff003a,#ff0038,#ff0036,#ff0034)"></i>
<i style="top:225px;background:linear-gradient(90deg,#00a9ff,#00a5ff,#00a0ff,#009cff,#0097ff,#0092ff,#008eff,#0089ff,#0084ff,#007fff,#007aff,#0075ff,#0070ff,#006bff,#0866ff,#1d60ff,#325bff,#4855ff,#5e50ff,#744aff,#8b44ff,#a23fff,#b939ff,#d133ff,#e92dff,#ff26fc,#ff1de6,#ff15d3,#ff0fc3,#ff09b5,#ff04a9,#ff009e,#ff0094,#ff008b,#ff0083,#ff007c,#ff0075,#ff006f,#ff006a,#ff0065,#ff0060,#ff005c,#ff0058,#ff0054,#ff0051,#ff004d,#ff004a,#ff0047,#ff0045,#ff0042,#ff0040,#ff003d,#ff003b,#ff0039,#ff0037,#ff0035)"></i>
<i style="top:228px;background:linear-gradient(90deg,#00a6ff,#00a1ff,#009dff,#0098ff,#0094ff,#008fff,#008aff,#0086ff,#0081ff,#007cff,#0077ff,#0072ff,#006dff,#0068ff,#0763ff,#1c5eff,#3158ff,#4653ff,#5c4dff,#7248ff,#8842ff,#9f3cff,#b636ff,#cd31ff,#e52bff,#fd24ff,#ff1ceb,#ff14d8,#ff0ec7,#ff08b9,#ff03ac,#ff00a1,#ff0097,#ff008e,#ff0086,#ff007e,#ff0078,#ff0072,#ff006c,#ff0067,#ff0062,#ff005e,#ff005a,#ff0056,#ff0052,#ff004f,#ff004c,#ff0049,#ff0046,#ff0044,#ff0041,#ff003f,#ff003d,#ff003a,#ff0038,#ff0037)"></i>
<i style="top:231px;background:linear-gradient(90deg,#00a2ff,#009eff,#0099ff,#0095ff,#0090ff,#008cff,#0087ff,#0083ff,#007eff,#0079ff,#0074ff,#006fff,#006aff,#0065ff,#0660ff,#1b5bff,#2f56ff,#4450ff,#5a4bff,#6f45ff,#8540ff,#9b3aff,#b234ff,#c92fff,#e029ff,#f823ff,#ff1bef,#ff13dc,#ff0dcb,#ff07bc,#ff02af,#ff00a4,#ff009a,#ff0091,#ff0088,#ff0081,#ff007a,#ff0074,#ff006e,#ff0069,#ff0064,#ff0060,#ff005c,#ff0058,#ff0054,#ff0051,#ff004d,#ff004a,#ff0048,#ff0045,#ff0043,#ff0040,#ff003e,#ff003c,#ff003a,#ff0038)"></i>
<i style="top:234px;background:linear-gradient(90deg,#009fff,#009bff,#0096ff,#0092ff,#008dff,#0089ff,#0084ff,#0080ff,#007bff,#0076ff,#0071ff,#006dff,#0068ff,#0063ff,#065eff,#1a58ff,#2e53ff,#434eff,#5849ff,#6d43ff,#823eff,#9838ff,#af32ff,#c52dff,#dc27ff,#f321ff,#ff1af4,#ff12e0,#ff0ccf,#ff06c0,#ff01b3,#ff00a7,#ff009d,#ff0093,#ff008b,#ff0083,#ff007d,#ff0076,#ff0070,#ff006b,#ff0066,#ff0062,#ff005d,#ff0059,#ff0056,#ff0052,#ff004f,#ff004c,#ff0049,#ff0046,#ff0044,#ff0042,#ff003f,#ff003d,#ff003b,#ff0039)"></i>
<i style="top:237px;background:linear-gradient(90deg,#009cff,#0097ff,#0093ff,#008fff,#008aff,#0086ff,#0081ff,#007dff,#0078ff,#0073ff,#006fff,#006aff,#0065ff,#0060ff,#055bff,#1956ff,#2d51ff,#414cff,#5646ff,#6b41ff,#803bff,#9536ff,#ab30ff,#c12bff,#d825ff,#ee1fff,#ff18f9,#ff11e4,#ff0bd3,#ff05c3,#ff00b6,#ff00aa,#ff00a0,#ff0096,#ff008e,#ff0086,#ff007f,#ff0079,#ff0073,#ff006d,#ff0068,#ff0064,#ff005f,#ff005b,#ff0057,#ff0054,#ff0051,#ff004e,#ff004b,#ff0048,#ff0045,#ff0043,#ff0041,#ff003e,#ff003c,#ff003a)"></i>
<i style="top:240px;background:linear-gradient(90deg,#0099ff,#0094ff,#0090ff,#008cff,#0087ff,#0083ff,#007eff,#007aff,#0075ff,#0071ff,#006cff,#0067ff,#0062ff,#005dff,#0459ff,#1854ff,#2b4eff,#3f49ff,#5444ff,#683fff,#7d39ff,#9234ff,#a82eff,#be29ff,#d423ff,#ea1dff,#ff17fd,#ff10e9,#ff0ad7,#ff04c7,#ff00b9,#ff00ad,#ff00a3,#ff0099,#ff0090,#ff0088,#ff0081,#ff007b,#ff0075,#ff006f,#ff006a,#ff0065,#ff0061,#ff005d,#ff0059,#ff0056,#ff0052,#ff004f,#ff004c,#ff0049,#ff0047,#ff0044,#ff0042,#ff0040,#ff003e,#ff003b)"></i>
<i style="top:243px;background:linear-gradient(90deg,#0096ff,#0091ff,#008dff,#0089ff,#0085ff,#0080ff,#007cff,#0077ff,#0073ff,#006eff,#0069ff,#0065ff,#0060ff,#005bff,#0356ff,#1751ff,#2a4cff,#3e47ff,#5242ff,#663dff,#7b37ff,#8f32ff,#a52cff,#ba27ff,#d021ff,#e61cff,#fc16ff,#ff0fed,#ff09db,#ff03cb,#ff00bd,#ff00b1,#ff00a6,#ff009c,#ff0093,#ff008b,#ff0084,#ff007d,#ff0077,#ff0071,#ff006c,#ff0067,#ff0063,#ff005f,#ff005b,#ff0057,#ff0054,#ff0051,#ff004e,#ff004b,#ff0048,#ff0046,#ff0043,#ff0041,#ff003f,#ff003d)"></i>
<i style="top:246px;background:linear-gradient(90deg,#0093ff,#008eff,#008aff,#0086ff,#0082ff,#007dff,#0079ff,#0075ff,#0070ff,#006bff,#0067ff,#0062ff,#005dff,#0059ff,#0354ff,#164fff,#294aff,#3c45ff,#5040ff,#643bff,#7835ff,#8d30ff,#a12bff,#b625ff,#cc20ff,#e11aff,#f714ff,#ff0ef1,#ff08df,#ff02ce,#ff00c0,#ff00b4,#ff00a9,#ff009f,#ff0096,#ff008e,#ff0086,#ff007f,#ff0079,#ff0073,#ff006e,#ff0069,#ff0065,#ff0061,#ff005d,#ff0059,#ff0056,#ff0052,#ff004f,#ff004c,#ff004a,#ff0047,#ff0045,#ff0042,#ff0040,#ff003e)"></i>
<i style="top:249px;background:linear-gradient(90deg,#0090ff,#008cff,#0087ff,#0083ff,#007fff,#007bff,#0076ff,#0072ff,#006eff,#0069ff,#0064ff,#0060ff,#005bff,#0056ff,#0252ff,#154dff,#2848ff,#3b43ff,#4e3eff,#6239ff,#7633ff,#8a2eff,#9e29ff,#b323ff,#c81eff,#dd18ff,#f313ff,#ff0df6,#ff07e3,#ff01d2,#ff00c4,#ff00b7,#ff00ac,#ff00a1,#ff0098,#ff0090,#ff0089,#ff0082,#ff007b,#ff0076,#ff0070,#ff006b,#ff0067,#ff0062,#ff005e,#ff005b,#ff0057,#ff0054,#ff0051,#ff004e,#ff004b,#ff0048,#ff0046,#ff0044,#ff0041,#ff003f)"></i>
<i style="top:252px;background:linear-gradient(90deg,#008dff,#0089ff,#0085ff,#0081ff,#007cff,#0078ff,#0074ff,#006fff,#006bff,#0067ff,#0062ff,#005dff,#0059ff,#0054ff,#014fff,#144bff,#2746ff,#3941ff,#4d3cff,#6037ff,#7332ff,#872cff,#9b27ff,#b022ff,#c51cff,#d917ff,#ef11ff,#ff0cfa,#ff06e7,#ff00d6,#ff00c7,#ff00ba,#ff00af,#ff00a4,#ff009b,#ff0093,#ff008b,#ff0084,#ff007e,#ff0078,#ff0072,#ff006d,#ff0069,#ff0064,#ff0060,#ff005c,#ff0059,#ff0055,#ff0052,#ff004f,#ff004c,#ff004a,#ff0047,#ff0045,#ff0043,#ff0040)"></i>
<i style="top:255px;background:linear-gradient(90deg,#008aff,#0086ff,#0082ff,#007eff,#007aff,#0076ff,#0071ff,#006dff,#0069ff,#0064ff,#0060ff,#005bff,#0057ff,#0052ff,#014dff,#1349ff,#2544ff,#383fff,#4b3aff,#5e35ff,#7130ff,#852bff,#9925ff,#ad20ff,#c11bff,#d616ff,#eb10ff,#ff0afe,#ff04eb,#ff00da,#ff00cb,#ff00bd,#ff00b2,#ff00a7,#ff009e,#ff0095,#ff008d,#ff0086,#ff0080,#ff007a,#ff0074,#ff006f,#ff006a,#ff0066,#ff0062,#ff005e,#ff005a,#ff0057,#ff0054,#ff0051,#ff004e,#ff004b,#ff0049,#ff0046,#ff0044,#ff0042)"></i>
<i style="top:258px;background:linear-gradient(90deg,#0088ff,#0084ff,#007fff,#007bff,#0077ff,#0073ff,#006fff,#006bff,#0066ff,#0062ff,#005dff,#0059ff,#0054ff,#0050ff,#004bff,#1246ff,#2442ff,#373dff,#4938ff,#5c33ff,#6f2eff,#8229ff,#9624ff,#aa1fff,#be19ff,#d214ff,#e70fff,#fb09ff,#ff03ef,#ff00dd,#ff00ce,#ff00c1,#ff00b5,#ff00aa,#ff00a0,#ff0098,#ff0090,#ff0089,#ff0082,#ff007c,#ff0076,#ff0071,#ff006c,#ff0068,#ff0064,#ff0060,#ff005c,#ff0059,#ff0055,#ff0052,#ff004f,#ff004d,#ff004a,#ff0047,#ff0045,#ff0043)"></i>
<i style="top:261px;background:linear-gradient(90deg,#0085ff,#0081ff,#007dff,#0079ff,#0075ff,#0071ff,#006cff,#0068ff,#0064ff,#0060ff,#005bff,#0057ff,#0052ff,#004eff,#0049ff,#1145ff,#2340ff,#353bff,#4836ff,#5a31ff,#6d2cff,#8027ff,#9322ff,#a71dff,#ba18ff,#ce13ff,#e30dff,#f708ff,#ff02f3,#ff00e1,#ff00d2,#ff00c4,#ff00b8,#ff00ad,#ff00a3,#ff009a,#ff0092,#ff008b,#ff0084,#ff007e,#ff0078,#ff0073,#ff006e,#ff006a,#ff0065,#ff0061,#ff005e,#ff005a,#ff0057,#ff0054,#ff0051,#ff004e,#ff004b,#ff0049,#ff0046,#ff0044)"></i>
<i style="top:264px;background:linear-gradient(90deg,#0082ff,#007eff,#007aff,#0076ff,#0072ff,#006eff,#006aff,#0066ff,#0062ff,#005dff,#0059ff,#0055ff,#0050ff,#004cff,#0047ff,#1143ff,#223eff,#3439ff,#4634ff,#5830ff,#6b2bff,#7e26ff,#9121ff,#a41cff,#b717ff,#cb11ff,#df0cff,#f307ff,#ff01f7,#ff00e5,#ff00d5,#ff00c7,#ff00bb,#ff00b0,#ff00a6,#ff009d,#ff0095,#ff008d,#ff0086,#ff0080,#ff007a,#ff0075,#ff0070,#ff006b,#ff0067,#ff0063,#ff005f,#ff005c,#ff0058,#ff0055,#ff0052,#ff004f,#ff004d,#ff004a,#ff0048,#ff0045)"></i>
<i style="top:267px;background:linear-gradient(90deg,#0080ff,#007cff,#0078ff,#0074ff,#0070ff,#006cff,#0068ff,#0064ff,#0060ff,#005bff,#0057ff,#0053ff,#004eff,#004aff,#0045ff,#1041ff,#213cff,#3337ff,#4533ff,#572eff,#6929ff,#7b24ff,#8e1fff,#a11aff,#b415ff,#c710ff,#db0bff,#ef06ff,#ff00fb,#ff00e9,#ff00d9,#ff00ca,#ff00be,#ff00b3,#ff00a9,#ff00a0,#ff0097,#ff0090,#ff0089,#ff0082,#ff007c,#ff0077,#ff0072,#ff006d,#ff0069,#ff0065,#ff0061,#ff005d,#ff005a,#ff0057,#ff0054,#ff0051,#ff004e,#ff004b,#ff0049,#ff0047)"></i>
<i style="top:270px;background:linear-gradient(90deg,#007dff,#007aff,#0076ff,#0072ff,#006eff,#006aff,#0066ff,#0062ff,#005dff,#0059ff,#0055ff,#0051ff,#004cff,#0048ff,#0043ff,#0f3fff,#203aff,#3136ff,#4331ff,#552cff,#6728ff,#7923ff,#8b1eff,#9e19ff,#b114ff,#c40fff,#d70aff,#eb04ff,#ff00ff,#ff00ec,#ff00dc,#ff00ce,#ff00c1,#ff00b6,#ff00ab,#ff00a2,#ff009a,#ff0092,#ff008b,#ff0084,#ff007f,#ff0079,#ff0074,#ff006f,#ff006b,#ff0066,#ff0063,#ff005f,#ff005b,#ff0058,#ff0055,#ff0052,#ff004f,#ff004d,#ff004a,#ff0048)"></i>
<i style="top:273px;background:linear-gradient(90deg,#007bff,#0077ff,#0073ff,#0070ff,#006cff,#0068ff,#0064ff,#005fff,#005bff,#0057ff,#0053ff,#004fff,#004aff,#0046ff,#0042ff,#0e3dff,#1f39ff,#3034ff,#422fff,#532bff,#6526ff,#7721ff,#891cff,#9b18ff,#ae13ff,#c10eff,#d408ff,#e703ff,#fb00ff,#ff00f0,#ff00e0,#ff00d1,#ff00c4,#ff00b9,#ff00ae,#ff00a5,#ff009c,#ff0094,#ff008d,#ff0087,#ff0081,#ff007b,#ff0076,#ff0071,#ff006c,#ff0068,#ff0064,#ff0060,#ff005d,#ff005a,#ff0057,#ff0054,#ff0051,#ff004e,#ff004c,#ff0049)"></i>
<i style="top:276px;background:linear-gradient(90deg,#0079ff,#0075ff,#0071ff,#006dff,#0069ff,#0065ff,#0061ff,#005dff,#0059ff,#0055ff,#0051ff,#004dff,#0049ff,#0044ff,#0040ff,#0d3bff,#1e37ff,#2f32ff,#402eff,#5229ff,#6325ff,#7520ff,#871bff,#9916ff,#ab11ff,#be0cff,#d107ff,#e402ff,#f700ff,#ff00f4,#ff00e3,#ff00d4,#ff00c7,#ff00bb,#ff00b1,#ff00a7,#ff009f,#ff0097,#ff008f,#ff0089,#ff0083,#ff007d,#ff0078,#ff0073,#ff006e,#ff006a,#ff0066,#ff0062,#ff005e,#ff005b,#ff0058,#ff0055,#ff0052,#ff004f,#ff004d,#ff004a)"></i>
<i style="top:279px;background:linear-gradient(90deg,#0077ff,#0073ff,#006fff,#006bff,#0067ff,#0063ff,#005fff,#005bff,#0057ff,#0053ff,#004fff,#004bff,#0047ff,#0042ff,#003eff,#0d3aff,#1d35ff,#2e31ff,#3f2cff,#5028ff,#6123ff,#731eff,#841aff,#9615ff,#a810ff,#bb0bff,#cd06ff,#e001ff,#f300ff,#ff00f8,#ff00e7,#ff00d8,#ff00ca,#ff00be,#ff00b4,#ff00aa,#ff00a1,#ff0099,#ff0092,#ff008b,#ff0085,#ff007f,#ff007a,#ff0075,#ff0070,#ff006c,#ff0067,#ff0064,#ff0060,#ff005d,#ff0059,#ff0056,#ff0053,#ff0051,#ff004e,#ff004c)"></i>
<i style="top:282px;background:linear-gradient(90deg,#0074ff,#0071ff,#006dff,#0069ff,#0065ff,#0061ff,#005dff,#0059ff,#0055ff,#0051ff,#004dff,#0049ff,#0045ff,#0041ff,#003cff,#0c38ff,#1c34ff,#2d2fff,#3e2bff,#4e26ff,#5f22ff,#711dff,#8218ff,#9414ff,#a60fff,#b80aff,#ca05ff,#dd00ff,#ef00ff,#ff00fc,#ff00ea,#ff00db,#ff00ce,#ff00c1,#ff00b6,#ff00ad,#ff00a4,#ff009b,#ff0094,#ff008d,#ff0087,#ff0081,#ff007b,#ff0076,#ff0072,#ff006d,#ff0069,#ff0065,#ff0062,#ff005e,#ff005b,#ff0058,#ff0055,#ff0052,#ff004f,#ff004d)"></i>
<i style="top:285px;background:linear-gradient(90deg,#0072ff,#006eff,#006bff,#0067ff,#0063ff,#005fff,#005bff,#0057ff,#0054ff,#004fff,#004bff,#0047ff,#0043ff,#003fff,#003bff,#0b36ff,#1b32ff,#2c2eff,#3c29ff,#4d25ff,#5e20ff,#6f1cff,#8017ff,#9112ff,#a30eff,#b509ff,#c704ff,#d900ff,#ec00ff,#fe00ff,#ff00ee,#ff00df,#ff00d1,#ff00c4,#ff00b9,#ff00af,#ff00a6,#ff009e,#ff0096,#ff008f,#ff0089,#ff0083,#ff007d,#ff0078,#ff0073,#ff006f,#ff006b,#ff0067,#ff0063,#ff0060,#ff005c,#ff0059,#ff0056,#ff0053,#ff0051,#ff004e)"></i>
<i style="top:288px;background:linear-gradient(90deg,#0070ff,#006cff,#0069ff,#0065ff,#0061ff,#005dff,#005aff,#0056ff,#0052ff,#004eff,#004aff,#0046ff,#0041ff,#003dff,#0039ff,#0b35ff,#1b31ff,#2b2cff,#3b28ff,#4b23ff,#5c1fff,#6d1aff,#7e16ff,#8f11ff,#a00dff,#b208ff,#c403ff,#d600ff,#e800ff,#fa00ff,#ff00f2,#ff00e2,#ff00d4,#ff00c7,#ff00bc,#ff00b2,#ff00a9,#ff00a0,#ff0099,#ff0091,#ff008b,#ff0085,#ff007f,#ff007a,#ff0075,#ff0071,#ff006c,#ff0068,#ff0065,#ff0061,#ff005e,#ff005b,#ff0058,#ff0055,#ff0052,#ff0050)"></i>
<i style="top:291px;background:linear-gradient(90deg,#006eff,#006aff,#0067ff,#0063ff,#005fff,#005bff,#0058ff,#0054ff,#0050ff,#004cff,#0048ff,#0044ff,#0040ff,#003cff,#0038ff,#0a33ff,#1a2fff,#2a2bff,#3a26ff,#4a22ff,#5a1eff,#6b19ff,#7c15ff,#8d10ff,#9e0bff,#af07ff,#c102ff,#d300ff,#e500ff,#f700ff,#ff00f5,#ff00e5,#ff00d7,#ff00ca,#ff00bf,#ff00b5,#ff00ab,#ff00a3,#ff009b,#ff0094,#ff008d,#ff0087,#ff0081,#ff007c,#ff0077,#ff0072,#ff006e,#ff006a,#ff0066,#ff0063,#ff005f,#ff005c,#ff0059,#ff0056,#ff0053,#ff0051)"></i>
<i style="top:294px;background:linear-gradient(90deg,#006cff,#0068ff,#0065ff,#0061ff,#005dff,#005aff,#0056ff,#0052ff,#004eff,#004aff,#0046ff,#0042ff,#003eff,#003aff,#0036ff,#0932ff,#192eff,#2929ff,#3925ff,#4921ff,#591cff,#6918ff,#7a13ff,#8b0fff,#9b0aff,#ad06ff,#be01ff,#cf00ff,#e100ff,#f300ff,#ff00f9,#ff00e9,#ff00da,#ff00cd,#ff00c2,#ff00b7,#ff00ae,#ff00a5,#ff009d,#ff0096,#ff008f,#ff0089,#ff0083,#ff007e,#ff0079,#ff0074,#ff0070,#ff006c,#ff0068,#ff0064,#ff0061,#ff005d,#ff005a,#ff0057,#ff0055,#ff0052)"></i>
<i style="top:297px;background:linear-gradient(90deg,#006aff,#0066ff,#0063ff,#005fff,#005cff,#0058ff,#0054ff,#0050ff,#004cff,#0049ff,#0045ff,#0041ff,#003dff,#0039ff,#0035ff,#0930ff,#182cff,#2828ff,#3724ff,#471fff,#571bff,#6717ff,#7812ff,#880eff,#9909ff,#aa05ff,#bb00ff,#cc00ff,#de00ff,#ef00ff,#ff00fd,#ff00ec,#ff00dd,#ff00d0,#ff00c5,#ff00ba,#ff00b0,#ff00a7,#ff009f,#ff0098,#ff0091,#ff008b,#ff0085,#ff0080,#ff007b,#ff0076,#ff0071,#ff006d,#ff0069,#ff0066,#ff0062,#ff005f,#ff005c,#ff0059,#ff0056,#ff0053)"></i>
<i style="top:300px;background:linear-gradient(90deg,#0068ff,#0065ff,#0061ff,#005dff,#005aff,#0056ff,#0052ff,#004fff,#004bff,#0047ff,#0043ff,#003fff,#003bff,#0037ff,#0033ff,#082fff,#172bff,#2727ff,#3622ff,#461eff,#561aff,#6616ff,#7611ff,#860dff,#9708ff,#a704ff,#b800ff,#c900ff,#db00ff,#ec00ff,#fe00ff,#ff00f0,#ff00e1,#ff00d3,#ff00c7,#ff00bd,#ff00b3,#ff00aa,#ff00a2,#ff009a,#ff0093,#ff008d,#ff0087,#ff0082,#ff007c,#ff0078,#ff0073,#ff006f,#ff006b,#ff0067,#ff0064,#ff0060,#ff005d,#ff005a,#ff0057,#ff0055)"></i>
<i style="top:303px;background:linear-gradient(90deg,#0066ff,#0063ff,#005fff,#005cff,#0058ff,#0054ff,#0051ff,#004dff,#0049ff,#0045ff,#0041ff,#003eff,#003aff,#0036ff,#0032ff,#082eff,#172aff,#2625ff,#3521ff,#451dff,#5419ff,#6414ff,#7410ff,#840cff,#9407ff,#a503ff,#b600ff,#c600ff,#d700ff,#e900ff,#fa00ff,#ff00f3,#ff00e4,#ff00d6,#ff00ca,#ff00bf,#ff00b5,#ff00ac,#ff00a4,#ff009c,#ff0095,#ff008f,#ff0089,#ff0083,#ff007e,#ff0079,#ff0075,#ff0070,#ff006c,#ff0069,#ff0065,#ff0062,#ff005f,#ff005c,#ff0059,#ff0056)"></i>
<i style="top:306px;background:linear-gradient(90deg,#0064ff,#0061ff,#005dff,#005aff,#0056ff,#0053ff,#004fff,#004bff,#0047ff,#0044ff,#0040ff,#003cff,#0038ff,#0034ff,#0030ff,#072cff,#1628ff,#2524ff,#3420ff,#431cff,#5318ff,#6213ff,#720fff,#820bff,#9206ff,#a202ff,#b300ff,#c400ff,#d400ff,#e500ff,#f600ff,#ff00f6,#ff00e7,#ff00d9,#ff00cd,#ff00c2,#ff00b8,#ff00af,#ff00a6,#ff009f,#ff0098,#ff0091,#ff008b,#ff0085,#ff0080,#ff007b,#ff0076,#ff0072,#ff006e,#ff006a,#ff0067,#ff0063,#ff0060,#ff005d,#ff005a,#ff0057)"></i>
<i style="top:309px;background:linear-gradient(90deg,#0063ff,#005fff,#005cff,#0058ff,#0054ff,#0051ff,#004dff,#004aff,#0046ff,#0042ff,#003eff,#003bff,#0037ff,#0033ff,#002fff,#062bff,#1527ff,#2423ff,#331fff,#421bff,#5116ff,#6112ff,#700eff,#800aff,#9005ff,#a001ff,#b000ff,#c100ff,#d100ff,#e200ff,#f300ff,#ff00fa,#ff00ea,#ff00dc,#ff00d0,#ff00c5,#ff00bb,#ff00b1,#ff00a9,#ff00a1,#ff009a,#ff0093,#ff008d,#ff0087,#ff0082,#ff007d,#ff0078,#ff0074,#ff0070,#ff006c,#ff0068,#ff0065,#ff0061,#ff005e,#ff005b,#ff0058)"></i>
<i style="top:312px;background:linear-gradient(90deg,#0061ff,#005dff,#005aff,#0056ff,#0053ff,#004fff,#004cff,#0048ff,#0044ff,#0041ff,#003dff,#0039ff,#0035ff,#0031ff,#002eff,#062aff,#1426ff,#2322ff,#321eff,#4119ff,#5015ff,#5f11ff,#6f0dff,#7e09ff,#8e04ff,#9e00ff,#ae00ff,#be00ff,#ce00ff,#df00ff,#f000ff,#ff00fd,#ff00ee,#ff00e0,#ff00d3,#ff00c7,#ff00bd,#ff00b4,#ff00ab,#ff00a3,#ff009c,#ff0095,#ff008f,#ff0089,#ff0084,#ff007f,#ff007a,#ff0075,#ff0071,#ff006d,#ff006a,#ff0066,#ff0063,#ff0060,#ff005d,#ff005a)"></i>
<i style="top:315px;background:linear-gradient(90deg,#005fff,#005cff,#0058ff,#0055ff,#0051ff,#004eff,#004aff,#0046ff,#0043ff,#003fff,#003bff,#0038ff,#0034ff,#0030ff,#002cff,#0528ff,#1424ff,#2220ff,#311cff,#4018ff,#4f14ff,#5e10ff,#6d0cff,#7c08ff,#8c03ff,#9b00ff,#ab00ff,#bb00ff,#cb00ff,#dc00ff,#ec00ff,#fd00ff,#ff00f1,#ff00e3,#ff00d6,#ff00ca,#ff00c0,#ff00b6,#ff00ad,#ff00a5,#ff009e,#ff0097,#ff0091,#ff008b,#ff0085,#ff0080,#ff007c,#ff0077,#ff0073,#ff006f,#ff006b,#ff0067,#ff0064,#ff0061,#ff005e,#ff005b)"></i>
<i style="top:318px;background:linear-gradient(90deg,#005dff,#005aff,#0057ff,#0053ff,#0050ff,#004cff,#0049ff,#0045ff,#0041ff,#003eff,#003aff,#0036ff,#0033ff,#002fff,#002bff,#0527ff,#1323ff,#211fff,#301bff,#3e17ff,#4d13ff,#5c0fff,#6b0bff,#7a07ff,#8a03ff,#9900ff,#a900ff,#b900ff,#c900ff,#d900ff,#e900ff,#fa00ff,#ff00f4,#ff00e6,#ff00d9,#ff00cd,#ff00c2,#ff00b9,#ff00b0,#ff00a8,#ff00a0,#ff0099,#ff0093,#ff008d,#ff0087,#ff0082,#ff007d,#ff0079,#ff0074,#ff0070,#ff006d,#ff0069,#ff0066,#ff0062,#ff005f,#ff005c)"></i>
<i style="top:321px;background:linear-gradient(90deg,#005cff,#0058ff,#0055ff,#0051ff,#004eff,#004bff,#0047ff,#0043ff,#0040ff,#003cff,#0039ff,#0035ff,#0031ff,#002dff,#002aff,#0426ff,#1222ff,#211eff,#2f1aff,#3d16ff,#4c12ff,#5b0eff,#6a0aff,#7906ff,#8802ff,#9700ff,#a700ff,#b600ff,#c600ff,#d600ff,#e600ff,#f600ff,#ff00f7,#ff00e9,#ff00dc,#ff00d0,#ff00c5,#ff00bb,#ff00b2,#ff00aa,#ff00a2,#ff009b,#ff0095,#ff008f,#ff0089,#ff0084,#ff007f,#ff007a,#ff0076,#ff0072,#ff006e,#ff006a,#ff0067,#ff0064,#ff0061,#ff005e)"></i>
<i style="top:324px;background:linear-gradient(90deg,#005aff,#0057ff,#0053ff,#0050ff,#004cff,#0049ff,#0046ff,#0042ff,#003eff,#003bff,#0037ff,#0034ff,#0030ff,#002cff,#0028ff,#0425ff,#1221ff,#201dff,#2e19ff,#3c15ff,#4b11ff,#590dff,#6809ff,#7705ff,#8601ff,#9500ff,#a400ff,#b400ff,#c300ff,#d300ff,#e300ff,#f300ff,#ff00fb,#ff00ec,#ff00de,#ff00d2,#ff00c7,#ff00be,#ff00b4,#ff00ac,#ff00a4,#ff009d,#ff0097,#ff0091,#ff008b,#ff0086,#ff0081,#ff007c,#ff0078,#ff0073,#ff0070,#ff006c,#ff0068,#ff0065,#ff0062,#ff005f)"></i>
<i style="top:327px;background:linear-gradient(90deg,#0058ff,#0055ff,#0052ff,#004eff,#004bff,#0048ff,#0044ff,#0041ff,#003dff,#0039ff,#0036ff,#0032ff,#002fff,#002bff,#0027ff,#0323ff,#1120ff,#1f1cff,#2d18ff,#3b14ff,#4910ff,#580cff,#6608ff,#7504ff,#8400ff,#9300ff,#a200ff,#b100ff,#c100ff,#d000ff,#e000ff,#f000ff,#ff00fe,#ff00ef,#ff00e1,#ff00d5,#ff00ca,#ff00c0,#ff00b7,#ff00ae,#ff00a7,#ff009f,#ff0099,#ff0093,#ff008d,#ff0087,#ff0082,#ff007e,#ff0079,#ff0075,#ff0071,#ff006d,#ff006a,#ff0066,#ff0063,#ff0060)"></i>
<i style="top:330px;background:linear-gradient(90deg,#0057ff,#0054ff,#0050ff,#004dff,#0049ff,#0046ff,#0043ff,#003fff,#003cff,#0038ff,#0035ff,#0031ff,#002dff,#002aff,#0026ff,#0322ff,#101fff,#1e1bff,#2c17ff,#3a13ff,#480fff,#560bff,#6507ff,#7303ff,#8200ff,#9100ff,#a000ff,#af00ff,#be00ff,#cd00ff,#dd00ff,#ed00ff,#fd00ff,#ff00f2,#ff00e4,#ff00d8,#ff00cd,#ff00c3,#ff00b9,#ff00b1,#ff00a9,#ff00a1,#ff009b,#ff0094,#ff008f,#ff0089,#ff0084,#ff007f,#ff007b,#ff0076,#ff0072,#ff006f,#ff006b,#ff0068,#ff0065,#ff0062)"></i>
<i style="top:333px;background:linear-gradient(90deg,#0055ff,#0052ff,#004fff,#004bff,#0048ff,#0045ff,#0041ff,#003eff,#003aff,#0037ff,#0033ff,#0030ff,#002cff,#0029ff,#0025ff,#0221ff,#101dff,#1d1aff,#2b16ff,#3912ff,#470eff,#550aff,#6306ff,#7202ff,#8000ff,#8f00ff,#9e00ff,#ac00ff,#bc00ff,#cb00ff,#da00ff,#ea00ff,#f900ff,#ff00f5,#ff00e7,#ff00db,#ff00cf,#ff00c5,#ff00bc,#ff00b3,#ff00ab,#ff00a4,#ff009d,#ff0096,#ff0090,#ff008b,#ff0086,#ff0081,#ff007c,#ff0078,#ff0074,#ff0070,#ff006d,#ff0069,#ff0066,#ff0063)"></i>
<i style="top:336px;background:linear-gradient(90deg,#0054ff,#0050ff,#004dff,#004aff,#0047ff,#0043ff,#0040ff,#003cff,#0039ff,#0036ff,#0032ff,#002fff,#002bff,#0027ff,#0024ff,#0220ff,#0f1cff,#1d19ff,#2a15ff,#3811ff,#460dff,#5409ff,#6205ff,#7002ff,#7e00ff,#8d00ff,#9b00ff,#aa00ff,#b900ff,#c800ff,#d700ff,#e700ff,#f600ff,#ff00f8,#ff00ea,#ff00de,#ff00d2,#ff00c8,#ff00be,#ff00b5,#ff00ad,#ff00a6,#ff009f,#ff0098,#ff0092,#ff008d,#ff0087,#ff0083,#ff007e,#ff007a,#ff0076,#ff0072,#ff006e,#ff006b,#ff0067,#ff0064)"></i>
<i style="top:339px;background:linear-gradient(90deg,#0052ff,#004fff,#004cff,#0049ff,#0045ff,#0042ff,#003fff,#003bff,#0038ff,#0034ff,#0031ff,#002dff,#002aff,#0026ff,#0023ff,#011fff,#0f1bff,#1c18ff,#2914ff,#3710ff,#450cff,#5209ff,#6005ff,#6e01ff,#7d00ff,#8b00ff,#9900ff,#a800ff,#b700ff,#c600ff,#d500ff,#e400ff,#f300ff,#ff00fc,#ff00ed,#ff00e0,#ff00d5,#ff00ca,#ff00c0,#ff00b7,#ff00af,#ff00a8,#ff00a1,#ff009a,#ff0094,#ff008e,#ff0089,#ff0084,#ff0080,#ff007b,#ff0077,#ff0073,#ff006f,#ff006c,#ff0069,#ff0065)"></i>
<i style="top:342px;background:linear-gradient(90deg,#0051ff,#004eff,#004aff,#0047ff,#0044ff,#0041ff,#003dff,#003aff,#0036ff,#0033ff,#0030ff,#002cff,#0029ff,#0025ff,#0022ff,#011eff,#0e1aff,#1b17ff,#2913ff,#360fff,#430bff,#5108ff,#5f04ff,#6d00ff,#7b00ff,#8900ff,#9700ff,#a600ff,#b400ff,#c300ff,#d200ff,#e100ff,#f000ff,#ff00ff,#ff00f0,#ff00e3,#ff00d7,#ff00cd,#ff00c3,#ff00ba,#ff00b1,#ff00aa,#ff00a3,#ff009c,#ff0096,#ff0090,#ff008b,#ff0086,#ff0081,#ff007d,#ff0079,#ff0075,#ff0071,#ff006d,#ff006a,#ff0067)"></i>
<i style="top:345px;background:linear-gradient(90deg,#004fff,#004cff,#0049ff,#0046ff,#0042ff,#003fff,#003cff,#0039ff,#0035ff,#0032ff,#002eff,#002bff,#0027ff,#0024ff,#0020ff,#011dff,#0d19ff,#1b16ff,#2812ff,#350eff,#420bff,#5007ff,#5e03ff,#6b00ff,#7900ff,#8700ff,#9500ff,#a400ff,#b200ff,#c100ff,#cf00ff,#de00ff,#ed00ff,#fc00ff,#ff00f3,#ff00e6,#ff00da,#ff00cf,#ff00c5,#ff00bc,#ff00b4,#ff00ac,#ff00a5,#ff009e,#ff0098,#ff0092,#ff008d,#ff0088,#ff0083,#ff007e,#ff007a,#ff0076,#ff0072,#ff006f,#ff006b,#ff0068)"></i>
<i style="top:348px;background:linear-gradient(90deg,#004eff,#004bff,#0048ff,#0044ff,#0041ff,#003eff,#003bff,#0037ff,#0034ff,#0031ff,#002dff,#002aff,#0026ff,#0023ff,#001fff,#001cff,#0d18ff,#1a15ff,#2711ff,#340dff,#410aff,#4f06ff,#5c02ff,#6a00ff,#7800ff,#8500ff,#9300ff,#a100ff,#b000ff,#be00ff,#cd00ff,#db00ff,#ea00ff,#f900ff,#ff00f6,#ff00e9,#ff00dd,#ff00d2,#ff00c8,#ff00be,#ff00b6,#ff00ae,#ff00a7,#ff00a0,#ff009a,#ff0094,#ff008e,#ff0089,#ff0084,#ff0080,#ff007c,#ff0078,#ff0074,#ff0070,#ff006d,#ff0069)"></i>
<i style="top:351px;background:linear-gradient(90deg,#004dff,#0049ff,#0046ff,#0043ff,#0040ff,#003dff,#0039ff,#0036ff,#0033ff,#002fff,#002cff,#0029ff,#0025ff,#0022ff,#001eff,#001bff,#0c17ff,#1914ff,#2610ff,#330dff,#4009ff,#4d05ff,#5b01ff,#6800ff,#7600ff,#8400ff,#9100ff,#9f00ff,#ae00ff,#bc00ff,#ca00ff,#d900ff,#e700ff,#f600ff,#ff00f9,#ff00ec,#ff00df,#ff00d4,#ff00ca,#ff00c1,#ff00b8,#ff00b0,#ff00a9,#ff00a2,#ff009c,#ff0096,#ff0090,#ff008b,#ff0086,#ff0081,#ff007d,#ff0079,#ff0075,#ff0071,#ff006e,#ff006b)"></i>
<i style="top:354px;background:linear-gradient(90deg,#004bff,#0048ff,#0045ff,#0042ff,#003fff,#003bff,#0038ff,#0035ff,#0032ff,#002eff,#002bff,#0028ff,#0024ff,#0021ff,#001dff,#001aff,#0c16ff,#1913ff,#250fff,#320cff,#3f08ff,#4c04ff,#5901ff,#6700ff,#7400ff,#8200ff,#9000ff,#9d00ff,#ab00ff,#b900ff,#c800ff,#d600ff,#e400ff,#f300ff,#ff00fc,#ff00ee,#ff00e2,#ff00d7,#ff00cc,#ff00c3,#ff00ba,#ff00b2,#ff00ab,#ff00a4,#ff009d,#ff0097,#ff0092,#ff008d,#ff0088,#ff0083,#ff007f,#ff007a,#ff0077,#ff0073,#ff006f,#ff006c)"></i>
<i style="top:357px;background:linear-gradient(90deg,#004aff,#0047ff,#0044ff,#0041ff,#003dff,#003aff,#0037ff,#0034ff,#0030ff,#002dff,#002aff,#0027ff,#0023ff,#0020ff,#001cff,#0019ff,#0b15ff,#1812ff,#250eff,#310bff,#3e07ff,#4b04ff,#5800ff,#6500ff,#7300ff,#8000ff,#8e00ff,#9b00ff,#a900ff,#b700ff,#c500ff,#d300ff,#e200ff,#f000ff,#ff00ff,#ff00f1,#ff00e5,#ff00d9,#ff00cf,#ff00c5,#ff00bc,#ff00b4,#ff00ad,#ff00a6,#ff009f,#ff0099,#ff0094,#ff008e,#ff0089,#ff0085,#ff0080,#ff007c,#ff0078,#ff0074,#ff0071,#ff006d)"></i>
<i style="top:360px;background:linear-gradient(90deg,#0049ff,#0045ff,#0042ff,#003fff,#003cff,#0039ff,#0036ff,#0033ff,#002fff,#002cff,#0029ff,#0025ff,#0022ff,#001fff,#001bff,#0018ff,#0b15ff,#1711ff,#240eff,#300aff,#3d06ff,#4a03ff,#5700ff,#6400ff,#7100ff,#7f00ff,#8c00ff,#9900ff,#a700ff,#b500ff,#c300ff,#d100ff,#df00ff,#ed00ff,#fc00ff,#ff00f4,#ff00e7,#ff00dc,#ff00d1,#ff00c8,#ff00bf,#ff00b6,#ff00af,#ff00a8,#ff00a1,#ff009b,#ff0095,#ff0090,#ff008b,#ff0086,#ff0082,#ff007d,#ff0079,#ff0076,#ff0072,#ff006f)"></i>
<i style="top:363px;background:linear-gradient(90deg,#0047ff,#0044ff,#0041ff,#003eff,#003bff,#0038ff,#0035ff,#0031ff,#002eff,#002bff,#0028ff,#0024ff,#0021ff,#001eff,#001aff,#0017ff,#0a14ff,#1710ff,#230dff,#3009ff,#3c06ff,#4902ff,#5600ff,#6300ff,#7000ff,#7d00ff,#8a00ff,#9800ff,#a500ff,#b300ff,#c000ff,#ce00ff,#dc00ff,#ea00ff,#f900ff,#ff00f7,#ff00ea,#ff00de,#ff00d4,#ff00ca,#ff00c1,#ff00b9,#ff00b1,#ff00aa,#ff00a3,#ff009d,#ff0097,#ff0092,#ff008d,#ff0088,#ff0083,#ff007f,#ff007b,#ff0077,#ff0073,#ff0070)"></i>
<i style="top:366px;background:linear-gradient(90deg,#0046ff,#0043ff,#0040ff,#003dff,#003aff,#0037ff,#0034ff,#0030ff,#002dff,#002aff,#0027ff,#0023ff,#0020ff,#001dff,#0019ff,#0016ff,#0a13ff,#160fff,#220cff,#2f08ff,#3b05ff,#4801ff,#5400ff,#6100ff,#6e00ff,#7b00ff,#8800ff,#9600ff,#a300ff,#b100ff,#be00ff,#cc00ff,#da00ff,#e800ff,#f600ff,#ff00fa,#ff00ed,#ff00e1,#ff00d6,#ff00cc,#ff00c3,#ff00bb,#ff00b3,#ff00ac,#ff00a5,#ff009f,#ff0099,#ff0093,#ff008e,#ff0089,#ff0085,#ff0080,#ff007c,#ff0078,#ff0075,#ff0071)"></i>
<i style="top:369px;background:linear-gradient(90deg,#0045ff,#0042ff,#003fff,#003cff,#0039ff,#0035ff,#0032ff,#002fff,#002cff,#0029ff,#0026ff,#0022ff,#001fff,#001cff,#0019ff,#0015ff,#0912ff,#150eff,#220bff,#2e08ff,#3a04ff,#4701ff,#5300ff,#6000ff,#6d00ff,#7a00ff,#8700ff,#9400ff,#a100ff,#ae00ff,#bc00ff,#ca00ff,#d700ff,#e500ff,#f300ff,#ff00fd,#ff00f0,#ff00e4,#ff00d9,#ff00cf,#ff00c5,#ff00bd,#ff00b5,#ff00ae,#ff00a7,#ff00a1,#ff009b,#ff0095,#ff0090,#ff008b,#ff0086,#ff0082,#ff007e,#ff007a,#ff0076,#ff0073)"></i>
<i style="top:372px;background:linear-gradient(90deg,#0043ff,#0040ff,#003dff,#003aff,#0037ff,#0034ff,#0031ff,#002eff,#002bff,#0028ff,#0025ff,#0021ff,#001eff,#001bff,#0018ff,#0014ff,#0911ff,#150eff,#210aff,#2d07ff,#3903ff,#4600ff,#5200ff,#5f00ff,#6b00ff,#7800ff,#8500ff,#9200ff,#9f00ff,#ac00ff,#ba00ff,#c700ff,#d500ff,#e200ff,#f000ff,#fe00ff,#ff00f2,#ff00e6,#ff00db,#ff00d1,#ff00c8,#ff00bf,#ff00b7,#ff00b0,#ff00a9,#ff00a2,#ff009c,#ff0097,#ff0091,#ff008c,#ff0088,#ff0083,#ff007f,#ff007b,#ff0077,#ff0074)"></i>
<i style="top:375px;background:linear-gradient(90deg,#0042ff,#003fff,#003cff,#0039ff,#0036ff,#0033ff,#0030ff,#002dff,#002aff,#0027ff,#0024ff,#0020ff,#001dff,#001aff,#0017ff,#0013ff,#0810ff,#140dff,#2009ff,#2c06ff,#3803ff,#4500ff,#5100ff,#5d00ff,#6a00ff,#7700ff,#8300ff,#9000ff,#9d00ff,#aa00ff,#b800ff,#c500ff,#d200ff,#e000ff,#ee00ff,#fb00ff,#ff00f5,#ff00e9,#ff00de,#ff00d3,#ff00ca,#ff00c1,#ff00b9,#ff00b2,#ff00ab,#ff00a4,#ff009e,#ff0098,#ff0093,#ff008e,#ff0089,#ff0085,#ff0081,#ff007d,#ff0079,#ff0075)"></i>
<i style="top:378px;background:linear-gradient(90deg,#0041ff,#003eff,#003bff,#0038ff,#0035ff,#0032ff,#002fff,#002cff,#0029ff,#0026ff,#0023ff,#0020ff,#001cff,#0019ff,#0016ff,#0013ff,#080fff,#140cff,#1f09ff,#2b05ff,#3702ff,#4400ff,#5000ff,#5c00ff,#6900ff,#7500ff,#8200ff,#8f00ff,#9b00ff,#a800ff,#b500ff,#c300ff,#d000ff,#dd00ff,#eb00ff,#f900ff,#ff00f8,#ff00eb,#ff00e0,#ff00d6,#ff00cc,#ff00c3,#ff00bb,#ff00b4,#ff00ad,#ff00a6,#ff00a0,#ff009a,#ff0095,#ff0090,#ff008b,#ff0086,#ff0082,#ff007e,#ff007a,#ff0077)"></i>
<i style="top:381px;background:linear-gradient(90deg,#0040ff,#003dff,#003aff,#0037ff,#0034ff,#0031ff,#002eff,#002bff,#0028ff,#0025ff,#0022ff,#001fff,#001bff,#0018ff,#0015ff,#0012ff,#070fff,#130bff,#1f08ff,#2b05ff,#3701ff,#4300ff,#4f00ff,#5b00ff,#6700ff,#7400ff,#8000ff,#8d00ff,#9a00ff,#a600ff,#b300ff,#c000ff,#ce00ff,#db00ff,#e800ff,#f600ff,#ff00fb,#ff00ee,#ff00e3,#ff00d8,#ff00ce,#ff00c5,#ff00bd,#ff00b6,#ff00ae,#ff00a8,#ff00a2,#ff009c,#ff0096,#ff0091,#ff008c,#ff0088,#ff0084,#ff007f,#ff007c,#ff0078)"></i>
<i style="top:384px;background:linear-gradient(90deg,#003fff,#003cff,#0039ff,#0036ff,#0033ff,#0030ff,#002dff,#002aff,#0027ff,#0024ff,#0021ff,#001eff,#001bff,#0017ff,#0014ff,#0011ff,#070eff,#130aff,#1e07ff,#2a04ff,#3601ff,#4200ff,#4e00ff,#5a00ff,#6600ff,#7200ff,#7f00ff,#8b00ff,#9800ff,#a400ff,#b100ff,#be00ff,#cb00ff,#d800ff,#e600ff,#f300ff,#ff00fd,#ff00f1,#ff00e5,#ff00da,#ff00d1,#ff00c8,#ff00bf,#ff00b8,#ff00b0,#ff00aa,#ff00a3,#ff009e,#ff0098,#ff0093,#ff008e,#ff0089,#ff0085,#ff0081,#ff007d,#ff0079)"></i>
<i style="top:387px;background:linear-gradient(90deg,#003eff,#003bff,#0038ff,#0035ff,#0032ff,#002fff,#002cff,#0029ff,#0026ff,#0023ff,#0020ff,#001dff,#001aff,#0017ff,#0013ff,#0010ff,#070dff,#120aff,#1e06ff,#2903ff,#3500ff,#4100ff,#4d00ff,#5900ff,#6500ff,#7100ff,#7d00ff,#8a00ff,#9600ff,#a300ff,#af00ff,#bc00ff,#c900ff,#d600ff,#e300ff,#f000ff,#fe00ff,#ff00f3,#ff00e8,#ff00dd,#ff00d3,#ff00ca,#ff00c1,#ff00ba,#ff00b2,#ff00ac,#ff00a5,#ff009f,#ff009a,#ff0094,#ff0090,#ff008b,#ff0086,#ff0082,#ff007e,#ff007b)"></i>
<i style="top:390px;background:linear-gradient(90deg,#003dff,#003aff,#0037ff,#0034ff,#0031ff,#002eff,#002bff,#0028ff,#0025ff,#0022ff,#001fff,#001cff,#0019ff,#0016ff,#0013ff,#000fff,#060cff,#1109ff,#1d06ff,#2802ff,#3400ff,#4000ff,#4c00ff,#5700ff,#6300ff,#6f00ff,#7c00ff,#8800ff,#9400ff,#a100ff,#ad00ff,#ba00ff,#c700ff,#d400ff,#e100ff,#ee00ff,#fb00ff,#ff00f6,#ff00ea,#ff00df,#ff00d5,#ff00cc,#ff00c3,#ff00bc,#ff00b4,#ff00ad,#ff00a7,#ff00a1,#ff009b,#ff0096,#ff0091,#ff008c,#ff0088,#ff0084,#ff0080,#ff007c)"></i>
<i style="top:393px;background:linear-gradient(90deg,#003bff,#0039ff,#0036ff,#0033ff,#0030ff,#002dff,#002aff,#0027ff,#0024ff,#0021ff,#001eff,#001bff,#0018ff,#0015ff,#0012ff,#000fff,#060bff,#1108ff,#1c05ff,#2802ff,#3300ff,#3f00ff,#4a00ff,#5600ff,#6200ff,#6e00ff,#7a00ff,#8600ff,#9300ff,#9f00ff,#ab00ff,#b800ff,#c500ff,#d100ff,#de00ff,#eb00ff,#f800ff,#ff00f9,#ff00ed,#ff00e2,#ff00d8,#ff00ce,#ff00c6,#ff00be,#ff00b6,#ff00af,#ff00a9,#ff00a3,#ff009d,#ff0098,#ff0093,#ff008e,#ff0089,#ff0085,#ff0081,#ff007d)"></i>
<i style="top:396px;background:linear-gradient(90deg,#003aff,#0038ff,#0035ff,#0032ff,#002fff,#002cff,#0029ff,#0026ff,#0023ff,#0020ff,#001dff,#001aff,#0017ff,#0014ff,#0011ff,#000eff,#050bff,#1008ff,#1c04ff,#2701ff,#3200ff,#3e00ff,#4900ff,#5500ff,#6100ff,#6d00ff,#7900ff,#8500ff,#9100ff,#9d00ff,#a900ff,#b600ff,#c200ff,#cf00ff,#dc00ff,#e900ff,#f600ff,#ff00fb,#ff00ef,#ff00e4,#ff00da,#ff00d0,#ff00c8,#ff00c0,#ff00b8,#ff00b1,#ff00ab,#ff00a4,#ff009f,#ff0099,#ff0094,#ff008f,#ff008b,#ff0087,#ff0082,#ff007f)"></i>
<i style="top:399px;background:linear-gradient(90deg,#0039ff,#0036ff,#0034ff,#0031ff,#002eff,#002bff,#0028ff,#0025ff,#0022ff,#001fff,#001cff,#0019ff,#0016ff,#0013ff,#0010ff,#000dff,#050aff,#1007ff,#1b04ff,#2600ff,#3200ff,#3d00ff,#4800ff,#5400ff,#6000ff,#6b00ff,#7700ff,#8300ff,#8f00ff,#9b00ff,#a800ff,#b400ff,#c000ff,#cd00ff,#d900ff,#e600ff,#f300ff,#ff00fe,#ff00f2,#ff00e6,#ff00dc,#ff00d3,#ff00ca,#ff00c2,#ff00ba,#ff00b3,#ff00ac,#ff00a6,#ff00a0,#ff009b,#ff0096,#ff0091,#ff008c,#ff0088,#ff0084,#ff0080)"></i>
<i style="top:402px;background:linear-gradient(90deg,#0038ff,#0035ff,#0033ff,#0030ff,#002dff,#002aff,#0027ff,#0024ff,#0021ff,#001eff,#001cff,#0019ff,#0016ff,#0012ff,#000fff,#000cff,#0409ff,#0f06ff,#1a03ff,#2600ff,#3100ff,#3c00ff,#4700ff,#5300ff,#5f00ff,#6a00ff,#7600ff,#8200ff,#8e00ff,#9a00ff,#a600ff,#b200ff,#be00ff,#cb00ff,#d700ff,#e400ff,#f000ff,#fd00ff,#ff00f4,#ff00e9,#ff00de,#ff00d5,#ff00cc,#ff00c4,#ff00bc,#ff00b5,#ff00ae,#ff00a8,#ff00a2,#ff009d,#ff0097,#ff0092,#ff008e,#ff0089,#ff0085,#ff0081)"></i>
<i style="top:405px;background:linear-gradient(90deg,#0037ff,#0034ff,#0032ff,#002fff,#002cff,#0029ff,#0026ff,#0023ff,#0021ff,#001eff,#001bff,#0018ff,#0015ff,#0012ff,#000fff,#000cff,#0409ff,#0f05ff,#1a02ff,#2500ff,#3000ff,#3b00ff,#4700ff,#5200ff,#5d00ff,#6900ff,#7500ff,#8000ff,#8c00ff,#9800ff,#a400ff,#b000ff,#bc00ff,#c900ff,#d500ff,#e100ff,#ee00ff,#fb00ff,#ff00f7,#ff00eb,#ff00e1,#ff00d7,#ff00ce,#ff00c6,#ff00be,#ff00b7,#ff00b0,#ff00aa,#ff00a4,#ff009e,#ff0099,#ff0094,#ff008f,#ff008b,#ff0087,#ff0083)"></i>
<i style="top:408px;background:linear-gradient(90deg,#0036ff,#0033ff,#0031ff,#002eff,#002bff,#0028ff,#0025ff,#0023ff,#0020ff,#001dff,#001aff,#0017ff,#0014ff,#0011ff,#000eff,#000bff,#0408ff,#0e05ff,#1902ff,#2400ff,#2f00ff,#3a00ff,#4600ff,#5100ff,#5c00ff,#6800ff,#7300ff,#7f00ff,#8b00ff,#9600ff,#a200ff,#ae00ff,#ba00ff,#c600ff,#d300ff,#df00ff,#ec00ff,#f800ff,#ff00f9,#ff00ee,#ff00e3,#ff00d9,#ff00d0,#ff00c8,#ff00c0,#ff00b9,#ff00b2,#ff00ab,#ff00a5,#ff00a0,#ff009a,#ff0095,#ff0091,#ff008c,#ff0088,#ff0084)"></i>
<i style="top:411px;background:linear-gradient(90deg,#0035ff,#0032ff,#0030ff,#002dff,#002aff,#0027ff,#0025ff,#0022ff,#001fff,#001cff,#0019ff,#0016ff,#0013ff,#0010ff,#000dff,#000aff,#0307ff,#0e04ff,#1901ff,#2400ff,#2f00ff,#3a00ff,#4500ff,#5000ff,#5b00ff,#6600ff,#7200ff,#7d00ff,#8900ff,#9500ff,#a000ff,#ac00ff,#b800ff,#c400ff,#d100ff,#dd00ff,#e900ff,#f600ff,#ff00fc,#ff00f0,#ff00e5,#ff00db,#ff00d2,#ff00ca,#ff00c2,#ff00ba,#ff00b4,#ff00ad,#ff00a7,#ff00a1,#ff009c,#ff0097,#ff0092,#ff008e,#ff0089,#ff0085)"></i>
<i style="top:414px;background:linear-gradient(90deg,#0034ff,#0031ff,#002fff,#002cff,#0029ff,#0026ff,#0024ff,#0021ff,#001eff,#001bff,#0018ff,#0015ff,#0012ff,#000fff,#000cff,#0009ff,#0306ff,#0e03ff,#1800ff,#2300ff,#2e00ff,#3900ff,#4400ff,#4f00ff,#5a00ff,#6500ff,#7100ff,#7c00ff,#8700ff,#9300ff,#9f00ff,#ab00ff,#b600ff,#c200ff,#ce00ff,#da00ff,#e700ff,#f300ff,#ff00ff,#ff00f3,#ff00e8,#ff00de,#ff00d4,#ff00cc,#ff00c4,#ff00bc,#ff00b5,#ff00af,#ff00a9,#ff00a3,#ff009e,#ff0099,#ff0094,#ff008f,#ff008b,#ff0087)"></i>
<i style="top:417px;background:linear-gradient(90deg,#0033ff,#0031ff,#002eff,#002bff,#0028ff,#0026ff,#0023ff,#0020ff,#001dff,#001aff,#0017ff,#0015ff,#0012ff,#000fff,#000cff,#0009ff,#0306ff,#0d03ff,#1800ff,#2200ff,#2d00ff,#3800ff,#4300ff,#4e00ff,#5900ff,#6400ff,#6f00ff,#7b00ff,#8600ff,#9100ff,#9d00ff,#a900ff,#b400ff,#c000ff,#cc00ff,#d800ff,#e400ff,#f100ff,#fd00ff,#ff00f5,#ff00ea,#ff00e0,#ff00d7,#ff00ce,#ff00c6,#ff00be,#ff00b7,#ff00b1,#ff00aa,#ff00a5,#ff009f,#ff009a,#ff0095,#ff0091,#ff008c,#ff0088)"></i>
<i style="top:420px;background:linear-gradient(90deg,#0032ff,#0030ff,#002dff,#002aff,#0027ff,#0025ff,#0022ff,#001fff,#001cff,#001aff,#0017ff,#0014ff,#0011ff,#000eff,#000bff,#0008ff,#0205ff,#0d02ff,#1700ff,#2200ff,#2c00ff,#3700ff,#4200ff,#4d00ff,#5800ff,#6300ff,#6e00ff,#7900ff,#8500ff,#9000ff,#9b00ff,#a700ff,#b300ff,#be00ff,#ca00ff,#d600ff,#e200ff,#ee00ff,#fa00ff,#ff00f8,#ff00ec,#ff00e2,#ff00d9,#ff00d0,#ff00c8,#ff00c0,#ff00b9,#ff00b2,#ff00ac,#ff00a6,#ff00a1,#ff009c,#ff0097,#ff0092,#ff008e,#ff0089)"></i>
<i style="top:423px;background:linear-gradient(90deg,#0031ff,#002fff,#002cff,#0029ff,#0027ff,#0024ff,#0021ff,#001eff,#001cff,#0019ff,#0016ff,#0013ff,#0010ff,#000dff,#000aff,#0007ff,#0205ff,#0c02ff,#1700ff,#2100ff,#2c00ff,#3600ff,#4100ff,#4c00ff,#5700ff,#6200ff,#6d00ff,#7800ff,#8300ff,#8e00ff,#9a00ff,#a500ff,#b100ff,#bc00ff,#c800ff,#d400ff,#e000ff,#ec00ff,#f800ff,#ff00fa,#ff00ef,#ff00e4,#ff00db,#ff00d2,#ff00ca,#ff00c2,#ff00bb,#ff00b4,#ff00ae,#ff00a8,#ff00a2,#ff009d,#ff0098,#ff0094,#ff008f,#ff008b)"></i>
<i style="top:426px;background:linear-gradient(90deg,#0030ff,#002eff,#002bff,#0028ff,#0026ff,#0023ff,#0020ff,#001eff,#001bff,#0018ff,#0015ff,#0012ff,#000fff,#000dff,#000aff,#0007ff,#0104ff,#0c01ff,#1600ff,#2000ff,#2b00ff,#3600ff,#4000ff,#4b00ff,#5600ff,#6100ff,#6c00ff,#7700ff,#8200ff,#8d00ff,#9800ff,#a400ff,#af00ff,#ba00ff,#c600ff,#d200ff,#de00ff,#e900ff,#f500ff,#ff00fd,#ff00f1,#ff00e7,#ff00dd,#ff00d4,#ff00cc,#ff00c4,#ff00bd,#ff00b6,#ff00b0,#ff00aa,#ff00a4,#ff009f,#ff009a,#ff0095,#ff0090,#ff008c)"></i>
<i style="top:429px;background:linear-gradient(90deg,#0030ff,#002dff,#002aff,#0028ff,#0025ff,#0022ff,#001fff,#001dff,#001aff,#0017ff,#0014ff,#0012ff,#000fff,#000cff,#0009ff,#0006ff,#0103ff,#0b00ff,#1600ff,#2000ff,#2a00ff,#3500ff,#3f00ff,#4a00ff,#5500ff,#5f00ff,#6a00ff,#7500ff,#8000ff,#8b00ff,#9700ff,#a200ff,#ad00ff,#b900ff,#c400ff,#d000ff,#db00ff,#e700ff,#f300ff,#ff00ff,#ff00f3,#ff00e9,#ff00df,#ff00d6,#ff00ce,#ff00c6,#ff00bf,#ff00b8,#ff00b1,#ff00ab,#ff00a6,#ff00a0,#ff009b,#ff0096,#ff0092,#ff008e)"></i>
<i style="top:432px;background:linear-gradient(90deg,#002fff,#002cff,#0029ff,#0027ff,#0024ff,#0021ff,#001fff,#001cff,#0019ff,#0016ff,#0014ff,#0011ff,#000eff,#000bff,#0008ff,#0006ff,#0103ff,#0b00ff,#1500ff,#1f00ff,#2a00ff,#3400ff,#3f00ff,#4900ff,#5400ff,#5e00ff,#6900ff,#7400ff,#7f00ff,#8a00ff,#9500ff,#a000ff,#ab00ff,#b700ff,#c200ff,#ce00ff,#d900ff,#e500ff,#f100ff,#fd00ff,#ff00f6,#ff00eb,#ff00e1,#ff00d8,#ff00d0,#ff00c8,#ff00c0,#ff00b9,#ff00b3,#ff00ad,#ff00a7,#ff00a2,#ff009d,#ff0098,#ff0093,#ff008f)"></i>
<i style="top:435px;background:linear-gradient(90deg,#002eff,#002bff,#0029ff,#0026ff,#0023ff,#0021ff,#001eff,#001bff,#0018ff,#0016ff,#0013ff,#0010ff,#000dff,#000bff,#0008ff,#0005ff,#0002ff,#0a00ff,#1500ff,#1f00ff,#2900ff,#3300ff,#3e00ff,#4800ff,#5300ff,#5d00ff,#6800ff,#7300ff,#7e00ff,#8800ff,#9300ff,#9f00ff,#aa00ff,#b500ff,#c000ff,#cc00ff,#d700ff,#e300ff,#ee00ff,#fa00ff,#ff00f8,#ff00ed,#ff00e3,#ff00da,#ff00d2,#ff00ca,#ff00c2,#ff00bb,#ff00b5,#ff00af,#ff00a9,#ff00a3,#ff009e,#ff0099,#ff0095,#ff0090)"></i>
<i style="top:438px;background:linear-gradient(90deg,#002dff,#002aff,#0028ff,#0025ff,#0022ff,#0020ff,#001dff,#001aff,#0018ff,#0015ff,#0012ff,#0010ff,#000dff,#000aff,#0007ff,#0004ff,#0001ff,#0a00ff,#1400ff,#1e00ff,#2800ff,#3300ff,#3d00ff,#4700ff,#5200ff,#5c00ff,#6700ff,#7200ff,#7c00ff,#8700ff,#9200ff,#9d00ff,#a800ff,#b300ff,#be00ff,#ca00ff,#d500ff,#e100ff,#ec00ff,#f800ff,#ff00fb,#ff00f0,#ff00e6,#ff00dc,#ff00d4,#ff00cc,#ff00c4,#ff00bd,#ff00b6,#ff00b0,#ff00aa,#ff00a5,#ff00a0,#ff009b,#ff0096,#ff0092)"></i>
<i style="top:441px;background:linear-gradient(90deg,#002cff,#0029ff,#0027ff,#0024ff,#0022ff,#001fff,#001cff,#001aff,#0017ff,#0014ff,#0012ff,#000fff,#000cff,#0009ff,#0007ff,#0004ff,#0001ff,#0a00ff,#1400ff,#1e00ff,#2800ff,#3200ff,#3c00ff,#4600ff,#5100ff,#5b00ff,#6600ff,#7000ff,#7b00ff,#8600ff,#9100ff,#9b00ff,#a600ff,#b100ff,#bd00ff,#c800ff,#d300ff,#de00ff,#ea00ff,#f500ff,#ff00fd,#ff00f2,#ff00e8,#ff00de,#ff00d6,#ff00ce,#ff00c6,#ff00bf,#ff00b8,#ff00b2,#ff00ac,#ff00a6,#ff00a1,#ff009c,#ff0098,#ff0093)"></i>
<i style="top:444px;background:linear-gradient(90deg,#002bff,#0029ff,#0026ff,#0023ff,#0021ff,#001eff,#001cff,#0019ff,#0016ff,#0014ff,#0011ff,#000eff,#000bff,#0009ff,#0006ff,#0003ff,#0000ff,#0900ff,#1300ff,#1d00ff,#2700ff,#3100ff,#3b00ff,#4600ff,#5000ff,#5a00ff,#6500ff,#6f00ff,#7a00ff,#8400ff,#8f00ff,#9a00ff,#a500ff,#b000ff,#bb00ff,#c600ff,#d100ff,#dc00ff,#e800ff,#f300ff,#ff00ff,#ff00f4,#ff00ea,#ff00e1,#ff00d8,#ff00cf,#ff00c8,#ff00c1,#ff00ba,#ff00b4,#ff00ae,#ff00a8,#ff00a3,#ff009e,#ff0099,#ff0094)"></i>
<i style="top:447px;background:linear-gradient(90deg,#002aff,#0028ff,#0025ff,#0023ff,#0020ff,#001dff,#001bff,#0018ff,#0016ff,#0013ff,#0010ff,#000eff,#000bff,#0008ff,#0005ff,#0003ff,#0000ff,#0900ff,#1300ff,#1d00ff,#2600ff,#3000ff,#3b00ff,#4500ff,#4f00ff,#5900ff,#6300ff,#6e00ff,#7800ff,#8300ff,#8e00ff,#9800ff,#a300ff,#ae00ff,#b900ff,#c400ff,#cf00ff,#da00ff,#e500ff,#f100ff,#fc00ff,#ff00f7,#ff00ec,#ff00e3,#ff00da,#ff00d1,#ff00ca,#ff00c2,#ff00bc,#ff00b5,#ff00af,#ff00aa,#ff00a4,#ff009f,#ff009a,#ff0096)"></i>
<i style="top:450px;background:linear-gradient(90deg,#0029ff,#0027ff,#0024ff,#0022ff,#001fff,#001dff,#001aff,#0017ff,#0015ff,#0012ff,#0010ff,#000dff,#000aff,#0007ff,#0005ff,#0002ff,#0000ff,#0800ff,#1200ff,#1c00ff,#2600ff,#3000ff,#3a00ff,#4400ff,#4e00ff,#5800ff,#6200ff,#6d00ff,#7700ff,#8200ff,#8c00ff,#9700ff,#a200ff,#ac00ff,#b700ff,#c200ff,#cd00ff,#d800ff,#e300ff,#ef00ff,#fa00ff,#ff00f9,#ff00ee,#ff00e5,#ff00dc,#ff00d3,#ff00cc,#ff00c4,#ff00bd,#ff00b7,#ff00b1,#ff00ab,#ff00a6,#ff00a1,#ff009c,#ff0097)"></i>
<i style="top:453px;background:linear-gradient(90deg,#0029ff,#0026ff,#0024ff,#0021ff,#001fff,#001cff,#0019ff,#0017ff,#0014ff,#0012ff,#000fff,#000cff,#000aff,#0007ff,#0004ff,#0001ff,#0000ff,#0800ff,#1200ff,#1b00ff,#2500ff,#2f00ff,#3900ff,#4300ff,#4d00ff,#5700ff,#6100ff,#6c00ff,#7600ff,#8000ff,#8b00ff,#9500ff,#a000ff,#ab00ff,#b500ff,#c000ff,#cb00ff,#d600ff,#e100ff,#ec00ff,#f800ff,#ff00fb,#ff00f1,#ff00e7,#ff00de,#ff00d5,#ff00cd,#ff00c6,#ff00bf,#ff00b9,#ff00b2,#ff00ad,#ff00a7,#ff00a2,#ff009d,#ff0099)"></i>
<i style="top:456px;background:linear-gradient(90deg,#0028ff,#0025ff,#0023ff,#0020ff,#001eff,#001bff,#0019ff,#0016ff,#0013ff,#0011ff,#000eff,#000cff,#0009ff,#0006ff,#0004ff,#0001ff,#0000ff,#0800ff,#1100ff,#1b00ff,#2500ff,#2e00ff,#3800ff,#4200ff,#4c00ff,#5600ff,#6000ff,#6a00ff,#7500ff,#7f00ff,#8900ff,#9400ff,#9e00ff,#a900ff,#b400ff,#be00ff,#c900ff,#d400ff,#df00ff,#ea00ff,#f500ff,#ff00fe,#ff00f3,#ff00e9,#ff00e0,#ff00d7,#ff00cf,#ff00c8,#ff00c1,#ff00ba,#ff00b4,#ff00ae,#ff00a9,#ff00a4,#ff009f,#ff009a)"></i>
<i style="top:459px;background:linear-gradient(90deg,#0027ff,#0025ff,#0022ff,#0020ff,#001dff,#001bff,#0018ff,#0015ff,#0013ff,#0010ff,#000eff,#000bff,#0008ff,#0006ff,#0003ff,#0000ff,#0000ff,#0700ff,#1100ff,#1a00ff,#2400ff,#2e00ff,#3800ff,#4100ff,#4b00ff,#5500ff,#5f00ff,#6900ff,#7400ff,#7e00ff,#8800ff,#9200ff,#9d00ff,#a700ff,#b200ff,#bd00ff,#c700ff,#d200ff,#dd00ff,#e800ff,#f300ff,#fe00ff,#ff00f5,#ff00eb,#ff00e2,#ff00d9,#ff00d1,#ff00ca,#ff00c3,#ff00bc,#ff00b6,#ff00b0,#ff00aa,#ff00a5,#ff00a0,#ff009b)"></i>
<i style="top:462px;background:linear-gradient(90deg,#0026ff,#0024ff,#0021ff,#001fff,#001cff,#001aff,#0017ff,#0015ff,#0012ff,#0010ff,#000dff,#000aff,#0008ff,#0005ff,#0002ff,#0000ff,#0000ff,#0700ff,#1000ff,#1a00ff,#2300ff,#2d00ff,#3700ff,#4100ff,#4a00ff,#5400ff,#5e00ff,#6800ff,#7200ff,#7d00ff,#8700ff,#9100ff,#9b00ff,#a600ff,#b000ff,#bb00ff,#c600ff,#d000ff,#db00ff,#e600ff,#f100ff,#fc00ff,#ff00f7,#ff00ed,#ff00e4,#ff00db,#ff00d3,#ff00cb,#ff00c4,#ff00be,#ff00b7,#ff00b1,#ff00ac,#ff00a7,#ff00a2,#ff009d)"></i>
<i style="top:465px;background:linear-gradient(90deg,#0026ff,#0023ff,#0021ff,#001eff,#001cff,#0019ff,#0017ff,#0014ff,#0011ff,#000fff,#000cff,#000aff,#0007ff,#0004ff,#0002ff,#0000ff,#0000ff,#0700ff,#1000ff,#1900ff,#2300ff,#2c00ff,#3600ff,#4000ff,#4a00ff,#5300ff,#5d00ff,#6700ff,#7100ff,#7b00ff,#8500ff,#9000ff,#9a00ff,#a400ff,#af00ff,#b900ff,#c400ff,#ce00ff,#d900ff,#e400ff,#ef00ff,#fa00ff,#ff00f9,#ff00ef,#ff00e6,#ff00dd,#ff00d5,#ff00cd,#ff00c6,#ff00bf,#ff00b9,#ff00b3,#ff00ad,#ff00a8,#ff00a3,#ff009e)"></i>
<i style="top:468px;background:linear-gradient(90deg,#0025ff,#0022ff,#0020ff,#001dff,#001bff,#0018ff,#0016ff,#0013ff,#0011ff,#000eff,#000cff,#0009ff,#0007ff,#0004ff,#0001ff,#0000ff,#0000ff,#0600ff,#1000ff,#1900ff,#2200ff,#2c00ff,#3500ff,#3f00ff,#4900ff,#5200ff,#5c00ff,#6600ff,#7000ff,#7a00ff,#8400ff,#8e00ff,#9800ff,#a300ff,#ad00ff,#b700ff,#c200ff,#cc00ff,#d700ff,#e200ff,#ed00ff,#f700ff,#ff00fc,#ff00f1,#ff00e8,#ff00df,#ff00d7,#ff00cf,#ff00c8,#ff00c1,#ff00bb,#ff00b5,#ff00af,#ff00aa,#ff00a4,#ff00a0)"></i>
<i style="top:471px;background:linear-gradient(90deg,#0024ff,#0022ff,#001fff,#001dff,#001aff,#0018ff,#0015ff,#0013ff,#0010ff,#000eff,#000bff,#0009ff,#0006ff,#0003ff,#0001ff,#0000ff,#0000ff,#0600ff,#0f00ff,#1800ff,#2200ff,#2b00ff,#3500ff,#3e00ff,#4800ff,#5200ff,#5b00ff,#6500ff,#6f00ff,#7900ff,#8300ff,#8d00ff,#9700ff,#a100ff,#ab00ff,#b600ff,#c000ff,#cb00ff,#d500ff,#e000ff,#ea00ff,#f500ff,#ff00fe,#ff00f4,#ff00ea,#ff00e1,#ff00d9,#ff00d1,#ff00ca,#ff00c3,#ff00bc,#ff00b6,#ff00b0,#ff00ab,#ff00a6,#ff00a1)"></i>
<i style="top:474px;background:linear-gradient(90deg,#0023ff,#0021ff,#001eff,#001cff,#001aff,#0017ff,#0015ff,#0012ff,#0010ff,#000dff,#000bff,#0008ff,#0005ff,#0003ff,#0000ff,#0000ff,#0000ff,#0600ff,#0f00ff,#1800ff,#2100ff,#2b00ff,#3400ff,#3e00ff,#4700ff,#5100ff,#5a00ff,#6400ff,#6e00ff,#7800ff,#8200ff,#8c00ff,#9600ff,#a000ff,#aa00ff,#b400ff,#be00ff,#c900ff,#d300ff,#de00ff,#e800ff,#f300ff,#fe00ff,#ff00f6,#ff00ec,#ff00e3,#ff00db,#ff00d3,#ff00cb,#ff00c4,#ff00be,#ff00b8,#ff00b2,#ff00ad,#ff00a7,#ff00a2)"></i>
<i style="top:477px;background:linear-gradient(90deg,#0023ff,#0020ff,#001eff,#001bff,#0019ff,#0016ff,#0014ff,#0011ff,#000fff,#000cff,#000aff,#0007ff,#0005ff,#0002ff,#0000ff,#0000ff,#0000ff,#0500ff,#0e00ff,#1700ff,#2100ff,#2a00ff,#3300ff,#3d00ff,#4600ff,#5000ff,#5900ff,#6300ff,#6d00ff,#7700ff,#8000ff,#8a00ff,#9400ff,#9e00ff,#a800ff,#b300ff,#bd00ff,#c700ff,#d100ff,#dc00ff,#e600ff,#f100ff,#fc00ff,#ff00f8,#ff00ee,#ff00e5,#ff00dc,#ff00d5,#ff00cd,#ff00c6,#ff00c0,#ff00b9,#ff00b4,#ff00ae,#ff00a9,#ff00a4)"></i>
<i style="top:480px;background:linear-gradient(90deg,#0022ff,#001fff,#001dff,#001bff,#0018ff,#0016ff,#0013ff,#0011ff,#000eff,#000cff,#0009ff,#0007ff,#0004ff,#0002ff,#0000ff,#0000ff,#0000ff,#0500ff,#0e00ff,#1700ff,#2000ff,#2900ff,#3300ff,#3c00ff,#4500ff,#4f00ff,#5800ff,#6200ff,#6c00ff,#7500ff,#7f00ff,#8900ff,#9300ff,#9d00ff,#a700ff,#b100ff,#bb00ff,#c500ff,#d000ff,#da00ff,#e400ff,#ef00ff,#f900ff,#ff00fa,#ff00f0,#ff00e7,#ff00de,#ff00d6,#ff00cf,#ff00c8,#ff00c1,#ff00bb,#ff00b5,#ff00b0,#ff00aa,#ff00a5)"></i>
<i style="top:483px;background:linear-gradient(90deg,#0021ff,#001fff,#001cff,#001aff,#0018ff,#0015ff,#0013ff,#0010ff,#000eff,#000bff,#0009ff,#0006ff,#0004ff,#0001ff,#0000ff,#0000ff,#0000ff,#0500ff,#0e00ff,#1700ff,#2000ff,#2900ff,#3200ff,#3b00ff,#4500ff,#4e00ff,#5800ff,#6100ff,#6b00ff,#7400ff,#7e00ff,#8800ff,#9200ff,#9b00ff,#a500ff,#af00ff,#b900ff,#c400ff,#ce00ff,#d800ff,#e200ff,#ed00ff,#f700ff,#ff00fc,#ff00f2,#ff00e9,#ff00e0,#ff00d8,#ff00d1,#ff00ca,#ff00c3,#ff00bd,#ff00b7,#ff00b1,#ff00ac,#ff00a7)"></i>
<i style="top:486px;background:linear-gradient(90deg,#0020ff,#001eff,#001cff,#0019ff,#0017ff,#0014ff,#0012ff,#0010ff,#000dff,#000bff,#0008ff,#0006ff,#0003ff,#0001ff,#0000ff,#0000ff,#0000ff,#0400ff,#0d00ff,#1600ff,#1f00ff,#2800ff,#3100ff,#3b00ff,#4400ff,#4d00ff,#5700ff,#6000ff,#6a00ff,#7300ff,#7d00ff,#8600ff,#9000ff,#9a00ff,#a400ff,#ae00ff,#b800ff,#c200ff,#cc00ff,#d600ff,#e000ff,#eb00ff,#f500ff,#ff00fe,#ff00f4,#ff00eb,#ff00e2,#ff00da,#ff00d2,#ff00cb,#ff00c5,#ff00be,#ff00b8,#ff00b3,#ff00ad,#ff00a8)"></i>
<i style="top:489px;background:linear-gradient(90deg,#0020ff,#001dff,#001bff,#0019ff,#0016ff,#0014ff,#0011ff,#000fff,#000dff,#000aff,#0008ff,#0005ff,#0003ff,#0000ff,#0000ff,#0000ff,#0000ff,#0400ff,#0d00ff,#1600ff,#1f00ff,#2800ff,#3100ff,#3a00ff,#4300ff,#4c00ff,#5600ff,#5f00ff,#6900ff,#7200ff,#7c00ff,#8500ff,#8f00ff,#9900ff,#a200ff,#ac00ff,#b600ff,#c000ff,#ca00ff,#d400ff,#df00ff,#e900ff,#f300ff,#fd00ff,#ff00f6,#ff00ed,#ff00e4,#ff00dc,#ff00d4,#ff00cd,#ff00c6,#ff00c0,#ff00ba,#ff00b4,#ff00af,#ff00aa)"></i>
<i style="top:492px;background:linear-gradient(90deg,#001fff,#001dff,#001aff,#0018ff,#0016ff,#0013ff,#0011ff,#000eff,#000cff,#000aff,#0007ff,#0005ff,#0002ff,#0000ff,#0000ff,#0000ff,#0000ff,#0400ff,#0c00ff,#1500ff,#1e00ff,#2700ff,#3000ff,#3900ff,#4200ff,#4c00ff,#5500ff,#5e00ff,#6800ff,#7100ff,#7a00ff,#8400ff,#8e00ff,#9700ff,#a100ff,#ab00ff,#b500ff,#be00ff,#c800ff,#d300ff,#dd00ff,#e700ff,#f100ff,#fb00ff,#ff00f8,#ff00ef,#ff00e6,#ff00de,#ff00d6,#ff00cf,#ff00c8,#ff00c1,#ff00bb,#ff00b6,#ff00b0,#ff00ab)"></i>
<i style="top:495px;background:linear-gradient(90deg,#001eff,#001cff,#001aff,#0017ff,#0015ff,#0013ff,#0010ff,#000eff,#000bff,#0009ff,#0007ff,#0004ff,#0002ff,#0000ff,#0000ff,#0000ff,#0000ff,#0300ff,#0c00ff,#1500ff,#1e00ff,#2700ff,#3000ff,#3900ff,#4200ff,#4b00ff,#5400ff,#5d00ff,#6600ff,#7000ff,#7900ff,#8300ff,#8c00ff,#9600ff,#a000ff,#a900ff,#b300ff,#bd00ff,#c700ff,#d100ff,#db00ff,#e500ff,#ef00ff,#f900ff,#ff00fb,#ff00f1,#ff00e8,#ff00e0,#ff00d8,#ff00d0,#ff00ca,#ff00c3,#ff00bd,#ff00b7,#ff00b2,#ff00ac)"></i>
<i style="top:498px;background:linear-gradient(90deg,#001eff,#001bff,#0019ff,#0017ff,#0014ff,#0012ff,#0010ff,#000dff,#000bff,#0008ff,#0006ff,#0004ff,#0001ff,#0000ff,#0000ff,#0000ff,#0000ff,#0300ff,#0c00ff,#1400ff,#1d00ff,#2600ff,#2f00ff,#3800ff,#4100ff,#4a00ff,#5300ff,#5c00ff,#6600ff,#6f00ff,#7800ff,#8200ff,#8b00ff,#9500ff,#9e00ff,#a800ff,#b100ff,#bb00ff,#c500ff,#cf00ff,#d900ff,#e300ff,#ed00ff,#f700ff,#ff00fd,#ff00f3,#ff00ea,#ff00e2,#ff00da,#ff00d2,#ff00cb,#ff00c5,#ff00be,#ff00b9,#ff00b3,#ff00ae)"></i>
<i style="top:501px;background:linear-gradient(90deg,#001dff,#001bff,#0018ff,#0016ff,#0014ff,#0011ff,#000fff,#000dff,#000aff,#0008ff,#0005ff,#0003ff,#0001ff,#0000ff,#0000ff,#0000ff,#0000ff,#0300ff,#0b00ff,#1400ff,#1d00ff,#2500ff,#2e00ff,#3700ff,#4000ff,#4900ff,#5200ff,#5b00ff,#6500ff,#6e00ff,#7700ff,#8000ff,#8a00ff,#9300ff,#9d00ff,#a600ff,#b000ff,#ba00ff,#c300ff,#cd00ff,#d700ff,#e100ff,#eb00ff,#f500ff,#ff00ff,#ff00f5,#ff00ec,#ff00e3,#ff00db,#ff00d4,#ff00cd,#ff00c6,#ff00c0,#ff00ba,#ff00b5,#ff00af)"></i>
<i style="top:504px;background:linear-gradient(90deg,#001cff,#001aff,#0018ff,#0015ff,#0013ff,#0011ff,#000eff,#000cff,#000aff,#0007ff,#0005ff,#0003ff,#0000ff,#0000ff,#0000ff,#0000ff,#0000ff,#0200ff,#0b00ff,#1400ff,#1c00ff,#2500ff,#2e00ff,#3700ff,#3f00ff,#4800ff,#5100ff,#5a00ff,#6400ff,#6d00ff,#7600ff,#7f00ff,#8900ff,#9200ff,#9b00ff,#a500ff,#ae00ff,#b800ff,#c200ff,#cb00ff,#d500ff,#df00ff,#e900ff,#f300ff,#fd00ff,#ff00f7,#ff00ee,#ff00e5,#ff00dd,#ff00d6,#ff00cf,#ff00c8,#ff00c2,#ff00bc,#ff00b6,#ff00b1)"></i>
<i style="top:507px;background:linear-gradient(90deg,#001cff,#0019ff,#0017ff,#0015ff,#0013ff,#0010ff,#000eff,#000cff,#0009ff,#0007ff,#0004ff,#0002ff,#0000ff,#0000ff,#0000ff,#0000ff,#0000ff,#0200ff,#0b00ff,#1300ff,#1c00ff,#2400ff,#2d00ff,#3600ff,#3f00ff,#4800ff,#5100ff,#5a00ff,#6300ff,#6c00ff,#7500ff,#7e00ff,#8700ff,#9100ff,#9a00ff,#a300ff,#ad00ff,#b700ff,#c000ff,#ca00ff,#d400ff,#dd00ff,#e700ff,#f100ff,#fb00ff,#ff00f9,#ff00f0,#ff00e7,#ff00df,#ff00d7,#ff00d0,#ff00ca,#ff00c3,#ff00bd,#ff00b7,#ff00b2)"></i>
<i style="top:510px;background:linear-gradient(90deg,#001bff,#0019ff,#0017ff,#0014ff,#0012ff,#0010ff,#000dff,#000bff,#0009ff,#0006ff,#0004ff,#0002ff,#0000ff,#0000ff,#0000ff,#0000ff,#0000ff,#0200ff,#0a00ff,#1300ff,#1b00ff,#2400ff,#2d00ff,#3500ff,#3e00ff,#4700ff,#5000ff,#5900ff,#6200ff,#6b00ff,#7400ff,#7d00ff,#8600ff,#8f00ff,#9900ff,#a200ff,#ab00ff,#b500ff,#bf00ff,#c800ff,#d200ff,#db00ff,#e500ff,#ef00ff,#f900ff,#ff00fb,#ff00f2,#ff00e9,#ff00e1,#ff00d9,#ff00d2,#ff00cb,#ff00c5,#ff00bf,#ff00b9,#ff00b4)"></i>
<i style="top:513px;background:linear-gradient(90deg,#001aff,#0018ff,#0016ff,#0014ff,#0011ff,#000fff,#000dff,#000aff,#0008ff,#0006ff,#0003ff,#0001ff,#0000ff,#0000ff,#0000ff,#0000ff,#0000ff,#0100ff,#0a00ff,#1200ff,#1b00ff,#2300ff,#2c00ff,#3500ff,#3d00ff,#4600ff,#4f00ff,#5800ff,#6100ff,#6a00ff,#7300ff,#7c00ff,#8500ff,#8e00ff,#9700ff,#a100ff,#aa00ff,#b300ff,#bd00ff,#c600ff,#d000ff,#da00ff,#e300ff,#ed00ff,#f700ff,#ff00fd,#ff00f4,#ff00eb,#ff00e3,#ff00db,#ff00d4,#ff00cd,#ff00c6,#ff00c0,#ff00ba,#ff00b5)"></i>
<i style="top:516px;background:linear-gradient(90deg,#001aff,#0018ff,#0015ff,#0013ff,#0011ff,#000fff,#000cff,#000aff,#0008ff,#0005ff,#0003ff,#0001ff,#0000ff,#0000ff,#0000ff,#0000ff,#0000ff,#0100ff,#0a00ff,#1200ff,#1a00ff,#2300ff,#2b00ff,#3400ff,#3d00ff,#4500ff,#4e00ff,#5700ff,#6000ff,#6900ff,#7200ff,#7b00ff,#8400ff,#8d00ff,#9600ff,#9f00ff,#a900ff,#b200ff,#bb00ff,#c500ff,#ce00ff,#d800ff,#e200ff,#eb00ff,#f500ff,#ff00ff,#ff00f6,#ff00ed,#ff00e4,#ff00dd,#ff00d5,#ff00ce,#ff00c8,#ff00c2,#ff00bc,#ff00b6)"></i>
<i style="top:519px;background:linear-gradient(90deg,#0019ff,#0017ff,#0015ff,#0012ff,#0010ff,#000eff,#000cff,#0009ff,#0007ff,#0005ff,#0002ff,#0000ff,#0000ff,#0000ff,#0000ff,#0000ff,#0000ff,#0100ff,#0900ff,#1200ff,#1a00ff,#2200ff,#2b00ff,#3300ff,#3c00ff,#4500ff,#4d00ff,#5600ff,#5f00ff,#6800ff,#7100ff,#7a00ff,#8300ff,#8c00ff,#9500ff,#9e00ff,#a700ff,#b100ff,#ba00ff,#c300ff,#cd00ff,#d600ff,#e000ff,#e900ff,#f300ff,#fd00ff,#ff00f8,#ff00ef,#ff00e6,#ff00de,#ff00d7,#ff00d0,#ff00c9,#ff00c3,#ff00bd,#ff00b8)"></i>
<i style="top:522px;background:linear-gradient(90deg,#0019ff,#0016ff,#0014ff,#0012ff,#0010ff,#000dff,#000bff,#0009ff,#0007ff,#0004ff,#0002ff,#0000ff,#0000ff,#0000ff,#0000ff,#0000ff,#0000ff,#0100ff,#0900ff,#1100ff,#1900ff,#2200ff,#2a00ff,#3300ff,#3b00ff,#4400ff,#4d00ff,#5500ff,#5e00ff,#6700ff,#7000ff,#7900ff,#8200ff,#8b00ff,#9400ff,#9d00ff,#a600ff,#af00ff,#b800ff,#c200ff,#cb00ff,#d400ff,#de00ff,#e800ff,#f100ff,#fb00ff,#ff00fa,#ff00f1,#ff00e8,#ff00e0,#ff00d9,#ff00d2,#ff00cb,#ff00c5,#ff00bf,#ff00b9)"></i>
<i style="top:525px;background:linear-gradient(90deg,#0018ff,#0016ff,#0014ff,#0011ff,#000fff,#000dff,#000bff,#0008ff,#0006ff,#0004ff,#0001ff,#0000ff,#0000ff,#0000ff,#0000ff,#0000ff,#0000ff,#0000ff,#0900ff,#1100ff,#1900ff,#2100ff,#2a00ff,#3200ff,#3b00ff,#4300ff,#4c00ff,#5400ff,#5d00ff,#6600ff,#6f00ff,#7800ff,#8000ff,#8900ff,#9200ff,#9b00ff,#a400ff,#ae00ff,#b700ff,#c000ff,#c900ff,#d300ff,#dc00ff,#e600ff,#ef00ff,#f900ff,#ff00fc,#ff00f2,#ff00ea,#ff00e2,#ff00da,#ff00d3,#ff00cd,#ff00c6,#ff00c0,#ff00bb)"></i>
<i style="top:528px;background:linear-gradient(90deg,#0017ff,#0015ff,#0013ff,#0011ff,#000fff,#000cff,#000aff,#0008ff,#0006ff,#0003ff,#0001ff,#0000ff,#0000ff,#0000ff,#0000ff,#0000ff,#0000ff,#0000ff,#0800ff,#1000ff,#1900ff,#2100ff,#2900ff,#3200ff,#3a00ff,#4300ff,#4b00ff,#5400ff,#5c00ff,#6500ff,#6e00ff,#7600ff,#7f00ff,#8800ff,#9100ff,#9a00ff,#a300ff,#ac00ff,#b500ff,#bf00ff,#c800ff,#d100ff,#da00ff,#e400ff,#ed00ff,#f700ff,#ff00fe,#ff00f4,#ff00ec,#ff00e4,#ff00dc,#ff00d5,#ff00ce,#ff00c8,#ff00c2,#ff00bc)"></i>
<i style="top:531px;background:linear-gradient(90deg,#0017ff,#0015ff,#0012ff,#0010ff,#000eff,#000cff,#000aff,#0007ff,#0005ff,#0003ff,#0001ff,#0000ff,#0000ff,#0000ff,#0000ff,#0000ff,#0000ff,#0000ff,#0800ff,#1000ff,#1800ff,#2000ff,#2900ff,#3100ff,#3900ff,#4200ff,#4a00ff,#5300ff,#5b00ff,#6400ff,#6d00ff,#7500ff,#7e00ff,#8700ff,#9000ff,#9900ff,#a200ff,#ab00ff,#b400ff,#bd00ff,#c600ff,#cf00ff,#d900ff,#e200ff,#ec00ff,#f500ff,#fe00ff,#ff00f6,#ff00ee,#ff00e5,#ff00de,#ff00d7,#ff00d0,#ff00c9,#ff00c3,#ff00be)"></i>
<i style="top:534px;background:linear-gradient(90deg,#0016ff,#0014ff,#0012ff,#0010ff,#000dff,#000bff,#0009ff,#0007ff,#0005ff,#0002ff,#0000ff,#0000ff,#0000ff,#0000ff,#0000ff,#0000ff,#0000ff,#0000ff,#0800ff,#1000ff,#1800ff,#2000ff,#2800ff,#3000ff,#3900ff,#4100ff,#4a00ff,#5200ff,#5b00ff,#6300ff,#6c00ff,#7400ff,#7d00ff,#8600ff,#8f00ff,#9800ff,#a000ff,#a900ff,#b200ff,#bc00ff,#c500ff,#ce00ff,#d700ff,#e000ff,#ea00ff,#f300ff,#fd00ff,#ff00f8,#ff00ef,#ff00e7,#ff00e0,#ff00d8,#ff00d1,#ff00cb,#ff00c5,#ff00bf)"></i>
<i style="top:537px;background:linear-gradient(90deg,#0016ff,#0013ff,#0011ff,#000fff,#000dff,#000bff,#0009ff,#0006ff,#0004ff,#0002ff,#0000ff,#0000ff,#0000ff,#0000ff,#0000ff,#0000ff,#0000ff,#0000ff,#0700ff,#0f00ff,#1700ff,#2000ff,#2800ff,#3000ff,#3800ff,#4100ff,#4900ff,#5100ff,#5a00ff,#6200ff,#6b00ff,#7300ff,#7c00ff,#8500ff,#8e00ff,#9600ff,#9f00ff,#a800ff,#b100ff,#ba00ff,#c300ff,#cc00ff,#d500ff,#df00ff,#e800ff,#f100ff,#fb00ff,#ff00fa,#ff00f1,#ff00e9,#ff00e1,#ff00da,#ff00d3,#ff00cd,#ff00c6,#ff00c1)"></i>
<i style="top:540px;background:linear-gradient(90deg,#0015ff,#0013ff,#0011ff,#000fff,#000cff,#000aff,#0008ff,#0006ff,#0004ff,#0001ff,#0000ff,#0000ff,#0000ff,#0000ff,#0000ff,#0000ff,#0000ff,#0000ff,#0700ff,#0f00ff,#1700ff,#1f00ff,#2700ff,#2f00ff,#3800ff,#4000ff,#4800ff,#5100ff,#5900ff,#6100ff,#6a00ff,#7200ff,#7b00ff,#8400ff,#8c00ff,#9500ff,#9e00ff,#a700ff,#b000ff,#b900ff,#c200ff,#cb00ff,#d400ff,#dd00ff,#e600ff,#ef00ff,#f900ff,#ff00fc,#ff00f3,#ff00eb,#ff00e3,#ff00dc,#ff00d5,#ff00ce,#ff00c8,#ff00c2)"></i>
<i style="top:543px;background:linear-gradient(90deg,#0015ff,#0012ff,#0010ff,#000eff,#000cff,#000aff,#0008ff,#0005ff,#0003ff,#0001ff,#0000ff,#0000ff,#0000ff,#0000ff,#0000ff,#0000ff,#0000ff,#0000ff,#0700ff,#0f00ff,#1700ff,#1f00ff,#2700ff,#2f00ff,#3700ff,#3f00ff,#4700ff,#5000ff,#5800ff,#6100ff,#6900ff,#7100ff,#7a00ff,#8300ff,#8b00ff,#9400ff,#9d00ff,#a500ff,#ae00ff,#b700ff,#c000ff,#c900ff,#d200ff,#db00ff,#e400ff,#ee00ff,#f700ff,#ff00fe,#ff00f5,#ff00ed,#ff00e5,#ff00dd,#ff00d6,#ff00d0,#ff00c9,#ff00c4)"></i>
<i style="top:546px;background:linear-gradient(90deg,#0014ff,#0012ff,#0010ff,#000eff,#000bff,#0009ff,#0007ff,#0005ff,#0003ff,#0000ff,#0000ff,#0000ff,#0000ff,#0000ff,#0000ff,#0000ff,#0000ff,#0000ff,#0600ff,#0e00ff,#1600ff,#1e00ff,#2600ff,#2e00ff,#3600ff,#3f00ff,#4700ff,#4f00ff,#5700ff,#6000ff,#6800ff,#7000ff,#7900ff,#8100ff,#8a00ff,#9300ff,#9b00ff,#a400ff,#ad00ff,#b600ff,#bf00ff,#c800ff,#d000ff,#da00ff,#e300ff,#ec00ff,#f500ff,#fe00ff,#ff00f7,#ff00ee,#ff00e6,#ff00df,#ff00d8,#ff00d1,#ff00cb,#ff00c5)"></i>
<i style="top:549px;background:linear-gradient(90deg,#0013ff,#0011ff,#000fff,#000dff,#000bff,#0009ff,#0007ff,#0004ff,#0002ff,#0000ff,#0000ff,#0000ff,#0000ff,#0000ff,#0000ff,#0000ff,#0000ff,#0000ff,#0600ff,#0e00ff,#1600ff,#1e00ff,#2600ff,#2e00ff,#3600ff,#3e00ff,#4600ff,#4e00ff,#5600ff,#5f00ff,#6700ff,#7000ff,#7800ff,#8000ff,#8900ff,#9200ff,#9a00ff,#a300ff,#ac00ff,#b400ff,#bd00ff,#c600ff,#cf00ff,#d800ff,#e100ff,#ea00ff,#f300ff,#fc00ff,#ff00f9,#ff00f0,#ff00e8,#ff00e1,#ff00da,#ff00d3,#ff00cc,#ff00c6)"></i>
<i style="top:552px;background:linear-gradient(90deg,#0013ff,#0011ff,#000fff,#000dff,#000aff,#0008ff,#0006ff,#0004ff,#0002ff,#0000ff,#0000ff,#0000ff,#0000ff,#0000ff,#0000ff,#0000ff,#0000ff,#0000ff,#0600ff,#0e00ff,#1500ff,#1d00ff,#2500ff,#2d00ff,#3500ff,#3d00ff,#4500ff,#4e00ff,#5600ff,#5e00ff,#6600ff,#6f00ff,#7700ff,#7f00ff,#8800ff,#9000ff,#9900ff,#a200ff,#aa00ff,#b300ff,#bc00ff,#c400ff,#cd00ff,#d600ff,#df00ff,#e800ff,#f100ff,#fa00ff,#ff00fb,#ff00f2,#ff00ea,#ff00e2,#ff00db,#ff00d4,#ff00ce,#ff00c8)"></i>
<i style="top:555px;background:linear-gradient(90deg,#0012ff,#0010ff,#000eff,#000cff,#000aff,#0008ff,#0006ff,#0003ff,#0001ff,#0000ff,#0000ff,#0000ff,#0000ff,#0000ff,#0000ff,#0000ff,#0000ff,#0000ff,#0500ff,#0d00ff,#1500ff,#1d00ff,#2500ff,#2d00ff,#3500ff,#3d00ff,#4500ff,#4d00ff,#5500ff,#5d00ff,#6500ff,#6e00ff,#7600ff,#7e00ff,#8700ff,#8f00ff,#9800ff,#a000ff,#a900ff,#b200ff,#ba00ff,#c300ff,#cc00ff,#d500ff,#de00ff,#e600ff,#ef00ff,#f900ff,#ff00fc,#ff00f4,#ff00ec,#ff00e4,#ff00dd,#ff00d6,#ff00d0,#ff00c9)"></i>
<i style="top:558px;background:linear-gradient(90deg,#0012ff,#0010ff,#000eff,#000cff,#0009ff,#0007ff,#0005ff,#0003ff,#0001ff,#0000ff,#0000ff,#0000ff,#0000ff,#0000ff,#0000ff,#0000ff,#0000ff,#0000ff,#0500ff,#0d00ff,#1500ff,#1c00ff,#2400ff,#2c00ff,#3400ff,#3c00ff,#4400ff,#4c00ff,#5400ff,#5c00ff,#6400ff,#6d00ff,#7500ff,#7d00ff,#8600ff,#8e00ff,#9700ff,#9f00ff,#a800ff,#b000ff,#b900ff,#c100ff,#ca00ff,#d300ff,#dc00ff,#e500ff,#ee00ff,#f700ff,#ff00fe,#ff00f6,#ff00ed,#ff00e6,#ff00de,#ff00d8,#ff00d1,#ff00cb)"></i>
<i style="top:561px;background:linear-gradient(90deg,#0011ff,#000fff,#000dff,#000bff,#0009ff,#0007ff,#0005ff,#0003ff,#0000ff,#0000ff,#0000ff,#0000ff,#0000ff,#0000ff,#0000ff,#0000ff,#0000ff,#0000ff,#0500ff,#0d00ff,#1400ff,#1c00ff,#2400ff,#2c00ff,#3300ff,#3b00ff,#4300ff,#4b00ff,#5300ff,#5b00ff,#6400ff,#6c00ff,#7400ff,#7c00ff,#8500ff,#8d00ff,#9500ff,#9e00ff,#a600ff,#af00ff,#b700ff,#c000ff,#c900ff,#d100ff,#da00ff,#e300ff,#ec00ff,#f500ff,#fe00ff,#ff00f7,#ff00ef,#ff00e7,#ff00e0,#ff00d9,#ff00d3,#ff00cc)"></i>
<i style="top:564px;background:linear-gradient(90deg,#0011ff,#000fff,#000dff,#000bff,#0008ff,#0006ff,#0004ff,#0002ff,#0000ff,#0000ff,#0000ff,#0000ff,#0000ff,#0000ff,#0000ff,#0000ff,#0000ff,#0000ff,#0500ff,#0c00ff,#1400ff,#1c00ff,#2300ff,#2b00ff,#3300ff,#3b00ff,#4300ff,#4b00ff,#5300ff,#5b00ff,#6300ff,#6b00ff,#7300ff,#7b00ff,#8400ff,#8c00ff,#9400ff,#9d00ff,#a500ff,#ad00ff,#b600ff,#bf00ff,#c700ff,#d000ff,#d900ff,#e100ff,#ea00ff,#f300ff,#fc00ff,#ff00f9,#ff00f1,#ff00e9,#ff00e2,#ff00db,#ff00d4,#ff00ce)"></i>
<i style="top:567px;background:linear-gradient(90deg,#0010ff,#000eff,#000cff,#000aff,#0008ff,#0006ff,#0004ff,#0002ff,#0000ff,#0000ff,#0000ff,#0000ff,#0000ff,#0000ff,#0000ff,#0000ff,#0000ff,#0000ff,#0400ff,#0c00ff,#1300ff,#1b00ff,#2300ff,#2b00ff,#3200ff,#3a00ff,#4200ff,#4a00ff,#5200ff,#5a00ff,#6200ff,#6a00ff,#7200ff,#7a00ff,#8200ff,#8b00ff,#9300ff,#9b00ff,#a400ff,#ac00ff,#b500ff,#bd00ff,#c600ff,#ce00ff,#d700ff,#e000ff,#e800ff,#f100ff,#fa00ff,#ff00fb,#ff00f3,#ff00eb,#ff00e3,#ff00dc,#ff00d6,#ff00cf)"></i>
<i style="top:570px;background:linear-gradient(90deg,#0010ff,#000eff,#000cff,#000aff,#0008ff,#0005ff,#0003ff,#0001ff,#0000ff,#0000ff,#0000ff,#0000ff,#0000ff,#0000ff,#0000ff,#0000ff,#0000ff,#0000ff,#0400ff,#0c00ff,#1300ff,#1b00ff,#2200ff,#2a00ff,#3200ff,#3a00ff,#4100ff,#4900ff,#5100ff,#5900ff,#6100ff,#6900ff,#7100ff,#7900ff,#8100ff,#8a00ff,#9200ff,#9a00ff,#a300ff,#ab00ff,#b300ff,#bc00ff,#c400ff,#cd00ff,#d500ff,#de00ff,#e700ff,#f000ff,#f800ff,#ff00fd,#ff00f4,#ff00ec,#ff00e5,#ff00de,#ff00d7,#ff00d1)"></i>
<i style="top:573px;background:linear-gradient(90deg,#000fff,#000dff,#000bff,#0009ff,#0007ff,#0005ff,#0003ff,#0001ff,#0000ff,#0000ff,#0000ff,#0000ff,#0000ff,#0000ff,#0000ff,#0000ff,#0000ff,#0000ff,#0400ff,#0b00ff,#1300ff,#1a00ff,#2200ff,#2a00ff,#3100ff,#3900ff,#4100ff,#4900ff,#5000ff,#5800ff,#6000ff,#6800ff,#7000ff,#7800ff,#8000ff,#8900ff,#9100ff,#9900ff,#a100ff,#aa00ff,#b200ff,#ba00ff,#c300ff,#cb00ff,#d400ff,#dc00ff,#e500ff,#ee00ff,#f700ff,#ff00ff,#ff00f6,#ff00ee,#ff00e7,#ff00df,#ff00d9,#ff00d2)"></i>
<i style="top:576px;background:linear-gradient(90deg,#000fff,#000dff,#000bff,#0009ff,#0007ff,#0005ff,#0002ff,#0000ff,#0000ff,#0000ff,#0000ff,#0000ff,#0000ff,#0000ff,#0000ff,#0000ff,#0000ff,#0000ff,#0300ff,#0b00ff,#1200ff,#1a00ff,#2200ff,#2900ff,#3100ff,#3800ff,#4000ff,#4800ff,#5000ff,#5800ff,#5f00ff,#6700ff,#6f00ff,#7700ff,#7f00ff,#8800ff,#9000ff,#9800ff,#a000ff,#a800ff,#b100ff,#b900ff,#c100ff,#ca00ff,#d200ff,#db00ff,#e300ff,#ec00ff,#f500ff,#fe00ff,#ff00f8,#ff00f0,#ff00e8,#ff00e1,#ff00da,#ff00d4)"></i>
<i style="top:579px;background:linear-gradient(90deg,#000eff,#000cff,#000aff,#0008ff,#0006ff,#0004ff,#0002ff,#0000ff,#0000ff,#0000ff,#0000ff,#0000ff,#0000ff,#0000ff,#0000ff,#0000ff,#0000ff,#0000ff,#0300ff,#0b00ff,#1200ff,#1a00ff,#2100ff,#2900ff,#3000ff,#3800ff,#4000ff,#4700ff,#4f00ff,#5700ff,#5f00ff,#6700ff,#6e00ff,#7600ff,#7e00ff,#8600ff,#8f00ff,#9700ff,#9f00ff,#a700ff,#af00ff,#b800ff,#c000ff,#c800ff,#d100ff,#d900ff,#e200ff,#ea00ff,#f300ff,#fc00ff,#ff00fa,#ff00f2,#ff00ea,#ff00e3,#ff00dc,#ff00d5)"></i>
<i style="top:582px;background:linear-gradient(90deg,#000eff,#000cff,#000aff,#0008ff,#0006ff,#0004ff,#0002ff,#0000ff,#0000ff,#0000ff,#0000ff,#0000ff,#0000ff,#0000ff,#0000ff,#0000ff,#0000ff,#0000ff,#0300ff,#0a00ff,#1200ff,#1900ff,#2100ff,#2800ff,#3000ff,#3700ff,#3f00ff,#4700ff,#4e00ff,#5600ff,#5e00ff,#6600ff,#6e00ff,#7500ff,#7d00ff,#8500ff,#8d00ff,#9600ff,#9e00ff,#a600ff,#ae00ff,#b600ff,#bf00ff,#c700ff,#cf00ff,#d800ff,#e000ff,#e900ff,#f100ff,#fa00ff,#ff00fb,#ff00f3,#ff00ec,#ff00e4,#ff00dd,#ff00d7)"></i>
<i style="top:585px;background:linear-gradient(90deg,#000dff,#000bff,#0009ff,#0007ff,#0005ff,#0003ff,#0001ff,#0000ff,#0000ff,#0000ff,#0000ff,#0000ff,#0000ff,#0000ff,#0000ff,#0000ff,#0000ff,#0000ff,#0300ff,#0a00ff,#1100ff,#1900ff,#2000ff,#2800ff,#2f00ff,#3700ff,#3e00ff,#4600ff,#4e00ff,#5500ff,#5d00ff,#6500ff,#6d00ff,#7500ff,#7c00ff,#8400ff,#8c00ff,#9400ff,#9d00ff,#a500ff,#ad00ff,#b500ff,#bd00ff,#c600ff,#ce00ff,#d600ff,#df00ff,#e700ff,#f000ff,#f800ff,#ff00fd,#ff00f5,#ff00ed,#ff00e6,#ff00df,#ff00d8)"></i>
<i style="top:588px;background:linear-gradient(90deg,#000dff,#000bff,#0009ff,#0007ff,#0005ff,#0003ff,#0001ff,#0000ff,#0000ff,#0000ff,#0000ff,#0000ff,#0000ff,#0000ff,#0000ff,#0000ff,#0000ff,#0000ff,#0200ff,#0a00ff,#1100ff,#1800ff,#2000ff,#2700ff,#2f00ff,#3600ff,#3e00ff,#4500ff,#4d00ff,#5500ff,#5c00ff,#6400ff,#6c00ff,#7400ff,#7c00ff,#8300ff,#8b00ff,#9300ff,#9b00ff,#a300ff,#ac00ff,#b400ff,#bc00ff,#c400ff,#cc00ff,#d500ff,#dd00ff,#e600ff,#ee00ff,#f600ff,#ff00ff,#ff00f7,#ff00ef,#ff00e7,#ff00e0,#ff00da)"></i>
<i style="top:591px;background:linear-gradient(90deg,#000cff,#000aff,#0008ff,#0006ff,#0004ff,#0002ff,#0000ff,#0000ff,#0000ff,#0000ff,#0000ff,#0000ff,#0000ff,#0000ff,#0000ff,#0000ff,#0000ff,#0000ff,#0200ff,#0900ff,#1100ff,#1800ff,#1f00ff,#2700ff,#2e00ff,#3600ff,#3d00ff,#4500ff,#4c00ff,#5400ff,#5c00ff,#6300ff,#6b00ff,#7300ff,#7b00ff,#8200ff,#8a00ff,#9200ff,#9a00ff,#a200ff,#aa00ff,#b200ff,#bb00ff,#c300ff,#cb00ff,#d300ff,#dc00ff,#e400ff,#ec00ff,#f500ff,#fd00ff,#ff00f8,#ff00f0,#ff00e9,#ff00e2,#ff00db)"></i>
</div></div>
<svg width="1920" height="1170" viewBox="0 0 1920 1170" style="position:absolute;left:0;top:0;" font-family="Liberation Sans, sans-serif"><defs><linearGradient id="t1" x1="0" y1="0" x2="1" y2="1"><stop offset="0" stop-color="#ff8c28"/><stop offset="0.5" stop-color="#ff6a24"/><stop offset="1" stop-color="#ff4420"/></linearGradient></defs>
<clipPath id="plotc"><rect x="1250.0" y="144.3" width="658.3" height="613.8"/></clipPath>
<g clip-path="url(#plotc)">
<path d="M1531.1 740.6 L1529.9 741.3 L1526.0 740.3 L1523.3 738.1 L1519.4 734.5 L1516.8 731.9 L1514.0 729.0 L1510.6 725.7 L1506.8 721.8 L1503.8 718.8 L1500.3 715.3 L1496.7 711.7 L1493.0 708.0 L1489.5 704.5 L1486.4 701.4 L1482.5 697.5 L1479.2 694.2 L1476.0 691.0 L1472.4 687.2 L1469.8 684.5 L1467.1 681.6 L1464.2 678.6 L1461.3 675.4 L1458.4 672.0 L1455.3 668.5 L1452.6 665.3 L1449.8 662.1 L1447.0 658.8 L1444.1 655.3 L1441.1 651.6 L1438.0 647.5 L1434.7 643.1 L1432.5 640.0 L1430.2 636.9 L1427.8 633.6 L1425.4 630.2 L1423.0 626.7 L1420.5 623.1 L1417.9 619.4 L1415.3 615.5 L1412.7 611.5 L1410.0 607.4 L1407.4 603.1 L1405.4 600.0 L1403.3 596.7 L1401.3 593.4 L1399.2 590.0 L1397.1 586.5 L1394.9 583.0 L1392.8 579.4 L1390.6 575.8 L1388.4 572.0 L1386.2 568.3 L1384.0 564.4 L1381.8 560.5 L1379.6 556.6 L1377.3 552.6 L1375.1 548.5 L1373.2 545.1 L1371.3 541.6 L1369.4 538.0 L1367.5 534.4 L1365.5 530.8 L1363.6 527.1 L1361.6 523.3 L1359.7 519.5 L1357.7 515.7 L1355.7 511.9 L1353.7 508.0 L1351.8 504.1 L1349.8 500.2 L1347.8 496.3 L1345.9 492.3 L1344.0 488.4 L1342.0 484.5 L1340.1 480.5 L1338.3 476.8 L1336.5 473.0 L1334.6 469.2 L1332.8 465.4 L1331.0 461.5 L1329.1 457.6 L1327.3 453.7 L1325.5 449.8 L1323.6 445.9 L1321.8 442.0 L1320.0 438.1 L1318.2 434.1 L1316.5 430.2 L1314.7 426.3 L1313.0 422.4 L1311.3 418.5 L1309.7 414.7 L1308.0 410.8 L1306.4 407.0 L1304.8 403.0 L1303.1 399.0 L1301.5 395.0 L1299.9 390.9 L1298.3 386.9 L1296.8 382.9 L1295.3 378.9 L1293.8 374.9 L1292.3 370.9 L1290.8 366.9 L1289.4 363.0 L1288.0 359.0 L1286.6 355.2 L1285.2 351.3 L1283.9 347.5 L1282.6 343.8 L1281.4 340.1 L1280.1 336.5 L1278.7 332.1 L1277.2 327.8 L1275.9 323.6 L1274.5 319.4 L1273.2 315.2 L1271.9 311.1 L1270.7 307.1 L1269.5 303.1 L1268.4 299.1 L1267.3 295.2 L1266.2 291.4 L1265.1 287.7 L1264.1 284.0 L1263.2 280.5 L1262.3 277.0 L1261.1 272.3 L1260.0 267.8 L1258.9 263.4 L1258.0 259.2 L1257.1 255.1 L1256.3 251.1 L1255.5 247.2 L1254.8 243.4 L1254.1 239.7 L1253.6 236.2 L1253.0 232.7 L1252.3 227.5 L1251.7 222.7 L1251.3 218.1 L1251.0 213.8 L1250.8 209.6 L1250.7 205.7 L1250.8 201.9 L1251.0 197.0 L1251.5 192.4 L1252.3 188.2 L1253.2 184.4 L1254.3 180.8 L1256.6 175.5 L1259.4 171.1 L1262.7 167.4 L1266.3 164.4 L1270.3 162.2 L1274.6 160.5 L1279.1 159.3 L1283.8 158.5 L1288.7 158.0 L1293.8 157.6 L1298.9 157.4 L1304.1 157.4 L1309.3 157.3 L1314.5 157.4 L1319.8 157.6 L1325.2 157.8 L1330.6 158.1 L1336.2 158.5 L1340.4 158.8 L1344.8 159.2 L1349.2 159.6 L1353.8 160.1 L1358.4 160.5 L1363.1 161.0 L1368.0 161.6 L1372.9 162.1 L1378.0 162.7 L1383.2 163.4 L1388.5 164.0 L1393.9 164.7 L1398.4 165.3 L1403.0 165.9 L1407.6 166.5 L1412.4 167.1 L1417.3 167.7 L1422.2 168.4 L1427.3 169.1 L1432.4 169.8 L1437.7 170.5 L1443.0 171.2 L1447.6 171.9 L1452.2 172.5 L1457.0 173.1 L1461.8 173.8 L1466.6 174.5 L1471.6 175.1 L1475.9 175.7 L1480.3 176.3 L1484.7 177.0 L1489.2 177.6 L1493.7 178.2 L1498.3 178.8 L1503.0 179.5 L1507.7 180.2 L1512.4 180.8 L1517.3 181.5 L1522.2 182.2 L1527.1 182.9 L1532.1 183.6 L1537.2 184.3 L1541.6 184.9 L1546.2 185.5 L1550.7 186.2 L1555.3 186.8 L1560.0 187.4 L1564.6 188.1 L1569.3 188.8 L1574.1 189.4 L1578.8 190.1 L1583.7 190.7 L1588.5 191.4 L1593.4 192.1 L1598.3 192.8 L1603.2 193.5 L1608.2 194.1 L1613.1 194.8 L1617.5 195.4 L1622.0 196.1 L1626.5 196.7 L1630.9 197.3 L1635.4 198.0 L1639.9 198.6 L1644.4 199.2 L1648.8 199.8 L1653.2 200.4 L1658.1 201.1 L1663.0 201.8 L1667.9 202.5 L1672.8 203.2 L1677.6 203.9 L1682.5 204.5 L1687.3 205.2 L1692.1 205.9 L1696.9 206.5 L1701.7 207.2 L1706.5 207.9 L1711.3 208.5 L1716.0 209.2 L1720.7 209.9 L1725.4 210.5 L1729.9 211.1 L1735.0 211.8 L1740.1 212.5 L1745.1 213.2 L1750.0 213.9 L1754.8 214.6 L1759.6 215.2 L1764.2 215.9 L1769.5 216.6 L1774.8 217.3 L1779.9 218.0 L1784.9 218.7 L1789.8 219.4 L1794.5 220.1 L1799.7 220.8 L1804.5 221.5 L1809.2 222.2 L1814.3 222.9 L1820.3 223.7 L1824.2 224.2 L1828.4 224.8 L1832.9 225.5 L1837.6 226.1 L1842.4 226.8 L1847.1 227.4 L1851.7 228.1 L1856.0 228.7 L1860.1 229.2 L1865.7 230.0 L1870.9 230.8 L1875.9 231.4 L1880.6 232.1 L1885.0 232.7 L1889.2 233.3 L1894.6 234.0 L1899.0 234.7 L1903.4 235.3 L1908.4 235.9 L1913.4 236.6 L1919.2 237.5 L1925.0 238.3 L1930.0 239.0 L1933.5 239.5 Z M1743.9 222.7 L1386.4 182.2 L1441.8 596.1 Z" fill="#000" fill-opacity="0.40" fill-rule="evenodd"/>
<rect x="1378.90" y="172.80" width="13.20" height="16.40" fill="none" stroke="#fff" stroke-width="1.7"/>
<rect x="1404.50" y="203.20" width="13.20" height="16.40" fill="none" stroke="#fff" stroke-width="1.7"/>
<rect x="1445.00" y="193.10" width="13.20" height="16.40" fill="none" stroke="#fff" stroke-width="1.7"/>
<rect x="1465.90" y="182.70" width="13.20" height="16.40" fill="none" stroke="#fff" stroke-width="1.7"/>
<rect x="1493.90" y="188.20" width="13.20" height="16.40" fill="none" stroke="#fff" stroke-width="1.7"/>
<rect x="1525.90" y="196.20" width="13.20" height="16.40" fill="none" stroke="#fff" stroke-width="1.7"/>
<rect x="1442.50" y="220.20" width="13.20" height="16.40" fill="none" stroke="#fff" stroke-width="1.7"/>
<rect x="1571.40" y="200.80" width="13.20" height="16.40" fill="none" stroke="#fff" stroke-width="1.7"/>
<rect x="1571.40" y="206.30" width="13.20" height="16.40" fill="none" stroke="#fff" stroke-width="1.7"/>
<rect x="1411.40" y="259.10" width="13.20" height="16.40" fill="none" stroke="#fff" stroke-width="1.7"/>
<rect x="1394.40" y="284.80" width="13.20" height="16.40" fill="none" stroke="#fff" stroke-width="1.7"/>
<rect x="1590.90" y="254.20" width="13.20" height="16.40" fill="none" stroke="#fff" stroke-width="1.7"/>
<rect x="1499.40" y="230.80" width="13.20" height="16.40" fill="none" stroke="#fff" stroke-width="1.7"/>
<rect x="1498.20" y="244.90" width="13.20" height="16.40" fill="none" stroke="#fff" stroke-width="1.7"/>
<rect x="1511.40" y="237.10" width="13.20" height="16.40" fill="none" stroke="#fff" stroke-width="1.7"/>
<rect x="1518.40" y="223.10" width="13.20" height="16.40" fill="none" stroke="#fff" stroke-width="1.7"/>
<rect x="1520.90" y="229.30" width="13.20" height="16.40" fill="none" stroke="#fff" stroke-width="1.7"/>
<rect x="1528.70" y="230.80" width="13.20" height="16.40" fill="none" stroke="#fff" stroke-width="1.7"/>
<rect x="1535.00" y="212.10" width="13.20" height="16.40" fill="none" stroke="#fff" stroke-width="1.7"/>
<rect x="1544.40" y="228.50" width="13.20" height="16.40" fill="none" stroke="#fff" stroke-width="1.7"/>
<rect x="1551.40" y="218.40" width="13.20" height="16.40" fill="none" stroke="#fff" stroke-width="1.7"/>
<rect x="1544.40" y="210.60" width="13.20" height="16.40" fill="none" stroke="#fff" stroke-width="1.7"/>
<rect x="1400.30" y="322.30" width="13.20" height="16.40" fill="none" stroke="#fff" stroke-width="1.7"/>
<rect x="1435.30" y="318.80" width="13.20" height="16.40" fill="none" stroke="#fff" stroke-width="1.7"/>
<rect x="1456.40" y="325.20" width="13.20" height="16.40" fill="none" stroke="#fff" stroke-width="1.7"/>
<rect x="1492.80" y="347.60" width="13.20" height="16.40" fill="none" stroke="#fff" stroke-width="1.7"/>
<rect x="1557.30" y="312.30" width="13.20" height="16.40" fill="none" stroke="#fff" stroke-width="1.7"/>
<rect x="1437.80" y="385.10" width="13.20" height="16.40" fill="none" stroke="#fff" stroke-width="1.7"/>
<rect x="1576.80" y="410.20" width="13.20" height="16.40" fill="none" stroke="#fff" stroke-width="1.7"/>
<rect x="1438.00" y="447.80" width="13.20" height="16.40" fill="none" stroke="#fff" stroke-width="1.7"/>
<rect x="1435.30" y="587.30" width="13.20" height="16.40" fill="none" stroke="#fff" stroke-width="1.7"/>
<rect x="1736.90" y="213.20" width="13.20" height="16.40" fill="none" stroke="#fff" stroke-width="1.7"/>
<rect x="1653.90" y="239.30" width="13.20" height="16.40" fill="none" stroke="#fff" stroke-width="1.7"/>
<rect x="1514.40" y="229.80" width="13.20" height="16.40" fill="none" stroke="#fff" stroke-width="1.7"/>
<rect x="1523.40" y="234.80" width="13.20" height="16.40" fill="none" stroke="#fff" stroke-width="1.7"/>
<rect x="1531.40" y="225.80" width="13.20" height="16.40" fill="none" stroke="#fff" stroke-width="1.7"/>
<rect x="1538.40" y="219.80" width="13.20" height="16.40" fill="none" stroke="#fff" stroke-width="1.7"/>
<rect x="1540.40" y="232.80" width="13.20" height="16.40" fill="none" stroke="#fff" stroke-width="1.7"/>
<rect x="1505.40" y="235.80" width="13.20" height="16.40" fill="none" stroke="#fff" stroke-width="1.7"/>
<rect x="1549.40" y="223.80" width="13.20" height="16.40" fill="none" stroke="#fff" stroke-width="1.7"/>
<rect x="1459.50" y="269.70" width="12.00" height="15.20" fill="none" stroke="#000" stroke-width="2.2"/>
<ellipse cx="1372.00" cy="175.80" rx="4.50" ry="5.40" fill="#00ff00" stroke="#000" stroke-width="1.1" />
<ellipse cx="1400.00" cy="204.80" rx="4.50" ry="5.40" fill="#4a9a4a" stroke="#000" stroke-width="1.1" />
<ellipse cx="1447.50" cy="194.50" rx="4.50" ry="5.40" fill="#a0b848" stroke="#000" stroke-width="1.1" />
<ellipse cx="1473.00" cy="185.90" rx="4.50" ry="5.40" fill="#ffff00" stroke="#000" stroke-width="1.1" />
<ellipse cx="1504.80" cy="190.90" rx="4.50" ry="5.40" fill="#e8c020" stroke="#000" stroke-width="1.1" />
<ellipse cx="1541.40" cy="200.00" rx="4.50" ry="5.40" fill="#e0a030" stroke="#000" stroke-width="1.1" />
<ellipse cx="1446.10" cy="222.00" rx="4.50" ry="5.40" fill="#56683c" stroke="#000" stroke-width="1.1" />
<ellipse cx="1588.80" cy="204.70" rx="4.50" ry="5.40" fill="#d07828" stroke="#000" stroke-width="1.1" />
<ellipse cx="1595.00" cy="205.80" rx="4.50" ry="5.40" fill="#b06830" stroke="#000" stroke-width="1.1" />
<ellipse cx="1411.10" cy="268.00" rx="4.50" ry="5.40" fill="#60b8a0" stroke="#000" stroke-width="1.1" />
<ellipse cx="1391.00" cy="293.00" rx="4.50" ry="5.40" fill="#00ffff" stroke="#000" stroke-width="1.1" />
<ellipse cx="1466.90" cy="275.80" rx="4.50" ry="5.40" fill="#999999" stroke="#000" stroke-width="1.1" />
<ellipse cx="1616.00" cy="259.00" rx="4.50" ry="5.40" fill="#c05060" stroke="#000" stroke-width="1.1" />
<ellipse cx="1574.80" cy="218.00" rx="4.50" ry="5.40" fill="#6a4028" stroke="#000" stroke-width="1.1" />
<ellipse cx="1564.00" cy="212.80" rx="4.50" ry="5.40" fill="#7a4a28" stroke="#000" stroke-width="1.1" />
<ellipse cx="1553.10" cy="214.50" rx="4.50" ry="5.40" fill="#9a5a30" stroke="#000" stroke-width="1.1" />
<ellipse cx="1526.00" cy="239.00" rx="4.50" ry="5.40" fill="#a06840" stroke="#000" stroke-width="1.1" />
<ellipse cx="1526.00" cy="234.40" rx="4.50" ry="5.40" fill="#c08060" stroke="#000" stroke-width="1.1" />
<ellipse cx="1531.90" cy="232.00" rx="4.50" ry="5.40" fill="#d09068" stroke="#000" stroke-width="1.1" />
<ellipse cx="1538.40" cy="231.20" rx="4.50" ry="5.40" fill="#c88460" stroke="#000" stroke-width="1.1" />
<ellipse cx="1543.00" cy="233.90" rx="4.50" ry="5.40" fill="#d08868" stroke="#000" stroke-width="1.1" />
<ellipse cx="1533.10" cy="222.70" rx="4.50" ry="5.40" fill="#c08058" stroke="#000" stroke-width="1.1" />
<ellipse cx="1550.00" cy="225.00" rx="4.50" ry="5.40" fill="#d08860" stroke="#000" stroke-width="1.1" />
<ellipse cx="1558.30" cy="226.60" rx="4.50" ry="5.40" fill="#d08860" stroke="#000" stroke-width="1.1" />
<ellipse cx="1560.00" cy="231.90" rx="4.50" ry="5.40" fill="#f09070" stroke="#000" stroke-width="1.1" />
<ellipse cx="1510.30" cy="238.80" rx="4.50" ry="5.40" fill="#f0c0a0" stroke="#000" stroke-width="1.1" />
<ellipse cx="1509.20" cy="250.80" rx="4.50" ry="5.40" fill="#f0b898" stroke="#000" stroke-width="1.1" />
<ellipse cx="1448.90" cy="306.90" rx="4.50" ry="5.40" fill="#000000" stroke="#000" stroke-width="1.1" />
<ellipse cx="1396.90" cy="335.30" rx="4.50" ry="5.40" fill="#0090a0" stroke="#000" stroke-width="1.1" />
<ellipse cx="1438.00" cy="330.00" rx="4.50" ry="5.40" fill="#6080a8" stroke="#000" stroke-width="1.1" />
<ellipse cx="1463.90" cy="336.90" rx="4.50" ry="5.40" fill="#8a88b8" stroke="#000" stroke-width="1.1" />
<ellipse cx="1494.00" cy="372.80" rx="4.50" ry="5.40" fill="#5c3c68" stroke="#000" stroke-width="1.1" />
<ellipse cx="1581.00" cy="321.90" rx="4.50" ry="5.40" fill="#c05890" stroke="#000" stroke-width="1.1" />
<ellipse cx="1443.00" cy="405.00" rx="4.50" ry="5.40" fill="#5060a8" stroke="#000" stroke-width="1.1" />
<ellipse cx="1599.80" cy="419.80" rx="4.50" ry="5.40" fill="#ff00ff" stroke="#000" stroke-width="1.1" />
<ellipse cx="1445.00" cy="480.10" rx="4.50" ry="5.40" fill="#3848a0" stroke="#000" stroke-width="1.1" />
<ellipse cx="1443.00" cy="621.00" rx="4.50" ry="5.40" fill="#0000ff" stroke="#000" stroke-width="1.1" />
<ellipse cx="1759.00" cy="217.00" rx="4.50" ry="5.40" fill="#ff0000" stroke="#000" stroke-width="1.1" />
<ellipse cx="1687.00" cy="240.00" rx="4.50" ry="5.40" fill="#b83848" stroke="#000" stroke-width="1.1" />
</g>
<rect x="1250.00" y="144.30" width="658.30" height="613.80" fill="none" stroke="#929292" stroke-width="1.7"/>
<rect x="1697.00" y="542.00" width="205.00" height="162.70" fill="url(#t1)" stroke="#8a8a8a" stroke-width="1.6"/>
<clipPath id="insc"><rect x="1697.8" y="542.8" width="203.4" height="161.1"/></clipPath><g clip-path="url(#insc)">
<rect x="1884.34" y="566.45" width="12.80" height="15.60" fill="none" stroke="#fff" stroke-width="1.6"/>
<rect x="1832.97" y="566.07" width="12.80" height="15.60" fill="none" stroke="#fff" stroke-width="1.6"/>
<rect x="1724.97" y="591.57" width="12.80" height="15.60" fill="none" stroke="#fff" stroke-width="1.6"/>
<rect x="1792.47" y="615.20" width="12.80" height="15.60" fill="none" stroke="#fff" stroke-width="1.6"/>
<rect x="1882.47" y="613.70" width="12.80" height="15.60" fill="none" stroke="#fff" stroke-width="1.6"/>
<rect x="1811.97" y="631.70" width="12.80" height="15.60" fill="none" stroke="#fff" stroke-width="1.6"/>
<rect x="1702.84" y="631.32" width="12.80" height="15.60" fill="none" stroke="#fff" stroke-width="1.6"/>
<rect x="1709.97" y="642.20" width="12.80" height="15.60" fill="none" stroke="#fff" stroke-width="1.6"/>
<rect x="1717.84" y="657.20" width="12.80" height="15.60" fill="none" stroke="#fff" stroke-width="1.6"/>
<rect x="1796.59" y="662.45" width="12.80" height="15.60" fill="none" stroke="#fff" stroke-width="1.6"/>
<ellipse cx="1790.62" cy="575.75" rx="4.40" ry="5.20" fill="#c88058" stroke="#000" stroke-width="1.1" />
<ellipse cx="1861.87" cy="602.75" rx="4.40" ry="5.20" fill="#d08050" stroke="#000" stroke-width="1.1" />
<ellipse cx="1743.74" cy="620.75" rx="4.40" ry="5.20" fill="#d08050" stroke="#000" stroke-width="1.1" />
<ellipse cx="1759.49" cy="624.50" rx="4.40" ry="5.20" fill="#f0a880" stroke="#000" stroke-width="1.1" />
<ellipse cx="1710.74" cy="626.00" rx="4.40" ry="5.20" fill="#c87848" stroke="#000" stroke-width="1.1" />
<ellipse cx="1770.74" cy="634.62" rx="4.40" ry="5.20" fill="#d07850" stroke="#000" stroke-width="1.1" />
<ellipse cx="1729.49" cy="642.12" rx="4.40" ry="5.20" fill="#b86838" stroke="#000" stroke-width="1.1" />
<ellipse cx="1784.62" cy="646.62" rx="4.40" ry="5.20" fill="#d88058" stroke="#000" stroke-width="1.1" />
<ellipse cx="1864.49" cy="660.12" rx="4.40" ry="5.20" fill="#f09070" stroke="#000" stroke-width="1.1" />
<ellipse cx="1886.99" cy="623.00" rx="4.40" ry="5.20" fill="#b06838" stroke="#000" stroke-width="1.1" />
</g>
<rect x="1645.00" y="717.50" width="260.80" height="33.70" fill="#333333"/>
<text x="1646.00" y="744.60" font-size="25" fill="#f2f2f2" textLength="229.00" lengthAdjust="spacingAndGlyphs"  stroke="#f2f2f2" stroke-width="0.4">RGB Triplet: 217, 140, 94</text></svg>
</body></html>
